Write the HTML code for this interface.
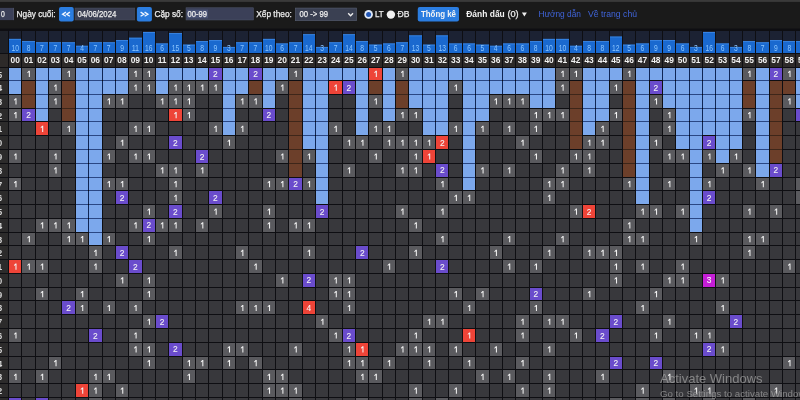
<!DOCTYPE html>
<html><head><meta charset="utf-8">
<style>
html,body{margin:0;padding:0;width:800px;height:400px;overflow:hidden;background:#1a1a1a;}
body{position:relative;font-family:"Liberation Sans", sans-serif;}
svg text{font-family:"Liberation Sans", sans-serif;}
.bt{font-size:8.2px;fill:#8cc6ff;text-anchor:middle;}
.nt{font-size:8.4px;font-weight:bold;fill:#f2f2f2;text-anchor:middle;}
.ht{font-size:8.5px;fill:#ececec;stroke:#ececec;stroke-width:0.25px;}
.hb{font-size:8.5px;font-weight:bold;fill:#f4f4f4;}
.hl{font-size:8.5px;fill:#3f63d8;}
.lt{font-size:8.4px;font-weight:bold;fill:#d8d8d8;text-anchor:end;}
.aw{font-size:13px;fill:#a8a8a8;fill-opacity:0.68;}
.aw2{font-size:9.7px;fill:#a8a8a8;fill-opacity:0.68;}
.ct{font-size:8.4px;fill:#f4f4f4;stroke:#f4f4f4;stroke-width:0.1px;text-anchor:middle;}
.c1{fill:#f2f2f2;}
</style></head><body>
<svg width="800" height="400" viewBox="0 0 800 400" style="position:absolute;left:0;top:0;will-change:transform">
<rect x="0" y="0" width="800" height="30" fill="#1a1a1a"/>
<rect x="0" y="0" width="800" height="1.9" fill="#3a3a3a"/>
<rect x="-2" y="7.9" width="15.9" height="12.2" fill="#3b4058"/>
<rect x="13.3" y="7.9" width="0.6" height="12.2" fill="#5a5f70"/>
<text x="1.1" y="16.9" class="ht" textLength="3.8" lengthAdjust="spacingAndGlyphs" >0</text>
<text x="16.6" y="16.9" class="ht" textLength="39" lengthAdjust="spacingAndGlyphs" >Ngày cuối:</text>
<rect x="59" y="6.9" width="14.75" height="14.6" rx="2" fill="#2b7de0"/>
<path d="M65.9 12.1L62.6 14.2L65.9 16.3M69.9 12.1L66.6 14.2L69.9 16.3" fill="none" stroke="#f0f6ff" stroke-width="1.35"/>
<rect x="75" y="8" width="59.75" height="12" fill="#3b3f52" stroke="#4a4f60" stroke-width="0.5"/>
<text x="77.5" y="16.9" class="ht" textLength="38.75" lengthAdjust="spacingAndGlyphs" >04/06/2024</text>
<rect x="136.9" y="6.9" width="15" height="14.6" rx="2" fill="#2b7de0"/>
<path d="M140.6 12.1L143.9 14.2L140.6 16.3M144.6 12.1L147.9 14.2L144.6 16.3" fill="none" stroke="#f0f6ff" stroke-width="1.35"/>
<text x="154.4" y="16.9" class="ht" textLength="28.6" lengthAdjust="spacingAndGlyphs" >Cặp số:</text>
<rect x="186" y="7.75" width="67.5" height="12.25" fill="#3b4058" stroke="#4e5468" stroke-width="0.5"/>
<rect x="187" y="9.6" width="21" height="8.8" fill="#485072"/>
<text x="187.5" y="16.9" class="ht" textLength="19.5" lengthAdjust="spacingAndGlyphs" >00-99</text>
<text x="256.25" y="16.9" class="ht" textLength="35.6" lengthAdjust="spacingAndGlyphs" >Xếp theo:</text>
<rect x="295.3" y="8.05" width="61.3" height="12.65" fill="#3a4052" stroke="#596072" stroke-width="0.6"/>
<text x="299.4" y="16.9" class="ht" textLength="28.6" lengthAdjust="spacingAndGlyphs" >00 -&gt; 99</text>
<polyline points="348.2,13.2 350.6,15.8 353,13.2" fill="none" stroke="#eeeeee" stroke-width="1.35"/>
<circle cx="368.6" cy="14.4" r="4.3" fill="#dfe9f7"/>
<circle cx="368.6" cy="14.4" r="2.5" fill="#1f55b5"/>
<text x="375" y="16.9" class="ht" textLength="8.75" lengthAdjust="spacingAndGlyphs" >LT</text>
<circle cx="390.9" cy="14.6" r="4.2" fill="#f2f2f2"/>
<text x="397.5" y="16.9" class="ht" textLength="11.9" lengthAdjust="spacingAndGlyphs" >ĐB</text>
<rect x="417.75" y="6.9" width="41.25" height="14.6" rx="2" fill="#2b7de0"/>
<text x="421" y="17" class="hb" textLength="35" lengthAdjust="spacingAndGlyphs" >Thống kê</text>
<text x="466.25" y="16.9" class="hb" textLength="38.5" lengthAdjust="spacingAndGlyphs" >Đánh dấu</text>
<text x="507.4" y="16.9" class="ht" textLength="11.3" lengthAdjust="spacingAndGlyphs" >(0)</text>
<polygon points="521.9,12.6 526.9,12.6 524.4,16.6" fill="#eeeeee"/>
<text x="538.4" y="17.2" class="hl" textLength="42.6" lengthAdjust="spacingAndGlyphs" >Hướng dẫn</text>
<text x="588" y="17.2" class="hl" textLength="49" lengthAdjust="spacingAndGlyphs" >Về trang chủ</text>
<rect x="0" y="28.6" width="800" height="371.4" fill="#0e0e12"/>
<rect x="0" y="31" width="8" height="22" fill="#1e2128"/>
<rect x="0" y="54" width="8" height="13" fill="#2d2a29"/>
<rect x="9" y="31" width="12" height="22" fill="#1c2233"/>
<rect x="9" y="38.9" width="12" height="14.1" fill="#1a69cf"/>
<rect x="9" y="38.9" width="12" height="0.8" fill="#3f8ae6"/>
<rect x="9" y="54" width="12" height="13" fill="#2d2a29"/>
<rect x="22" y="31" width="13" height="22" fill="#1c2233"/>
<rect x="22" y="41.2" width="13" height="11.8" fill="#1a69cf"/>
<rect x="22" y="41.2" width="13" height="0.8" fill="#3f8ae6"/>
<rect x="22" y="54" width="13" height="13" fill="#2d2a29"/>
<rect x="36" y="31" width="12" height="22" fill="#1c2233"/>
<rect x="36" y="42.35" width="12" height="10.65" fill="#1a69cf"/>
<rect x="36" y="42.35" width="12" height="0.8" fill="#3f8ae6"/>
<rect x="36" y="54" width="12" height="13" fill="#2d2a29"/>
<rect x="49" y="31" width="12" height="22" fill="#1c2233"/>
<rect x="49" y="42.35" width="12" height="10.65" fill="#1a69cf"/>
<rect x="49" y="42.35" width="12" height="0.8" fill="#3f8ae6"/>
<rect x="49" y="54" width="12" height="13" fill="#2d2a29"/>
<rect x="62" y="31" width="13" height="22" fill="#1c2233"/>
<rect x="62" y="42.35" width="13" height="10.65" fill="#1a69cf"/>
<rect x="62" y="42.35" width="13" height="0.8" fill="#3f8ae6"/>
<rect x="62" y="54" width="13" height="13" fill="#2d2a29"/>
<rect x="76" y="31" width="12" height="22" fill="#1c2233"/>
<rect x="76" y="45.8" width="12" height="7.2" fill="#1a69cf"/>
<rect x="76" y="45.8" width="12" height="0.8" fill="#3f8ae6"/>
<rect x="76" y="54" width="12" height="13" fill="#2d2a29"/>
<rect x="89" y="31" width="13" height="22" fill="#1c2233"/>
<rect x="89" y="42.35" width="13" height="10.65" fill="#1a69cf"/>
<rect x="89" y="42.35" width="13" height="0.8" fill="#3f8ae6"/>
<rect x="89" y="54" width="13" height="13" fill="#2d2a29"/>
<rect x="103" y="31" width="12" height="22" fill="#1c2233"/>
<rect x="103" y="42.35" width="12" height="10.65" fill="#1a69cf"/>
<rect x="103" y="42.35" width="12" height="0.8" fill="#3f8ae6"/>
<rect x="103" y="54" width="12" height="13" fill="#2d2a29"/>
<rect x="116" y="31" width="12" height="22" fill="#1c2233"/>
<rect x="116" y="40.05" width="12" height="12.95" fill="#1a69cf"/>
<rect x="116" y="40.05" width="12" height="0.8" fill="#3f8ae6"/>
<rect x="116" y="54" width="12" height="13" fill="#2d2a29"/>
<rect x="129" y="31" width="13" height="22" fill="#1c2233"/>
<rect x="129" y="37.75" width="13" height="15.25" fill="#1a69cf"/>
<rect x="129" y="37.75" width="13" height="0.8" fill="#3f8ae6"/>
<rect x="129" y="54" width="13" height="13" fill="#2d2a29"/>
<rect x="143" y="31" width="12" height="22" fill="#1c2233"/>
<rect x="143" y="32" width="12" height="21" fill="#1a69cf"/>
<rect x="143" y="32" width="12" height="0.8" fill="#3f8ae6"/>
<rect x="143" y="54" width="12" height="13" fill="#2d2a29"/>
<rect x="156" y="31" width="12" height="22" fill="#1c2233"/>
<rect x="156" y="43.5" width="12" height="9.5" fill="#1a69cf"/>
<rect x="156" y="43.5" width="12" height="0.8" fill="#3f8ae6"/>
<rect x="156" y="54" width="12" height="13" fill="#2d2a29"/>
<rect x="169" y="31" width="13" height="22" fill="#1c2233"/>
<rect x="169" y="33.15" width="13" height="19.85" fill="#1a69cf"/>
<rect x="169" y="33.15" width="13" height="0.8" fill="#3f8ae6"/>
<rect x="169" y="54" width="13" height="13" fill="#2d2a29"/>
<rect x="183" y="31" width="12" height="22" fill="#1c2233"/>
<rect x="183" y="44.65" width="12" height="8.35" fill="#1a69cf"/>
<rect x="183" y="44.65" width="12" height="0.8" fill="#3f8ae6"/>
<rect x="183" y="54" width="12" height="13" fill="#2d2a29"/>
<rect x="196" y="31" width="12" height="22" fill="#1c2233"/>
<rect x="196" y="41.2" width="12" height="11.8" fill="#1a69cf"/>
<rect x="196" y="41.2" width="12" height="0.8" fill="#3f8ae6"/>
<rect x="196" y="54" width="12" height="13" fill="#2d2a29"/>
<rect x="209" y="31" width="13" height="22" fill="#1c2233"/>
<rect x="209" y="40.05" width="13" height="12.95" fill="#1a69cf"/>
<rect x="209" y="40.05" width="13" height="0.8" fill="#3f8ae6"/>
<rect x="209" y="54" width="13" height="13" fill="#2d2a29"/>
<rect x="223" y="31" width="12" height="22" fill="#1c2233"/>
<rect x="223" y="46.95" width="12" height="6.05" fill="#1a69cf"/>
<rect x="223" y="46.95" width="12" height="0.8" fill="#3f8ae6"/>
<rect x="223" y="54" width="12" height="13" fill="#2d2a29"/>
<rect x="236" y="31" width="12" height="22" fill="#1c2233"/>
<rect x="236" y="42.35" width="12" height="10.65" fill="#1a69cf"/>
<rect x="236" y="42.35" width="12" height="0.8" fill="#3f8ae6"/>
<rect x="236" y="54" width="12" height="13" fill="#2d2a29"/>
<rect x="249" y="31" width="13" height="22" fill="#1c2233"/>
<rect x="249" y="42.35" width="13" height="10.65" fill="#1a69cf"/>
<rect x="249" y="42.35" width="13" height="0.8" fill="#3f8ae6"/>
<rect x="249" y="54" width="13" height="13" fill="#2d2a29"/>
<rect x="263" y="31" width="12" height="22" fill="#1c2233"/>
<rect x="263" y="38.9" width="12" height="14.1" fill="#1a69cf"/>
<rect x="263" y="38.9" width="12" height="0.8" fill="#3f8ae6"/>
<rect x="263" y="54" width="12" height="13" fill="#2d2a29"/>
<rect x="276" y="31" width="12" height="22" fill="#1c2233"/>
<rect x="276" y="43.5" width="12" height="9.5" fill="#1a69cf"/>
<rect x="276" y="43.5" width="12" height="0.8" fill="#3f8ae6"/>
<rect x="276" y="54" width="12" height="13" fill="#2d2a29"/>
<rect x="289" y="31" width="13" height="22" fill="#1c2233"/>
<rect x="289" y="42.35" width="13" height="10.65" fill="#1a69cf"/>
<rect x="289" y="42.35" width="13" height="0.8" fill="#3f8ae6"/>
<rect x="289" y="54" width="13" height="13" fill="#2d2a29"/>
<rect x="303" y="31" width="12" height="22" fill="#1c2233"/>
<rect x="303" y="34.3" width="12" height="18.7" fill="#1a69cf"/>
<rect x="303" y="34.3" width="12" height="0.8" fill="#3f8ae6"/>
<rect x="303" y="54" width="12" height="13" fill="#2d2a29"/>
<rect x="316" y="31" width="12" height="22" fill="#1c2233"/>
<rect x="316" y="46.95" width="12" height="6.05" fill="#1a69cf"/>
<rect x="316" y="46.95" width="12" height="0.8" fill="#3f8ae6"/>
<rect x="316" y="54" width="12" height="13" fill="#2d2a29"/>
<rect x="329" y="31" width="13" height="22" fill="#1c2233"/>
<rect x="329" y="42.35" width="13" height="10.65" fill="#1a69cf"/>
<rect x="329" y="42.35" width="13" height="0.8" fill="#3f8ae6"/>
<rect x="329" y="54" width="13" height="13" fill="#2d2a29"/>
<rect x="343" y="31" width="12" height="22" fill="#1c2233"/>
<rect x="343" y="34.3" width="12" height="18.7" fill="#1a69cf"/>
<rect x="343" y="34.3" width="12" height="0.8" fill="#3f8ae6"/>
<rect x="343" y="54" width="12" height="13" fill="#2d2a29"/>
<rect x="356" y="31" width="12" height="22" fill="#1c2233"/>
<rect x="356" y="41.2" width="12" height="11.8" fill="#1a69cf"/>
<rect x="356" y="41.2" width="12" height="0.8" fill="#3f8ae6"/>
<rect x="356" y="54" width="12" height="13" fill="#2d2a29"/>
<rect x="369" y="31" width="13" height="22" fill="#1c2233"/>
<rect x="369" y="44.65" width="13" height="8.35" fill="#1a69cf"/>
<rect x="369" y="44.65" width="13" height="0.8" fill="#3f8ae6"/>
<rect x="369" y="54" width="13" height="13" fill="#2d2a29"/>
<rect x="383" y="31" width="12" height="22" fill="#1c2233"/>
<rect x="383" y="43.5" width="12" height="9.5" fill="#1a69cf"/>
<rect x="383" y="43.5" width="12" height="0.8" fill="#3f8ae6"/>
<rect x="383" y="54" width="12" height="13" fill="#2d2a29"/>
<rect x="396" y="31" width="12" height="22" fill="#1c2233"/>
<rect x="396" y="42.35" width="12" height="10.65" fill="#1a69cf"/>
<rect x="396" y="42.35" width="12" height="0.8" fill="#3f8ae6"/>
<rect x="396" y="54" width="12" height="13" fill="#2d2a29"/>
<rect x="409" y="31" width="13" height="22" fill="#1c2233"/>
<rect x="409" y="35.45" width="13" height="17.55" fill="#1a69cf"/>
<rect x="409" y="35.45" width="13" height="0.8" fill="#3f8ae6"/>
<rect x="409" y="54" width="13" height="13" fill="#2d2a29"/>
<rect x="423" y="31" width="12" height="22" fill="#1c2233"/>
<rect x="423" y="44.65" width="12" height="8.35" fill="#1a69cf"/>
<rect x="423" y="44.65" width="12" height="0.8" fill="#3f8ae6"/>
<rect x="423" y="54" width="12" height="13" fill="#2d2a29"/>
<rect x="436" y="31" width="12" height="22" fill="#1c2233"/>
<rect x="436" y="35.45" width="12" height="17.55" fill="#1a69cf"/>
<rect x="436" y="35.45" width="12" height="0.8" fill="#3f8ae6"/>
<rect x="436" y="54" width="12" height="13" fill="#2d2a29"/>
<rect x="449" y="31" width="13" height="22" fill="#1c2233"/>
<rect x="449" y="43.5" width="13" height="9.5" fill="#1a69cf"/>
<rect x="449" y="43.5" width="13" height="0.8" fill="#3f8ae6"/>
<rect x="449" y="54" width="13" height="13" fill="#2d2a29"/>
<rect x="463" y="31" width="12" height="22" fill="#1c2233"/>
<rect x="463" y="43.5" width="12" height="9.5" fill="#1a69cf"/>
<rect x="463" y="43.5" width="12" height="0.8" fill="#3f8ae6"/>
<rect x="463" y="54" width="12" height="13" fill="#2d2a29"/>
<rect x="476" y="31" width="13" height="22" fill="#1c2233"/>
<rect x="476" y="44.65" width="13" height="8.35" fill="#1a69cf"/>
<rect x="476" y="44.65" width="13" height="0.8" fill="#3f8ae6"/>
<rect x="476" y="54" width="13" height="13" fill="#2d2a29"/>
<rect x="490" y="31" width="12" height="22" fill="#1c2233"/>
<rect x="490" y="45.8" width="12" height="7.2" fill="#1a69cf"/>
<rect x="490" y="45.8" width="12" height="0.8" fill="#3f8ae6"/>
<rect x="490" y="54" width="12" height="13" fill="#2d2a29"/>
<rect x="503" y="31" width="12" height="22" fill="#1c2233"/>
<rect x="503" y="43.5" width="12" height="9.5" fill="#1a69cf"/>
<rect x="503" y="43.5" width="12" height="0.8" fill="#3f8ae6"/>
<rect x="503" y="54" width="12" height="13" fill="#2d2a29"/>
<rect x="516" y="31" width="13" height="22" fill="#1c2233"/>
<rect x="516" y="43.5" width="13" height="9.5" fill="#1a69cf"/>
<rect x="516" y="43.5" width="13" height="0.8" fill="#3f8ae6"/>
<rect x="516" y="54" width="13" height="13" fill="#2d2a29"/>
<rect x="530" y="31" width="12" height="22" fill="#1c2233"/>
<rect x="530" y="41.2" width="12" height="11.8" fill="#1a69cf"/>
<rect x="530" y="41.2" width="12" height="0.8" fill="#3f8ae6"/>
<rect x="530" y="54" width="12" height="13" fill="#2d2a29"/>
<rect x="543" y="31" width="12" height="22" fill="#1c2233"/>
<rect x="543" y="38.9" width="12" height="14.1" fill="#1a69cf"/>
<rect x="543" y="38.9" width="12" height="0.8" fill="#3f8ae6"/>
<rect x="543" y="54" width="12" height="13" fill="#2d2a29"/>
<rect x="556" y="31" width="13" height="22" fill="#1c2233"/>
<rect x="556" y="38.9" width="13" height="14.1" fill="#1a69cf"/>
<rect x="556" y="38.9" width="13" height="0.8" fill="#3f8ae6"/>
<rect x="556" y="54" width="13" height="13" fill="#2d2a29"/>
<rect x="570" y="31" width="12" height="22" fill="#1c2233"/>
<rect x="570" y="45.8" width="12" height="7.2" fill="#1a69cf"/>
<rect x="570" y="45.8" width="12" height="0.8" fill="#3f8ae6"/>
<rect x="570" y="54" width="12" height="13" fill="#2d2a29"/>
<rect x="583" y="31" width="12" height="22" fill="#1c2233"/>
<rect x="583" y="41.2" width="12" height="11.8" fill="#1a69cf"/>
<rect x="583" y="41.2" width="12" height="0.8" fill="#3f8ae6"/>
<rect x="583" y="54" width="12" height="13" fill="#2d2a29"/>
<rect x="596" y="31" width="13" height="22" fill="#1c2233"/>
<rect x="596" y="41.2" width="13" height="11.8" fill="#1a69cf"/>
<rect x="596" y="41.2" width="13" height="0.8" fill="#3f8ae6"/>
<rect x="596" y="54" width="13" height="13" fill="#2d2a29"/>
<rect x="610" y="31" width="12" height="22" fill="#1c2233"/>
<rect x="610" y="36.6" width="12" height="16.4" fill="#1a69cf"/>
<rect x="610" y="36.6" width="12" height="0.8" fill="#3f8ae6"/>
<rect x="610" y="54" width="12" height="13" fill="#2d2a29"/>
<rect x="623" y="31" width="12" height="22" fill="#1c2233"/>
<rect x="623" y="44.65" width="12" height="8.35" fill="#1a69cf"/>
<rect x="623" y="44.65" width="12" height="0.8" fill="#3f8ae6"/>
<rect x="623" y="54" width="12" height="13" fill="#2d2a29"/>
<rect x="636" y="31" width="13" height="22" fill="#1c2233"/>
<rect x="636" y="43.5" width="13" height="9.5" fill="#1a69cf"/>
<rect x="636" y="43.5" width="13" height="0.8" fill="#3f8ae6"/>
<rect x="636" y="54" width="13" height="13" fill="#2d2a29"/>
<rect x="650" y="31" width="12" height="22" fill="#1c2233"/>
<rect x="650" y="40.05" width="12" height="12.95" fill="#1a69cf"/>
<rect x="650" y="40.05" width="12" height="0.8" fill="#3f8ae6"/>
<rect x="650" y="54" width="12" height="13" fill="#2d2a29"/>
<rect x="663" y="31" width="12" height="22" fill="#1c2233"/>
<rect x="663" y="40.05" width="12" height="12.95" fill="#1a69cf"/>
<rect x="663" y="40.05" width="12" height="0.8" fill="#3f8ae6"/>
<rect x="663" y="54" width="12" height="13" fill="#2d2a29"/>
<rect x="676" y="31" width="13" height="22" fill="#1c2233"/>
<rect x="676" y="43.5" width="13" height="9.5" fill="#1a69cf"/>
<rect x="676" y="43.5" width="13" height="0.8" fill="#3f8ae6"/>
<rect x="676" y="54" width="13" height="13" fill="#2d2a29"/>
<rect x="690" y="31" width="12" height="22" fill="#1c2233"/>
<rect x="690" y="46.95" width="12" height="6.05" fill="#1a69cf"/>
<rect x="690" y="46.95" width="12" height="0.8" fill="#3f8ae6"/>
<rect x="690" y="54" width="12" height="13" fill="#2d2a29"/>
<rect x="703" y="31" width="12" height="22" fill="#1c2233"/>
<rect x="703" y="32" width="12" height="21" fill="#1a69cf"/>
<rect x="703" y="32" width="12" height="0.8" fill="#3f8ae6"/>
<rect x="703" y="54" width="12" height="13" fill="#2d2a29"/>
<rect x="716" y="31" width="13" height="22" fill="#1c2233"/>
<rect x="716" y="43.5" width="13" height="9.5" fill="#1a69cf"/>
<rect x="716" y="43.5" width="13" height="0.8" fill="#3f8ae6"/>
<rect x="716" y="54" width="13" height="13" fill="#2d2a29"/>
<rect x="730" y="31" width="12" height="22" fill="#1c2233"/>
<rect x="730" y="46.95" width="12" height="6.05" fill="#1a69cf"/>
<rect x="730" y="46.95" width="12" height="0.8" fill="#3f8ae6"/>
<rect x="730" y="54" width="12" height="13" fill="#2d2a29"/>
<rect x="743" y="31" width="12" height="22" fill="#1c2233"/>
<rect x="743" y="41.2" width="12" height="11.8" fill="#1a69cf"/>
<rect x="743" y="41.2" width="12" height="0.8" fill="#3f8ae6"/>
<rect x="743" y="54" width="12" height="13" fill="#2d2a29"/>
<rect x="756" y="31" width="13" height="22" fill="#1c2233"/>
<rect x="756" y="42.35" width="13" height="10.65" fill="#1a69cf"/>
<rect x="756" y="42.35" width="13" height="0.8" fill="#3f8ae6"/>
<rect x="756" y="54" width="13" height="13" fill="#2d2a29"/>
<rect x="770" y="31" width="12" height="22" fill="#1c2233"/>
<rect x="770" y="40.05" width="12" height="12.95" fill="#1a69cf"/>
<rect x="770" y="40.05" width="12" height="0.8" fill="#3f8ae6"/>
<rect x="770" y="54" width="12" height="13" fill="#2d2a29"/>
<rect x="783" y="31" width="12" height="22" fill="#1c2233"/>
<rect x="783" y="41.2" width="12" height="11.8" fill="#1a69cf"/>
<rect x="783" y="41.2" width="12" height="0.8" fill="#3f8ae6"/>
<rect x="783" y="54" width="12" height="13" fill="#2d2a29"/>
<rect x="796" y="31" width="13" height="22" fill="#1c2233"/>
<rect x="796" y="41.2" width="13" height="11.8" fill="#1a69cf"/>
<rect x="796" y="41.2" width="13" height="0.8" fill="#3f8ae6"/>
<rect x="796" y="54" width="13" height="13" fill="#2d2a29"/>
<rect x="0" y="68" width="8" height="12" fill="#2c2b2b"/>
<rect x="9" y="68" width="12" height="12" fill="#7ca8ec"/>
<rect x="22" y="68" width="13" height="12" fill="#5a5a5e"/>
<rect x="36" y="68" width="12" height="12" fill="#7ca8ec"/>
<rect x="49" y="68" width="12" height="12" fill="#7ca8ec"/>
<rect x="62" y="68" width="13" height="12" fill="#5a5a5e"/>
<rect x="76" y="68" width="12" height="12" fill="#7ca8ec"/>
<rect x="89" y="68" width="13" height="12" fill="#7ca8ec"/>
<rect x="103" y="68" width="12" height="12" fill="#7ca8ec"/>
<rect x="116" y="68" width="12" height="12" fill="#7ca8ec"/>
<rect x="129" y="68" width="13" height="12" fill="#5a5a5e"/>
<rect x="143" y="68" width="12" height="12" fill="#5a5a5e"/>
<rect x="156" y="68" width="12" height="12" fill="#7ca8ec"/>
<rect x="169" y="68" width="13" height="12" fill="#7ca8ec"/>
<rect x="183" y="68" width="12" height="12" fill="#7ca8ec"/>
<rect x="196" y="68" width="12" height="12" fill="#7ca8ec"/>
<rect x="209" y="68" width="13" height="12" fill="#6a4ccc"/>
<rect x="223" y="68" width="12" height="12" fill="#7ca8ec"/>
<rect x="236" y="68" width="12" height="12" fill="#7ca8ec"/>
<rect x="249" y="68" width="13" height="12" fill="#6a4ccc"/>
<rect x="263" y="68" width="12" height="12" fill="#7ca8ec"/>
<rect x="276" y="68" width="12" height="12" fill="#7ca8ec"/>
<rect x="289" y="68" width="13" height="12" fill="#5a5a5e"/>
<rect x="303" y="68" width="12" height="12" fill="#7ca8ec"/>
<rect x="316" y="68" width="12" height="12" fill="#7ca8ec"/>
<rect x="329" y="68" width="13" height="12" fill="#7ca8ec"/>
<rect x="343" y="68" width="12" height="12" fill="#7ca8ec"/>
<rect x="356" y="68" width="12" height="12" fill="#7ca8ec"/>
<rect x="369" y="68" width="13" height="12" fill="#ee4438"/>
<rect x="383" y="68" width="12" height="12" fill="#7ca8ec"/>
<rect x="396" y="68" width="12" height="12" fill="#5a5a5e"/>
<rect x="409" y="68" width="13" height="12" fill="#7ca8ec"/>
<rect x="423" y="68" width="12" height="12" fill="#7ca8ec"/>
<rect x="436" y="68" width="12" height="12" fill="#7ca8ec"/>
<rect x="449" y="68" width="13" height="12" fill="#7ca8ec"/>
<rect x="463" y="68" width="12" height="12" fill="#7ca8ec"/>
<rect x="476" y="68" width="13" height="12" fill="#7ca8ec"/>
<rect x="490" y="68" width="12" height="12" fill="#7ca8ec"/>
<rect x="503" y="68" width="12" height="12" fill="#7ca8ec"/>
<rect x="516" y="68" width="13" height="12" fill="#7ca8ec"/>
<rect x="530" y="68" width="12" height="12" fill="#7ca8ec"/>
<rect x="543" y="68" width="12" height="12" fill="#7ca8ec"/>
<rect x="556" y="68" width="13" height="12" fill="#5a5a5e"/>
<rect x="570" y="68" width="12" height="12" fill="#5a5a5e"/>
<rect x="583" y="68" width="12" height="12" fill="#7ca8ec"/>
<rect x="596" y="68" width="13" height="12" fill="#7ca8ec"/>
<rect x="610" y="68" width="12" height="12" fill="#7ca8ec"/>
<rect x="623" y="68" width="12" height="12" fill="#5a5a5e"/>
<rect x="636" y="68" width="13" height="12" fill="#7ca8ec"/>
<rect x="650" y="68" width="12" height="12" fill="#7ca8ec"/>
<rect x="663" y="68" width="12" height="12" fill="#7ca8ec"/>
<rect x="676" y="68" width="13" height="12" fill="#7ca8ec"/>
<rect x="690" y="68" width="12" height="12" fill="#7ca8ec"/>
<rect x="703" y="68" width="12" height="12" fill="#7ca8ec"/>
<rect x="716" y="68" width="13" height="12" fill="#7ca8ec"/>
<rect x="730" y="68" width="12" height="12" fill="#7ca8ec"/>
<rect x="743" y="68" width="12" height="12" fill="#5a5a5e"/>
<rect x="756" y="68" width="13" height="12" fill="#7ca8ec"/>
<rect x="770" y="68" width="12" height="12" fill="#6a4ccc"/>
<rect x="783" y="68" width="12" height="12" fill="#5a5a5e"/>
<rect x="796" y="68" width="13" height="12" fill="#7ca8ec"/>
<rect x="0" y="81" width="8" height="13" fill="#2c2b2b"/>
<rect x="9" y="81" width="12" height="13" fill="#7ca8ec"/>
<rect x="22" y="81" width="13" height="13" fill="#6c3f2a"/>
<rect x="36" y="81" width="12" height="13" fill="#7ca8ec"/>
<rect x="49" y="81" width="12" height="13" fill="#5a5a5e"/>
<rect x="62" y="81" width="13" height="13" fill="#6c3f2a"/>
<rect x="76" y="81" width="12" height="13" fill="#7ca8ec"/>
<rect x="89" y="81" width="13" height="13" fill="#7ca8ec"/>
<rect x="103" y="81" width="12" height="13" fill="#7ca8ec"/>
<rect x="116" y="81" width="12" height="13" fill="#7ca8ec"/>
<rect x="129" y="81" width="13" height="13" fill="#5a5a5e"/>
<rect x="143" y="81" width="12" height="13" fill="#5a5a5e"/>
<rect x="156" y="81" width="12" height="13" fill="#7ca8ec"/>
<rect x="169" y="81" width="13" height="13" fill="#5a5a5e"/>
<rect x="183" y="81" width="12" height="13" fill="#5a5a5e"/>
<rect x="196" y="81" width="12" height="13" fill="#5a5a5e"/>
<rect x="209" y="81" width="13" height="13" fill="#5a5a5e"/>
<rect x="223" y="81" width="12" height="13" fill="#7ca8ec"/>
<rect x="236" y="81" width="12" height="13" fill="#7ca8ec"/>
<rect x="249" y="81" width="13" height="13" fill="#6c3f2a"/>
<rect x="263" y="81" width="12" height="13" fill="#7ca8ec"/>
<rect x="276" y="81" width="12" height="13" fill="#5a5a5e"/>
<rect x="289" y="81" width="13" height="13" fill="#6c3f2a"/>
<rect x="303" y="81" width="12" height="13" fill="#7ca8ec"/>
<rect x="316" y="81" width="12" height="13" fill="#7ca8ec"/>
<rect x="329" y="81" width="13" height="13" fill="#ee4438"/>
<rect x="343" y="81" width="12" height="13" fill="#6a4ccc"/>
<rect x="356" y="81" width="12" height="13" fill="#7ca8ec"/>
<rect x="369" y="81" width="13" height="13" fill="#6c3f2a"/>
<rect x="383" y="81" width="12" height="13" fill="#7ca8ec"/>
<rect x="396" y="81" width="12" height="13" fill="#6c3f2a"/>
<rect x="409" y="81" width="13" height="13" fill="#7ca8ec"/>
<rect x="423" y="81" width="12" height="13" fill="#7ca8ec"/>
<rect x="436" y="81" width="12" height="13" fill="#7ca8ec"/>
<rect x="449" y="81" width="13" height="13" fill="#5a5a5e"/>
<rect x="463" y="81" width="12" height="13" fill="#7ca8ec"/>
<rect x="476" y="81" width="13" height="13" fill="#7ca8ec"/>
<rect x="490" y="81" width="12" height="13" fill="#7ca8ec"/>
<rect x="503" y="81" width="12" height="13" fill="#7ca8ec"/>
<rect x="516" y="81" width="13" height="13" fill="#7ca8ec"/>
<rect x="530" y="81" width="12" height="13" fill="#7ca8ec"/>
<rect x="543" y="81" width="12" height="13" fill="#7ca8ec"/>
<rect x="556" y="81" width="13" height="13" fill="#5a5a5e"/>
<rect x="570" y="81" width="12" height="13" fill="#6c3f2a"/>
<rect x="583" y="81" width="12" height="13" fill="#7ca8ec"/>
<rect x="596" y="81" width="13" height="13" fill="#7ca8ec"/>
<rect x="610" y="81" width="12" height="13" fill="#5a5a5e"/>
<rect x="623" y="81" width="12" height="13" fill="#6c3f2a"/>
<rect x="636" y="81" width="13" height="13" fill="#7ca8ec"/>
<rect x="650" y="81" width="12" height="13" fill="#6a4ccc"/>
<rect x="663" y="81" width="12" height="13" fill="#7ca8ec"/>
<rect x="676" y="81" width="13" height="13" fill="#7ca8ec"/>
<rect x="690" y="81" width="12" height="13" fill="#7ca8ec"/>
<rect x="703" y="81" width="12" height="13" fill="#7ca8ec"/>
<rect x="716" y="81" width="13" height="13" fill="#7ca8ec"/>
<rect x="730" y="81" width="12" height="13" fill="#7ca8ec"/>
<rect x="743" y="81" width="12" height="13" fill="#6c3f2a"/>
<rect x="756" y="81" width="13" height="13" fill="#7ca8ec"/>
<rect x="770" y="81" width="12" height="13" fill="#6c3f2a"/>
<rect x="783" y="81" width="12" height="13" fill="#6c3f2a"/>
<rect x="796" y="81" width="13" height="13" fill="#7ca8ec"/>
<rect x="0" y="95" width="8" height="13" fill="#2c2b2b"/>
<rect x="9" y="95" width="12" height="13" fill="#5a5a5e"/>
<rect x="22" y="95" width="13" height="13" fill="#6c3f2a"/>
<rect x="36" y="95" width="12" height="13" fill="#7ca8ec"/>
<rect x="49" y="95" width="12" height="13" fill="#5a5a5e"/>
<rect x="62" y="95" width="13" height="13" fill="#6c3f2a"/>
<rect x="76" y="95" width="12" height="13" fill="#7ca8ec"/>
<rect x="89" y="95" width="13" height="13" fill="#7ca8ec"/>
<rect x="103" y="95" width="12" height="13" fill="#5a5a5e"/>
<rect x="116" y="95" width="12" height="13" fill="#5a5a5e"/>
<rect x="129" y="95" width="13" height="13" fill="#38383c"/>
<rect x="143" y="95" width="12" height="13" fill="#38383c"/>
<rect x="156" y="95" width="12" height="13" fill="#5a5a5e"/>
<rect x="169" y="95" width="13" height="13" fill="#5a5a5e"/>
<rect x="183" y="95" width="12" height="13" fill="#5a5a5e"/>
<rect x="196" y="95" width="12" height="13" fill="#38383c"/>
<rect x="209" y="95" width="13" height="13" fill="#38383c"/>
<rect x="223" y="95" width="12" height="13" fill="#7ca8ec"/>
<rect x="236" y="95" width="12" height="13" fill="#5a5a5e"/>
<rect x="249" y="95" width="13" height="13" fill="#5a5a5e"/>
<rect x="263" y="95" width="12" height="13" fill="#7ca8ec"/>
<rect x="276" y="95" width="12" height="13" fill="#38383c"/>
<rect x="289" y="95" width="13" height="13" fill="#6c3f2a"/>
<rect x="303" y="95" width="12" height="13" fill="#7ca8ec"/>
<rect x="316" y="95" width="12" height="13" fill="#7ca8ec"/>
<rect x="329" y="95" width="13" height="13" fill="#38383c"/>
<rect x="343" y="95" width="12" height="13" fill="#38383c"/>
<rect x="356" y="95" width="12" height="13" fill="#7ca8ec"/>
<rect x="369" y="95" width="13" height="13" fill="#5a5a5e"/>
<rect x="383" y="95" width="12" height="13" fill="#7ca8ec"/>
<rect x="396" y="95" width="12" height="13" fill="#6c3f2a"/>
<rect x="409" y="95" width="13" height="13" fill="#7ca8ec"/>
<rect x="423" y="95" width="12" height="13" fill="#7ca8ec"/>
<rect x="436" y="95" width="12" height="13" fill="#7ca8ec"/>
<rect x="449" y="95" width="13" height="13" fill="#38383c"/>
<rect x="463" y="95" width="12" height="13" fill="#7ca8ec"/>
<rect x="476" y="95" width="13" height="13" fill="#7ca8ec"/>
<rect x="490" y="95" width="12" height="13" fill="#5a5a5e"/>
<rect x="503" y="95" width="12" height="13" fill="#5a5a5e"/>
<rect x="516" y="95" width="13" height="13" fill="#5a5a5e"/>
<rect x="530" y="95" width="12" height="13" fill="#7ca8ec"/>
<rect x="543" y="95" width="12" height="13" fill="#7ca8ec"/>
<rect x="556" y="95" width="13" height="13" fill="#38383c"/>
<rect x="570" y="95" width="12" height="13" fill="#6c3f2a"/>
<rect x="583" y="95" width="12" height="13" fill="#7ca8ec"/>
<rect x="596" y="95" width="13" height="13" fill="#7ca8ec"/>
<rect x="610" y="95" width="12" height="13" fill="#38383c"/>
<rect x="623" y="95" width="12" height="13" fill="#6c3f2a"/>
<rect x="636" y="95" width="13" height="13" fill="#7ca8ec"/>
<rect x="650" y="95" width="12" height="13" fill="#5a5a5e"/>
<rect x="663" y="95" width="12" height="13" fill="#7ca8ec"/>
<rect x="676" y="95" width="13" height="13" fill="#7ca8ec"/>
<rect x="690" y="95" width="12" height="13" fill="#7ca8ec"/>
<rect x="703" y="95" width="12" height="13" fill="#7ca8ec"/>
<rect x="716" y="95" width="13" height="13" fill="#7ca8ec"/>
<rect x="730" y="95" width="12" height="13" fill="#7ca8ec"/>
<rect x="743" y="95" width="12" height="13" fill="#6c3f2a"/>
<rect x="756" y="95" width="13" height="13" fill="#7ca8ec"/>
<rect x="770" y="95" width="12" height="13" fill="#6c3f2a"/>
<rect x="783" y="95" width="12" height="13" fill="#5a5a5e"/>
<rect x="796" y="95" width="13" height="13" fill="#7ca8ec"/>
<rect x="0" y="109" width="8" height="12" fill="#2c2b2b"/>
<rect x="9" y="109" width="12" height="12" fill="#5a5a5e"/>
<rect x="22" y="109" width="13" height="12" fill="#6a4ccc"/>
<rect x="36" y="109" width="12" height="12" fill="#7ca8ec"/>
<rect x="49" y="109" width="12" height="12" fill="#38383c"/>
<rect x="62" y="109" width="13" height="12" fill="#6c3f2a"/>
<rect x="76" y="109" width="12" height="12" fill="#7ca8ec"/>
<rect x="89" y="109" width="13" height="12" fill="#7ca8ec"/>
<rect x="103" y="109" width="12" height="12" fill="#38383c"/>
<rect x="116" y="109" width="12" height="12" fill="#38383c"/>
<rect x="129" y="109" width="13" height="12" fill="#38383c"/>
<rect x="143" y="109" width="12" height="12" fill="#38383c"/>
<rect x="156" y="109" width="12" height="12" fill="#38383c"/>
<rect x="169" y="109" width="13" height="12" fill="#ee4438"/>
<rect x="183" y="109" width="12" height="12" fill="#5a5a5e"/>
<rect x="196" y="109" width="12" height="12" fill="#38383c"/>
<rect x="209" y="109" width="13" height="12" fill="#38383c"/>
<rect x="223" y="109" width="12" height="12" fill="#7ca8ec"/>
<rect x="236" y="109" width="12" height="12" fill="#38383c"/>
<rect x="249" y="109" width="13" height="12" fill="#38383c"/>
<rect x="263" y="109" width="12" height="12" fill="#6a4ccc"/>
<rect x="276" y="109" width="12" height="12" fill="#38383c"/>
<rect x="289" y="109" width="13" height="12" fill="#6c3f2a"/>
<rect x="303" y="109" width="12" height="12" fill="#7ca8ec"/>
<rect x="316" y="109" width="12" height="12" fill="#7ca8ec"/>
<rect x="329" y="109" width="13" height="12" fill="#38383c"/>
<rect x="343" y="109" width="12" height="12" fill="#38383c"/>
<rect x="356" y="109" width="12" height="12" fill="#7ca8ec"/>
<rect x="369" y="109" width="13" height="12" fill="#38383c"/>
<rect x="383" y="109" width="12" height="12" fill="#7ca8ec"/>
<rect x="396" y="109" width="12" height="12" fill="#5a5a5e"/>
<rect x="409" y="109" width="13" height="12" fill="#5a5a5e"/>
<rect x="423" y="109" width="12" height="12" fill="#7ca8ec"/>
<rect x="436" y="109" width="12" height="12" fill="#7ca8ec"/>
<rect x="449" y="109" width="13" height="12" fill="#38383c"/>
<rect x="463" y="109" width="12" height="12" fill="#7ca8ec"/>
<rect x="476" y="109" width="13" height="12" fill="#7ca8ec"/>
<rect x="490" y="109" width="12" height="12" fill="#38383c"/>
<rect x="503" y="109" width="12" height="12" fill="#38383c"/>
<rect x="516" y="109" width="13" height="12" fill="#38383c"/>
<rect x="530" y="109" width="12" height="12" fill="#5a5a5e"/>
<rect x="543" y="109" width="12" height="12" fill="#5a5a5e"/>
<rect x="556" y="109" width="13" height="12" fill="#5a5a5e"/>
<rect x="570" y="109" width="12" height="12" fill="#6c3f2a"/>
<rect x="583" y="109" width="12" height="12" fill="#7ca8ec"/>
<rect x="596" y="109" width="13" height="12" fill="#7ca8ec"/>
<rect x="610" y="109" width="12" height="12" fill="#5a5a5e"/>
<rect x="623" y="109" width="12" height="12" fill="#6c3f2a"/>
<rect x="636" y="109" width="13" height="12" fill="#7ca8ec"/>
<rect x="650" y="109" width="12" height="12" fill="#38383c"/>
<rect x="663" y="109" width="12" height="12" fill="#5a5a5e"/>
<rect x="676" y="109" width="13" height="12" fill="#7ca8ec"/>
<rect x="690" y="109" width="12" height="12" fill="#7ca8ec"/>
<rect x="703" y="109" width="12" height="12" fill="#7ca8ec"/>
<rect x="716" y="109" width="13" height="12" fill="#7ca8ec"/>
<rect x="730" y="109" width="12" height="12" fill="#7ca8ec"/>
<rect x="743" y="109" width="12" height="12" fill="#5a5a5e"/>
<rect x="756" y="109" width="13" height="12" fill="#7ca8ec"/>
<rect x="770" y="109" width="12" height="12" fill="#6c3f2a"/>
<rect x="783" y="109" width="12" height="12" fill="#38383c"/>
<rect x="796" y="109" width="13" height="12" fill="#6a4ccc"/>
<rect x="0" y="122" width="8" height="13" fill="#2c2b2b"/>
<rect x="9" y="122" width="12" height="13" fill="#38383c"/>
<rect x="22" y="122" width="13" height="13" fill="#38383c"/>
<rect x="36" y="122" width="12" height="13" fill="#ee4438"/>
<rect x="49" y="122" width="12" height="13" fill="#38383c"/>
<rect x="62" y="122" width="13" height="13" fill="#5a5a5e"/>
<rect x="76" y="122" width="12" height="13" fill="#7ca8ec"/>
<rect x="89" y="122" width="13" height="13" fill="#7ca8ec"/>
<rect x="103" y="122" width="12" height="13" fill="#38383c"/>
<rect x="116" y="122" width="12" height="13" fill="#38383c"/>
<rect x="129" y="122" width="13" height="13" fill="#5a5a5e"/>
<rect x="143" y="122" width="12" height="13" fill="#5a5a5e"/>
<rect x="156" y="122" width="12" height="13" fill="#38383c"/>
<rect x="169" y="122" width="13" height="13" fill="#38383c"/>
<rect x="183" y="122" width="12" height="13" fill="#38383c"/>
<rect x="196" y="122" width="12" height="13" fill="#38383c"/>
<rect x="209" y="122" width="13" height="13" fill="#5a5a5e"/>
<rect x="223" y="122" width="12" height="13" fill="#7ca8ec"/>
<rect x="236" y="122" width="12" height="13" fill="#5a5a5e"/>
<rect x="249" y="122" width="13" height="13" fill="#38383c"/>
<rect x="263" y="122" width="12" height="13" fill="#38383c"/>
<rect x="276" y="122" width="12" height="13" fill="#38383c"/>
<rect x="289" y="122" width="13" height="13" fill="#6c3f2a"/>
<rect x="303" y="122" width="12" height="13" fill="#7ca8ec"/>
<rect x="316" y="122" width="12" height="13" fill="#7ca8ec"/>
<rect x="329" y="122" width="13" height="13" fill="#5a5a5e"/>
<rect x="343" y="122" width="12" height="13" fill="#38383c"/>
<rect x="356" y="122" width="12" height="13" fill="#7ca8ec"/>
<rect x="369" y="122" width="13" height="13" fill="#5a5a5e"/>
<rect x="383" y="122" width="12" height="13" fill="#5a5a5e"/>
<rect x="396" y="122" width="12" height="13" fill="#38383c"/>
<rect x="409" y="122" width="13" height="13" fill="#38383c"/>
<rect x="423" y="122" width="12" height="13" fill="#7ca8ec"/>
<rect x="436" y="122" width="12" height="13" fill="#7ca8ec"/>
<rect x="449" y="122" width="13" height="13" fill="#5a5a5e"/>
<rect x="463" y="122" width="12" height="13" fill="#7ca8ec"/>
<rect x="476" y="122" width="13" height="13" fill="#5a5a5e"/>
<rect x="490" y="122" width="12" height="13" fill="#38383c"/>
<rect x="503" y="122" width="12" height="13" fill="#5a5a5e"/>
<rect x="516" y="122" width="13" height="13" fill="#38383c"/>
<rect x="530" y="122" width="12" height="13" fill="#5a5a5e"/>
<rect x="543" y="122" width="12" height="13" fill="#38383c"/>
<rect x="556" y="122" width="13" height="13" fill="#38383c"/>
<rect x="570" y="122" width="12" height="13" fill="#6c3f2a"/>
<rect x="583" y="122" width="12" height="13" fill="#7ca8ec"/>
<rect x="596" y="122" width="13" height="13" fill="#5a5a5e"/>
<rect x="610" y="122" width="12" height="13" fill="#38383c"/>
<rect x="623" y="122" width="12" height="13" fill="#6c3f2a"/>
<rect x="636" y="122" width="13" height="13" fill="#7ca8ec"/>
<rect x="650" y="122" width="12" height="13" fill="#38383c"/>
<rect x="663" y="122" width="12" height="13" fill="#5a5a5e"/>
<rect x="676" y="122" width="13" height="13" fill="#7ca8ec"/>
<rect x="690" y="122" width="12" height="13" fill="#7ca8ec"/>
<rect x="703" y="122" width="12" height="13" fill="#7ca8ec"/>
<rect x="716" y="122" width="13" height="13" fill="#7ca8ec"/>
<rect x="730" y="122" width="12" height="13" fill="#7ca8ec"/>
<rect x="743" y="122" width="12" height="13" fill="#38383c"/>
<rect x="756" y="122" width="13" height="13" fill="#7ca8ec"/>
<rect x="770" y="122" width="12" height="13" fill="#6c3f2a"/>
<rect x="783" y="122" width="12" height="13" fill="#38383c"/>
<rect x="796" y="122" width="13" height="13" fill="#38383c"/>
<rect x="0" y="136" width="8" height="13" fill="#2c2b2b"/>
<rect x="9" y="136" width="12" height="13" fill="#38383c"/>
<rect x="22" y="136" width="13" height="13" fill="#38383c"/>
<rect x="36" y="136" width="12" height="13" fill="#38383c"/>
<rect x="49" y="136" width="12" height="13" fill="#38383c"/>
<rect x="62" y="136" width="13" height="13" fill="#38383c"/>
<rect x="76" y="136" width="12" height="13" fill="#7ca8ec"/>
<rect x="89" y="136" width="13" height="13" fill="#7ca8ec"/>
<rect x="103" y="136" width="12" height="13" fill="#38383c"/>
<rect x="116" y="136" width="12" height="13" fill="#5a5a5e"/>
<rect x="129" y="136" width="13" height="13" fill="#38383c"/>
<rect x="143" y="136" width="12" height="13" fill="#38383c"/>
<rect x="156" y="136" width="12" height="13" fill="#38383c"/>
<rect x="169" y="136" width="13" height="13" fill="#6a4ccc"/>
<rect x="183" y="136" width="12" height="13" fill="#38383c"/>
<rect x="196" y="136" width="12" height="13" fill="#38383c"/>
<rect x="209" y="136" width="13" height="13" fill="#38383c"/>
<rect x="223" y="136" width="12" height="13" fill="#5a5a5e"/>
<rect x="236" y="136" width="12" height="13" fill="#38383c"/>
<rect x="249" y="136" width="13" height="13" fill="#38383c"/>
<rect x="263" y="136" width="12" height="13" fill="#38383c"/>
<rect x="276" y="136" width="12" height="13" fill="#38383c"/>
<rect x="289" y="136" width="13" height="13" fill="#6c3f2a"/>
<rect x="303" y="136" width="12" height="13" fill="#7ca8ec"/>
<rect x="316" y="136" width="12" height="13" fill="#7ca8ec"/>
<rect x="329" y="136" width="13" height="13" fill="#38383c"/>
<rect x="343" y="136" width="12" height="13" fill="#5a5a5e"/>
<rect x="356" y="136" width="12" height="13" fill="#5a5a5e"/>
<rect x="369" y="136" width="13" height="13" fill="#38383c"/>
<rect x="383" y="136" width="12" height="13" fill="#5a5a5e"/>
<rect x="396" y="136" width="12" height="13" fill="#5a5a5e"/>
<rect x="409" y="136" width="13" height="13" fill="#5a5a5e"/>
<rect x="423" y="136" width="12" height="13" fill="#5a5a5e"/>
<rect x="436" y="136" width="12" height="13" fill="#ee4438"/>
<rect x="449" y="136" width="13" height="13" fill="#38383c"/>
<rect x="463" y="136" width="12" height="13" fill="#7ca8ec"/>
<rect x="476" y="136" width="13" height="13" fill="#38383c"/>
<rect x="490" y="136" width="12" height="13" fill="#38383c"/>
<rect x="503" y="136" width="12" height="13" fill="#38383c"/>
<rect x="516" y="136" width="13" height="13" fill="#5a5a5e"/>
<rect x="530" y="136" width="12" height="13" fill="#38383c"/>
<rect x="543" y="136" width="12" height="13" fill="#38383c"/>
<rect x="556" y="136" width="13" height="13" fill="#38383c"/>
<rect x="570" y="136" width="12" height="13" fill="#6c3f2a"/>
<rect x="583" y="136" width="12" height="13" fill="#5a5a5e"/>
<rect x="596" y="136" width="13" height="13" fill="#5a5a5e"/>
<rect x="610" y="136" width="12" height="13" fill="#38383c"/>
<rect x="623" y="136" width="12" height="13" fill="#6c3f2a"/>
<rect x="636" y="136" width="13" height="13" fill="#7ca8ec"/>
<rect x="650" y="136" width="12" height="13" fill="#5a5a5e"/>
<rect x="663" y="136" width="12" height="13" fill="#38383c"/>
<rect x="676" y="136" width="13" height="13" fill="#7ca8ec"/>
<rect x="690" y="136" width="12" height="13" fill="#7ca8ec"/>
<rect x="703" y="136" width="12" height="13" fill="#6a4ccc"/>
<rect x="716" y="136" width="13" height="13" fill="#7ca8ec"/>
<rect x="730" y="136" width="12" height="13" fill="#7ca8ec"/>
<rect x="743" y="136" width="12" height="13" fill="#38383c"/>
<rect x="756" y="136" width="13" height="13" fill="#7ca8ec"/>
<rect x="770" y="136" width="12" height="13" fill="#6c3f2a"/>
<rect x="783" y="136" width="12" height="13" fill="#38383c"/>
<rect x="796" y="136" width="13" height="13" fill="#38383c"/>
<rect x="0" y="150" width="8" height="13" fill="#2c2b2b"/>
<rect x="9" y="150" width="12" height="13" fill="#5a5a5e"/>
<rect x="22" y="150" width="13" height="13" fill="#38383c"/>
<rect x="36" y="150" width="12" height="13" fill="#38383c"/>
<rect x="49" y="150" width="12" height="13" fill="#5a5a5e"/>
<rect x="62" y="150" width="13" height="13" fill="#38383c"/>
<rect x="76" y="150" width="12" height="13" fill="#7ca8ec"/>
<rect x="89" y="150" width="13" height="13" fill="#7ca8ec"/>
<rect x="103" y="150" width="12" height="13" fill="#5a5a5e"/>
<rect x="116" y="150" width="12" height="13" fill="#38383c"/>
<rect x="129" y="150" width="13" height="13" fill="#5a5a5e"/>
<rect x="143" y="150" width="12" height="13" fill="#5a5a5e"/>
<rect x="156" y="150" width="12" height="13" fill="#38383c"/>
<rect x="169" y="150" width="13" height="13" fill="#38383c"/>
<rect x="183" y="150" width="12" height="13" fill="#38383c"/>
<rect x="196" y="150" width="12" height="13" fill="#6a4ccc"/>
<rect x="209" y="150" width="13" height="13" fill="#38383c"/>
<rect x="223" y="150" width="12" height="13" fill="#38383c"/>
<rect x="236" y="150" width="12" height="13" fill="#38383c"/>
<rect x="249" y="150" width="13" height="13" fill="#38383c"/>
<rect x="263" y="150" width="12" height="13" fill="#38383c"/>
<rect x="276" y="150" width="12" height="13" fill="#5a5a5e"/>
<rect x="289" y="150" width="13" height="13" fill="#6c3f2a"/>
<rect x="303" y="150" width="12" height="13" fill="#5a5a5e"/>
<rect x="316" y="150" width="12" height="13" fill="#7ca8ec"/>
<rect x="329" y="150" width="13" height="13" fill="#38383c"/>
<rect x="343" y="150" width="12" height="13" fill="#38383c"/>
<rect x="356" y="150" width="12" height="13" fill="#38383c"/>
<rect x="369" y="150" width="13" height="13" fill="#5a5a5e"/>
<rect x="383" y="150" width="12" height="13" fill="#38383c"/>
<rect x="396" y="150" width="12" height="13" fill="#38383c"/>
<rect x="409" y="150" width="13" height="13" fill="#5a5a5e"/>
<rect x="423" y="150" width="12" height="13" fill="#ee4438"/>
<rect x="436" y="150" width="12" height="13" fill="#38383c"/>
<rect x="449" y="150" width="13" height="13" fill="#38383c"/>
<rect x="463" y="150" width="12" height="13" fill="#7ca8ec"/>
<rect x="476" y="150" width="13" height="13" fill="#38383c"/>
<rect x="490" y="150" width="12" height="13" fill="#38383c"/>
<rect x="503" y="150" width="12" height="13" fill="#38383c"/>
<rect x="516" y="150" width="13" height="13" fill="#38383c"/>
<rect x="530" y="150" width="12" height="13" fill="#5a5a5e"/>
<rect x="543" y="150" width="12" height="13" fill="#38383c"/>
<rect x="556" y="150" width="13" height="13" fill="#38383c"/>
<rect x="570" y="150" width="12" height="13" fill="#5a5a5e"/>
<rect x="583" y="150" width="12" height="13" fill="#5a5a5e"/>
<rect x="596" y="150" width="13" height="13" fill="#38383c"/>
<rect x="610" y="150" width="12" height="13" fill="#38383c"/>
<rect x="623" y="150" width="12" height="13" fill="#6c3f2a"/>
<rect x="636" y="150" width="13" height="13" fill="#7ca8ec"/>
<rect x="650" y="150" width="12" height="13" fill="#38383c"/>
<rect x="663" y="150" width="12" height="13" fill="#5a5a5e"/>
<rect x="676" y="150" width="13" height="13" fill="#5a5a5e"/>
<rect x="690" y="150" width="12" height="13" fill="#7ca8ec"/>
<rect x="703" y="150" width="12" height="13" fill="#5a5a5e"/>
<rect x="716" y="150" width="13" height="13" fill="#7ca8ec"/>
<rect x="730" y="150" width="12" height="13" fill="#5a5a5e"/>
<rect x="743" y="150" width="12" height="13" fill="#38383c"/>
<rect x="756" y="150" width="13" height="13" fill="#7ca8ec"/>
<rect x="770" y="150" width="12" height="13" fill="#6c3f2a"/>
<rect x="783" y="150" width="12" height="13" fill="#38383c"/>
<rect x="796" y="150" width="13" height="13" fill="#38383c"/>
<rect x="0" y="164" width="8" height="13" fill="#2c2b2b"/>
<rect x="9" y="164" width="12" height="13" fill="#38383c"/>
<rect x="22" y="164" width="13" height="13" fill="#38383c"/>
<rect x="36" y="164" width="12" height="13" fill="#38383c"/>
<rect x="49" y="164" width="12" height="13" fill="#5a5a5e"/>
<rect x="62" y="164" width="13" height="13" fill="#38383c"/>
<rect x="76" y="164" width="12" height="13" fill="#7ca8ec"/>
<rect x="89" y="164" width="13" height="13" fill="#7ca8ec"/>
<rect x="103" y="164" width="12" height="13" fill="#38383c"/>
<rect x="116" y="164" width="12" height="13" fill="#38383c"/>
<rect x="129" y="164" width="13" height="13" fill="#38383c"/>
<rect x="143" y="164" width="12" height="13" fill="#38383c"/>
<rect x="156" y="164" width="12" height="13" fill="#5a5a5e"/>
<rect x="169" y="164" width="13" height="13" fill="#5a5a5e"/>
<rect x="183" y="164" width="12" height="13" fill="#38383c"/>
<rect x="196" y="164" width="12" height="13" fill="#5a5a5e"/>
<rect x="209" y="164" width="13" height="13" fill="#38383c"/>
<rect x="223" y="164" width="12" height="13" fill="#38383c"/>
<rect x="236" y="164" width="12" height="13" fill="#38383c"/>
<rect x="249" y="164" width="13" height="13" fill="#38383c"/>
<rect x="263" y="164" width="12" height="13" fill="#38383c"/>
<rect x="276" y="164" width="12" height="13" fill="#38383c"/>
<rect x="289" y="164" width="13" height="13" fill="#6c3f2a"/>
<rect x="303" y="164" width="12" height="13" fill="#38383c"/>
<rect x="316" y="164" width="12" height="13" fill="#7ca8ec"/>
<rect x="329" y="164" width="13" height="13" fill="#38383c"/>
<rect x="343" y="164" width="12" height="13" fill="#5a5a5e"/>
<rect x="356" y="164" width="12" height="13" fill="#38383c"/>
<rect x="369" y="164" width="13" height="13" fill="#38383c"/>
<rect x="383" y="164" width="12" height="13" fill="#38383c"/>
<rect x="396" y="164" width="12" height="13" fill="#5a5a5e"/>
<rect x="409" y="164" width="13" height="13" fill="#5a5a5e"/>
<rect x="423" y="164" width="12" height="13" fill="#38383c"/>
<rect x="436" y="164" width="12" height="13" fill="#6a4ccc"/>
<rect x="449" y="164" width="13" height="13" fill="#38383c"/>
<rect x="463" y="164" width="12" height="13" fill="#7ca8ec"/>
<rect x="476" y="164" width="13" height="13" fill="#5a5a5e"/>
<rect x="490" y="164" width="12" height="13" fill="#38383c"/>
<rect x="503" y="164" width="12" height="13" fill="#5a5a5e"/>
<rect x="516" y="164" width="13" height="13" fill="#38383c"/>
<rect x="530" y="164" width="12" height="13" fill="#38383c"/>
<rect x="543" y="164" width="12" height="13" fill="#38383c"/>
<rect x="556" y="164" width="13" height="13" fill="#5a5a5e"/>
<rect x="570" y="164" width="12" height="13" fill="#38383c"/>
<rect x="583" y="164" width="12" height="13" fill="#5a5a5e"/>
<rect x="596" y="164" width="13" height="13" fill="#38383c"/>
<rect x="610" y="164" width="12" height="13" fill="#38383c"/>
<rect x="623" y="164" width="12" height="13" fill="#6c3f2a"/>
<rect x="636" y="164" width="13" height="13" fill="#7ca8ec"/>
<rect x="650" y="164" width="12" height="13" fill="#38383c"/>
<rect x="663" y="164" width="12" height="13" fill="#38383c"/>
<rect x="676" y="164" width="13" height="13" fill="#38383c"/>
<rect x="690" y="164" width="12" height="13" fill="#7ca8ec"/>
<rect x="703" y="164" width="12" height="13" fill="#38383c"/>
<rect x="716" y="164" width="13" height="13" fill="#5a5a5e"/>
<rect x="730" y="164" width="12" height="13" fill="#38383c"/>
<rect x="743" y="164" width="12" height="13" fill="#5a5a5e"/>
<rect x="756" y="164" width="13" height="13" fill="#7ca8ec"/>
<rect x="770" y="164" width="12" height="13" fill="#6a4ccc"/>
<rect x="783" y="164" width="12" height="13" fill="#38383c"/>
<rect x="796" y="164" width="13" height="13" fill="#38383c"/>
<rect x="0" y="178" width="8" height="12" fill="#2c2b2b"/>
<rect x="9" y="178" width="12" height="12" fill="#5a5a5e"/>
<rect x="22" y="178" width="13" height="12" fill="#38383c"/>
<rect x="36" y="178" width="12" height="12" fill="#38383c"/>
<rect x="49" y="178" width="12" height="12" fill="#38383c"/>
<rect x="62" y="178" width="13" height="12" fill="#38383c"/>
<rect x="76" y="178" width="12" height="12" fill="#7ca8ec"/>
<rect x="89" y="178" width="13" height="12" fill="#7ca8ec"/>
<rect x="103" y="178" width="12" height="12" fill="#5a5a5e"/>
<rect x="116" y="178" width="12" height="12" fill="#5a5a5e"/>
<rect x="129" y="178" width="13" height="12" fill="#38383c"/>
<rect x="143" y="178" width="12" height="12" fill="#38383c"/>
<rect x="156" y="178" width="12" height="12" fill="#38383c"/>
<rect x="169" y="178" width="13" height="12" fill="#5a5a5e"/>
<rect x="183" y="178" width="12" height="12" fill="#38383c"/>
<rect x="196" y="178" width="12" height="12" fill="#38383c"/>
<rect x="209" y="178" width="13" height="12" fill="#38383c"/>
<rect x="223" y="178" width="12" height="12" fill="#38383c"/>
<rect x="236" y="178" width="12" height="12" fill="#38383c"/>
<rect x="249" y="178" width="13" height="12" fill="#38383c"/>
<rect x="263" y="178" width="12" height="12" fill="#5a5a5e"/>
<rect x="276" y="178" width="12" height="12" fill="#5a5a5e"/>
<rect x="289" y="178" width="13" height="12" fill="#6a4ccc"/>
<rect x="303" y="178" width="12" height="12" fill="#5a5a5e"/>
<rect x="316" y="178" width="12" height="12" fill="#7ca8ec"/>
<rect x="329" y="178" width="13" height="12" fill="#38383c"/>
<rect x="343" y="178" width="12" height="12" fill="#38383c"/>
<rect x="356" y="178" width="12" height="12" fill="#38383c"/>
<rect x="369" y="178" width="13" height="12" fill="#38383c"/>
<rect x="383" y="178" width="12" height="12" fill="#38383c"/>
<rect x="396" y="178" width="12" height="12" fill="#38383c"/>
<rect x="409" y="178" width="13" height="12" fill="#38383c"/>
<rect x="423" y="178" width="12" height="12" fill="#38383c"/>
<rect x="436" y="178" width="12" height="12" fill="#5a5a5e"/>
<rect x="449" y="178" width="13" height="12" fill="#38383c"/>
<rect x="463" y="178" width="12" height="12" fill="#7ca8ec"/>
<rect x="476" y="178" width="13" height="12" fill="#38383c"/>
<rect x="490" y="178" width="12" height="12" fill="#38383c"/>
<rect x="503" y="178" width="12" height="12" fill="#38383c"/>
<rect x="516" y="178" width="13" height="12" fill="#38383c"/>
<rect x="530" y="178" width="12" height="12" fill="#38383c"/>
<rect x="543" y="178" width="12" height="12" fill="#5a5a5e"/>
<rect x="556" y="178" width="13" height="12" fill="#5a5a5e"/>
<rect x="570" y="178" width="12" height="12" fill="#38383c"/>
<rect x="583" y="178" width="12" height="12" fill="#38383c"/>
<rect x="596" y="178" width="13" height="12" fill="#38383c"/>
<rect x="610" y="178" width="12" height="12" fill="#38383c"/>
<rect x="623" y="178" width="12" height="12" fill="#5a5a5e"/>
<rect x="636" y="178" width="13" height="12" fill="#7ca8ec"/>
<rect x="650" y="178" width="12" height="12" fill="#38383c"/>
<rect x="663" y="178" width="12" height="12" fill="#5a5a5e"/>
<rect x="676" y="178" width="13" height="12" fill="#38383c"/>
<rect x="690" y="178" width="12" height="12" fill="#7ca8ec"/>
<rect x="703" y="178" width="12" height="12" fill="#5a5a5e"/>
<rect x="716" y="178" width="13" height="12" fill="#38383c"/>
<rect x="730" y="178" width="12" height="12" fill="#38383c"/>
<rect x="743" y="178" width="12" height="12" fill="#38383c"/>
<rect x="756" y="178" width="13" height="12" fill="#5a5a5e"/>
<rect x="770" y="178" width="12" height="12" fill="#38383c"/>
<rect x="783" y="178" width="12" height="12" fill="#38383c"/>
<rect x="796" y="178" width="13" height="12" fill="#5a5a5e"/>
<rect x="0" y="191" width="8" height="13" fill="#2c2b2b"/>
<rect x="9" y="191" width="12" height="13" fill="#38383c"/>
<rect x="22" y="191" width="13" height="13" fill="#38383c"/>
<rect x="36" y="191" width="12" height="13" fill="#38383c"/>
<rect x="49" y="191" width="12" height="13" fill="#38383c"/>
<rect x="62" y="191" width="13" height="13" fill="#38383c"/>
<rect x="76" y="191" width="12" height="13" fill="#7ca8ec"/>
<rect x="89" y="191" width="13" height="13" fill="#7ca8ec"/>
<rect x="103" y="191" width="12" height="13" fill="#38383c"/>
<rect x="116" y="191" width="12" height="13" fill="#6a4ccc"/>
<rect x="129" y="191" width="13" height="13" fill="#38383c"/>
<rect x="143" y="191" width="12" height="13" fill="#38383c"/>
<rect x="156" y="191" width="12" height="13" fill="#38383c"/>
<rect x="169" y="191" width="13" height="13" fill="#5a5a5e"/>
<rect x="183" y="191" width="12" height="13" fill="#38383c"/>
<rect x="196" y="191" width="12" height="13" fill="#38383c"/>
<rect x="209" y="191" width="13" height="13" fill="#6a4ccc"/>
<rect x="223" y="191" width="12" height="13" fill="#38383c"/>
<rect x="236" y="191" width="12" height="13" fill="#38383c"/>
<rect x="249" y="191" width="13" height="13" fill="#38383c"/>
<rect x="263" y="191" width="12" height="13" fill="#38383c"/>
<rect x="276" y="191" width="12" height="13" fill="#38383c"/>
<rect x="289" y="191" width="13" height="13" fill="#38383c"/>
<rect x="303" y="191" width="12" height="13" fill="#38383c"/>
<rect x="316" y="191" width="12" height="13" fill="#7ca8ec"/>
<rect x="329" y="191" width="13" height="13" fill="#38383c"/>
<rect x="343" y="191" width="12" height="13" fill="#38383c"/>
<rect x="356" y="191" width="12" height="13" fill="#38383c"/>
<rect x="369" y="191" width="13" height="13" fill="#38383c"/>
<rect x="383" y="191" width="12" height="13" fill="#38383c"/>
<rect x="396" y="191" width="12" height="13" fill="#38383c"/>
<rect x="409" y="191" width="13" height="13" fill="#38383c"/>
<rect x="423" y="191" width="12" height="13" fill="#38383c"/>
<rect x="436" y="191" width="12" height="13" fill="#38383c"/>
<rect x="449" y="191" width="13" height="13" fill="#5a5a5e"/>
<rect x="463" y="191" width="12" height="13" fill="#5a5a5e"/>
<rect x="476" y="191" width="13" height="13" fill="#38383c"/>
<rect x="490" y="191" width="12" height="13" fill="#38383c"/>
<rect x="503" y="191" width="12" height="13" fill="#38383c"/>
<rect x="516" y="191" width="13" height="13" fill="#38383c"/>
<rect x="530" y="191" width="12" height="13" fill="#38383c"/>
<rect x="543" y="191" width="12" height="13" fill="#5a5a5e"/>
<rect x="556" y="191" width="13" height="13" fill="#38383c"/>
<rect x="570" y="191" width="12" height="13" fill="#38383c"/>
<rect x="583" y="191" width="12" height="13" fill="#38383c"/>
<rect x="596" y="191" width="13" height="13" fill="#38383c"/>
<rect x="610" y="191" width="12" height="13" fill="#38383c"/>
<rect x="623" y="191" width="12" height="13" fill="#38383c"/>
<rect x="636" y="191" width="13" height="13" fill="#7ca8ec"/>
<rect x="650" y="191" width="12" height="13" fill="#38383c"/>
<rect x="663" y="191" width="12" height="13" fill="#38383c"/>
<rect x="676" y="191" width="13" height="13" fill="#38383c"/>
<rect x="690" y="191" width="12" height="13" fill="#7ca8ec"/>
<rect x="703" y="191" width="12" height="13" fill="#6a4ccc"/>
<rect x="716" y="191" width="13" height="13" fill="#38383c"/>
<rect x="730" y="191" width="12" height="13" fill="#38383c"/>
<rect x="743" y="191" width="12" height="13" fill="#38383c"/>
<rect x="756" y="191" width="13" height="13" fill="#38383c"/>
<rect x="770" y="191" width="12" height="13" fill="#38383c"/>
<rect x="783" y="191" width="12" height="13" fill="#38383c"/>
<rect x="796" y="191" width="13" height="13" fill="#5a5a5e"/>
<rect x="0" y="205" width="8" height="13" fill="#2c2b2b"/>
<rect x="9" y="205" width="12" height="13" fill="#38383c"/>
<rect x="22" y="205" width="13" height="13" fill="#38383c"/>
<rect x="36" y="205" width="12" height="13" fill="#38383c"/>
<rect x="49" y="205" width="12" height="13" fill="#38383c"/>
<rect x="62" y="205" width="13" height="13" fill="#38383c"/>
<rect x="76" y="205" width="12" height="13" fill="#7ca8ec"/>
<rect x="89" y="205" width="13" height="13" fill="#7ca8ec"/>
<rect x="103" y="205" width="12" height="13" fill="#38383c"/>
<rect x="116" y="205" width="12" height="13" fill="#38383c"/>
<rect x="129" y="205" width="13" height="13" fill="#38383c"/>
<rect x="143" y="205" width="12" height="13" fill="#5a5a5e"/>
<rect x="156" y="205" width="12" height="13" fill="#38383c"/>
<rect x="169" y="205" width="13" height="13" fill="#6a4ccc"/>
<rect x="183" y="205" width="12" height="13" fill="#38383c"/>
<rect x="196" y="205" width="12" height="13" fill="#38383c"/>
<rect x="209" y="205" width="13" height="13" fill="#5a5a5e"/>
<rect x="223" y="205" width="12" height="13" fill="#38383c"/>
<rect x="236" y="205" width="12" height="13" fill="#38383c"/>
<rect x="249" y="205" width="13" height="13" fill="#38383c"/>
<rect x="263" y="205" width="12" height="13" fill="#5a5a5e"/>
<rect x="276" y="205" width="12" height="13" fill="#38383c"/>
<rect x="289" y="205" width="13" height="13" fill="#38383c"/>
<rect x="303" y="205" width="12" height="13" fill="#38383c"/>
<rect x="316" y="205" width="12" height="13" fill="#6a4ccc"/>
<rect x="329" y="205" width="13" height="13" fill="#38383c"/>
<rect x="343" y="205" width="12" height="13" fill="#38383c"/>
<rect x="356" y="205" width="12" height="13" fill="#38383c"/>
<rect x="369" y="205" width="13" height="13" fill="#38383c"/>
<rect x="383" y="205" width="12" height="13" fill="#38383c"/>
<rect x="396" y="205" width="12" height="13" fill="#5a5a5e"/>
<rect x="409" y="205" width="13" height="13" fill="#38383c"/>
<rect x="423" y="205" width="12" height="13" fill="#38383c"/>
<rect x="436" y="205" width="12" height="13" fill="#5a5a5e"/>
<rect x="449" y="205" width="13" height="13" fill="#38383c"/>
<rect x="463" y="205" width="12" height="13" fill="#38383c"/>
<rect x="476" y="205" width="13" height="13" fill="#38383c"/>
<rect x="490" y="205" width="12" height="13" fill="#38383c"/>
<rect x="503" y="205" width="12" height="13" fill="#38383c"/>
<rect x="516" y="205" width="13" height="13" fill="#38383c"/>
<rect x="530" y="205" width="12" height="13" fill="#38383c"/>
<rect x="543" y="205" width="12" height="13" fill="#38383c"/>
<rect x="556" y="205" width="13" height="13" fill="#38383c"/>
<rect x="570" y="205" width="12" height="13" fill="#5a5a5e"/>
<rect x="583" y="205" width="12" height="13" fill="#ee4438"/>
<rect x="596" y="205" width="13" height="13" fill="#38383c"/>
<rect x="610" y="205" width="12" height="13" fill="#38383c"/>
<rect x="623" y="205" width="12" height="13" fill="#38383c"/>
<rect x="636" y="205" width="13" height="13" fill="#5a5a5e"/>
<rect x="650" y="205" width="12" height="13" fill="#5a5a5e"/>
<rect x="663" y="205" width="12" height="13" fill="#38383c"/>
<rect x="676" y="205" width="13" height="13" fill="#5a5a5e"/>
<rect x="690" y="205" width="12" height="13" fill="#7ca8ec"/>
<rect x="703" y="205" width="12" height="13" fill="#38383c"/>
<rect x="716" y="205" width="13" height="13" fill="#38383c"/>
<rect x="730" y="205" width="12" height="13" fill="#38383c"/>
<rect x="743" y="205" width="12" height="13" fill="#5a5a5e"/>
<rect x="756" y="205" width="13" height="13" fill="#38383c"/>
<rect x="770" y="205" width="12" height="13" fill="#5a5a5e"/>
<rect x="783" y="205" width="12" height="13" fill="#38383c"/>
<rect x="796" y="205" width="13" height="13" fill="#38383c"/>
<rect x="0" y="219" width="8" height="13" fill="#2c2b2b"/>
<rect x="9" y="219" width="12" height="13" fill="#38383c"/>
<rect x="22" y="219" width="13" height="13" fill="#38383c"/>
<rect x="36" y="219" width="12" height="13" fill="#5a5a5e"/>
<rect x="49" y="219" width="12" height="13" fill="#5a5a5e"/>
<rect x="62" y="219" width="13" height="13" fill="#5a5a5e"/>
<rect x="76" y="219" width="12" height="13" fill="#7ca8ec"/>
<rect x="89" y="219" width="13" height="13" fill="#7ca8ec"/>
<rect x="103" y="219" width="12" height="13" fill="#38383c"/>
<rect x="116" y="219" width="12" height="13" fill="#38383c"/>
<rect x="129" y="219" width="13" height="13" fill="#5a5a5e"/>
<rect x="143" y="219" width="12" height="13" fill="#6a4ccc"/>
<rect x="156" y="219" width="12" height="13" fill="#5a5a5e"/>
<rect x="169" y="219" width="13" height="13" fill="#5a5a5e"/>
<rect x="183" y="219" width="12" height="13" fill="#38383c"/>
<rect x="196" y="219" width="12" height="13" fill="#5a5a5e"/>
<rect x="209" y="219" width="13" height="13" fill="#38383c"/>
<rect x="223" y="219" width="12" height="13" fill="#38383c"/>
<rect x="236" y="219" width="12" height="13" fill="#38383c"/>
<rect x="249" y="219" width="13" height="13" fill="#38383c"/>
<rect x="263" y="219" width="12" height="13" fill="#5a5a5e"/>
<rect x="276" y="219" width="12" height="13" fill="#38383c"/>
<rect x="289" y="219" width="13" height="13" fill="#5a5a5e"/>
<rect x="303" y="219" width="12" height="13" fill="#5a5a5e"/>
<rect x="316" y="219" width="12" height="13" fill="#38383c"/>
<rect x="329" y="219" width="13" height="13" fill="#38383c"/>
<rect x="343" y="219" width="12" height="13" fill="#38383c"/>
<rect x="356" y="219" width="12" height="13" fill="#38383c"/>
<rect x="369" y="219" width="13" height="13" fill="#38383c"/>
<rect x="383" y="219" width="12" height="13" fill="#38383c"/>
<rect x="396" y="219" width="12" height="13" fill="#38383c"/>
<rect x="409" y="219" width="13" height="13" fill="#5a5a5e"/>
<rect x="423" y="219" width="12" height="13" fill="#38383c"/>
<rect x="436" y="219" width="12" height="13" fill="#38383c"/>
<rect x="449" y="219" width="13" height="13" fill="#38383c"/>
<rect x="463" y="219" width="12" height="13" fill="#38383c"/>
<rect x="476" y="219" width="13" height="13" fill="#38383c"/>
<rect x="490" y="219" width="12" height="13" fill="#38383c"/>
<rect x="503" y="219" width="12" height="13" fill="#38383c"/>
<rect x="516" y="219" width="13" height="13" fill="#38383c"/>
<rect x="530" y="219" width="12" height="13" fill="#38383c"/>
<rect x="543" y="219" width="12" height="13" fill="#38383c"/>
<rect x="556" y="219" width="13" height="13" fill="#38383c"/>
<rect x="570" y="219" width="12" height="13" fill="#38383c"/>
<rect x="583" y="219" width="12" height="13" fill="#38383c"/>
<rect x="596" y="219" width="13" height="13" fill="#38383c"/>
<rect x="610" y="219" width="12" height="13" fill="#38383c"/>
<rect x="623" y="219" width="12" height="13" fill="#5a5a5e"/>
<rect x="636" y="219" width="13" height="13" fill="#38383c"/>
<rect x="650" y="219" width="12" height="13" fill="#38383c"/>
<rect x="663" y="219" width="12" height="13" fill="#38383c"/>
<rect x="676" y="219" width="13" height="13" fill="#38383c"/>
<rect x="690" y="219" width="12" height="13" fill="#7ca8ec"/>
<rect x="703" y="219" width="12" height="13" fill="#38383c"/>
<rect x="716" y="219" width="13" height="13" fill="#38383c"/>
<rect x="730" y="219" width="12" height="13" fill="#38383c"/>
<rect x="743" y="219" width="12" height="13" fill="#38383c"/>
<rect x="756" y="219" width="13" height="13" fill="#38383c"/>
<rect x="770" y="219" width="12" height="13" fill="#38383c"/>
<rect x="783" y="219" width="12" height="13" fill="#38383c"/>
<rect x="796" y="219" width="13" height="13" fill="#38383c"/>
<rect x="0" y="233" width="8" height="12" fill="#2c2b2b"/>
<rect x="9" y="233" width="12" height="12" fill="#38383c"/>
<rect x="22" y="233" width="13" height="12" fill="#5a5a5e"/>
<rect x="36" y="233" width="12" height="12" fill="#38383c"/>
<rect x="49" y="233" width="12" height="12" fill="#38383c"/>
<rect x="62" y="233" width="13" height="12" fill="#5a5a5e"/>
<rect x="76" y="233" width="12" height="12" fill="#5a5a5e"/>
<rect x="89" y="233" width="13" height="12" fill="#7ca8ec"/>
<rect x="103" y="233" width="12" height="12" fill="#5a5a5e"/>
<rect x="116" y="233" width="12" height="12" fill="#38383c"/>
<rect x="129" y="233" width="13" height="12" fill="#38383c"/>
<rect x="143" y="233" width="12" height="12" fill="#5a5a5e"/>
<rect x="156" y="233" width="12" height="12" fill="#38383c"/>
<rect x="169" y="233" width="13" height="12" fill="#38383c"/>
<rect x="183" y="233" width="12" height="12" fill="#38383c"/>
<rect x="196" y="233" width="12" height="12" fill="#38383c"/>
<rect x="209" y="233" width="13" height="12" fill="#38383c"/>
<rect x="223" y="233" width="12" height="12" fill="#38383c"/>
<rect x="236" y="233" width="12" height="12" fill="#38383c"/>
<rect x="249" y="233" width="13" height="12" fill="#38383c"/>
<rect x="263" y="233" width="12" height="12" fill="#38383c"/>
<rect x="276" y="233" width="12" height="12" fill="#38383c"/>
<rect x="289" y="233" width="13" height="12" fill="#38383c"/>
<rect x="303" y="233" width="12" height="12" fill="#38383c"/>
<rect x="316" y="233" width="12" height="12" fill="#38383c"/>
<rect x="329" y="233" width="13" height="12" fill="#38383c"/>
<rect x="343" y="233" width="12" height="12" fill="#38383c"/>
<rect x="356" y="233" width="12" height="12" fill="#38383c"/>
<rect x="369" y="233" width="13" height="12" fill="#38383c"/>
<rect x="383" y="233" width="12" height="12" fill="#38383c"/>
<rect x="396" y="233" width="12" height="12" fill="#38383c"/>
<rect x="409" y="233" width="13" height="12" fill="#38383c"/>
<rect x="423" y="233" width="12" height="12" fill="#38383c"/>
<rect x="436" y="233" width="12" height="12" fill="#5a5a5e"/>
<rect x="449" y="233" width="13" height="12" fill="#38383c"/>
<rect x="463" y="233" width="12" height="12" fill="#38383c"/>
<rect x="476" y="233" width="13" height="12" fill="#38383c"/>
<rect x="490" y="233" width="12" height="12" fill="#38383c"/>
<rect x="503" y="233" width="12" height="12" fill="#5a5a5e"/>
<rect x="516" y="233" width="13" height="12" fill="#38383c"/>
<rect x="530" y="233" width="12" height="12" fill="#38383c"/>
<rect x="543" y="233" width="12" height="12" fill="#38383c"/>
<rect x="556" y="233" width="13" height="12" fill="#5a5a5e"/>
<rect x="570" y="233" width="12" height="12" fill="#38383c"/>
<rect x="583" y="233" width="12" height="12" fill="#38383c"/>
<rect x="596" y="233" width="13" height="12" fill="#38383c"/>
<rect x="610" y="233" width="12" height="12" fill="#38383c"/>
<rect x="623" y="233" width="12" height="12" fill="#5a5a5e"/>
<rect x="636" y="233" width="13" height="12" fill="#5a5a5e"/>
<rect x="650" y="233" width="12" height="12" fill="#38383c"/>
<rect x="663" y="233" width="12" height="12" fill="#38383c"/>
<rect x="676" y="233" width="13" height="12" fill="#38383c"/>
<rect x="690" y="233" width="12" height="12" fill="#5a5a5e"/>
<rect x="703" y="233" width="12" height="12" fill="#38383c"/>
<rect x="716" y="233" width="13" height="12" fill="#38383c"/>
<rect x="730" y="233" width="12" height="12" fill="#38383c"/>
<rect x="743" y="233" width="12" height="12" fill="#5a5a5e"/>
<rect x="756" y="233" width="13" height="12" fill="#5a5a5e"/>
<rect x="770" y="233" width="12" height="12" fill="#38383c"/>
<rect x="783" y="233" width="12" height="12" fill="#38383c"/>
<rect x="796" y="233" width="13" height="12" fill="#38383c"/>
<rect x="0" y="246" width="8" height="13" fill="#2c2b2b"/>
<rect x="9" y="246" width="12" height="13" fill="#38383c"/>
<rect x="22" y="246" width="13" height="13" fill="#38383c"/>
<rect x="36" y="246" width="12" height="13" fill="#38383c"/>
<rect x="49" y="246" width="12" height="13" fill="#38383c"/>
<rect x="62" y="246" width="13" height="13" fill="#38383c"/>
<rect x="76" y="246" width="12" height="13" fill="#38383c"/>
<rect x="89" y="246" width="13" height="13" fill="#5a5a5e"/>
<rect x="103" y="246" width="12" height="13" fill="#38383c"/>
<rect x="116" y="246" width="12" height="13" fill="#6a4ccc"/>
<rect x="129" y="246" width="13" height="13" fill="#38383c"/>
<rect x="143" y="246" width="12" height="13" fill="#38383c"/>
<rect x="156" y="246" width="12" height="13" fill="#38383c"/>
<rect x="169" y="246" width="13" height="13" fill="#5a5a5e"/>
<rect x="183" y="246" width="12" height="13" fill="#38383c"/>
<rect x="196" y="246" width="12" height="13" fill="#38383c"/>
<rect x="209" y="246" width="13" height="13" fill="#38383c"/>
<rect x="223" y="246" width="12" height="13" fill="#38383c"/>
<rect x="236" y="246" width="12" height="13" fill="#5a5a5e"/>
<rect x="249" y="246" width="13" height="13" fill="#38383c"/>
<rect x="263" y="246" width="12" height="13" fill="#38383c"/>
<rect x="276" y="246" width="12" height="13" fill="#38383c"/>
<rect x="289" y="246" width="13" height="13" fill="#38383c"/>
<rect x="303" y="246" width="12" height="13" fill="#5a5a5e"/>
<rect x="316" y="246" width="12" height="13" fill="#38383c"/>
<rect x="329" y="246" width="13" height="13" fill="#38383c"/>
<rect x="343" y="246" width="12" height="13" fill="#38383c"/>
<rect x="356" y="246" width="12" height="13" fill="#6a4ccc"/>
<rect x="369" y="246" width="13" height="13" fill="#38383c"/>
<rect x="383" y="246" width="12" height="13" fill="#38383c"/>
<rect x="396" y="246" width="12" height="13" fill="#38383c"/>
<rect x="409" y="246" width="13" height="13" fill="#5a5a5e"/>
<rect x="423" y="246" width="12" height="13" fill="#38383c"/>
<rect x="436" y="246" width="12" height="13" fill="#38383c"/>
<rect x="449" y="246" width="13" height="13" fill="#38383c"/>
<rect x="463" y="246" width="12" height="13" fill="#38383c"/>
<rect x="476" y="246" width="13" height="13" fill="#38383c"/>
<rect x="490" y="246" width="12" height="13" fill="#5a5a5e"/>
<rect x="503" y="246" width="12" height="13" fill="#38383c"/>
<rect x="516" y="246" width="13" height="13" fill="#38383c"/>
<rect x="530" y="246" width="12" height="13" fill="#38383c"/>
<rect x="543" y="246" width="12" height="13" fill="#5a5a5e"/>
<rect x="556" y="246" width="13" height="13" fill="#38383c"/>
<rect x="570" y="246" width="12" height="13" fill="#38383c"/>
<rect x="583" y="246" width="12" height="13" fill="#5a5a5e"/>
<rect x="596" y="246" width="13" height="13" fill="#5a5a5e"/>
<rect x="610" y="246" width="12" height="13" fill="#5a5a5e"/>
<rect x="623" y="246" width="12" height="13" fill="#38383c"/>
<rect x="636" y="246" width="13" height="13" fill="#38383c"/>
<rect x="650" y="246" width="12" height="13" fill="#38383c"/>
<rect x="663" y="246" width="12" height="13" fill="#38383c"/>
<rect x="676" y="246" width="13" height="13" fill="#38383c"/>
<rect x="690" y="246" width="12" height="13" fill="#38383c"/>
<rect x="703" y="246" width="12" height="13" fill="#38383c"/>
<rect x="716" y="246" width="13" height="13" fill="#38383c"/>
<rect x="730" y="246" width="12" height="13" fill="#38383c"/>
<rect x="743" y="246" width="12" height="13" fill="#5a5a5e"/>
<rect x="756" y="246" width="13" height="13" fill="#38383c"/>
<rect x="770" y="246" width="12" height="13" fill="#38383c"/>
<rect x="783" y="246" width="12" height="13" fill="#38383c"/>
<rect x="796" y="246" width="13" height="13" fill="#38383c"/>
<rect x="0" y="260" width="8" height="13" fill="#2c2b2b"/>
<rect x="9" y="260" width="12" height="13" fill="#ee4438"/>
<rect x="22" y="260" width="13" height="13" fill="#5a5a5e"/>
<rect x="36" y="260" width="12" height="13" fill="#5a5a5e"/>
<rect x="49" y="260" width="12" height="13" fill="#38383c"/>
<rect x="62" y="260" width="13" height="13" fill="#38383c"/>
<rect x="76" y="260" width="12" height="13" fill="#38383c"/>
<rect x="89" y="260" width="13" height="13" fill="#5a5a5e"/>
<rect x="103" y="260" width="12" height="13" fill="#38383c"/>
<rect x="116" y="260" width="12" height="13" fill="#38383c"/>
<rect x="129" y="260" width="13" height="13" fill="#6a4ccc"/>
<rect x="143" y="260" width="12" height="13" fill="#38383c"/>
<rect x="156" y="260" width="12" height="13" fill="#38383c"/>
<rect x="169" y="260" width="13" height="13" fill="#38383c"/>
<rect x="183" y="260" width="12" height="13" fill="#38383c"/>
<rect x="196" y="260" width="12" height="13" fill="#38383c"/>
<rect x="209" y="260" width="13" height="13" fill="#38383c"/>
<rect x="223" y="260" width="12" height="13" fill="#38383c"/>
<rect x="236" y="260" width="12" height="13" fill="#38383c"/>
<rect x="249" y="260" width="13" height="13" fill="#5a5a5e"/>
<rect x="263" y="260" width="12" height="13" fill="#38383c"/>
<rect x="276" y="260" width="12" height="13" fill="#38383c"/>
<rect x="289" y="260" width="13" height="13" fill="#38383c"/>
<rect x="303" y="260" width="12" height="13" fill="#38383c"/>
<rect x="316" y="260" width="12" height="13" fill="#38383c"/>
<rect x="329" y="260" width="13" height="13" fill="#38383c"/>
<rect x="343" y="260" width="12" height="13" fill="#38383c"/>
<rect x="356" y="260" width="12" height="13" fill="#38383c"/>
<rect x="369" y="260" width="13" height="13" fill="#38383c"/>
<rect x="383" y="260" width="12" height="13" fill="#5a5a5e"/>
<rect x="396" y="260" width="12" height="13" fill="#38383c"/>
<rect x="409" y="260" width="13" height="13" fill="#38383c"/>
<rect x="423" y="260" width="12" height="13" fill="#38383c"/>
<rect x="436" y="260" width="12" height="13" fill="#6a4ccc"/>
<rect x="449" y="260" width="13" height="13" fill="#38383c"/>
<rect x="463" y="260" width="12" height="13" fill="#38383c"/>
<rect x="476" y="260" width="13" height="13" fill="#38383c"/>
<rect x="490" y="260" width="12" height="13" fill="#38383c"/>
<rect x="503" y="260" width="12" height="13" fill="#5a5a5e"/>
<rect x="516" y="260" width="13" height="13" fill="#38383c"/>
<rect x="530" y="260" width="12" height="13" fill="#5a5a5e"/>
<rect x="543" y="260" width="12" height="13" fill="#38383c"/>
<rect x="556" y="260" width="13" height="13" fill="#38383c"/>
<rect x="570" y="260" width="12" height="13" fill="#38383c"/>
<rect x="583" y="260" width="12" height="13" fill="#38383c"/>
<rect x="596" y="260" width="13" height="13" fill="#38383c"/>
<rect x="610" y="260" width="12" height="13" fill="#5a5a5e"/>
<rect x="623" y="260" width="12" height="13" fill="#38383c"/>
<rect x="636" y="260" width="13" height="13" fill="#5a5a5e"/>
<rect x="650" y="260" width="12" height="13" fill="#38383c"/>
<rect x="663" y="260" width="12" height="13" fill="#38383c"/>
<rect x="676" y="260" width="13" height="13" fill="#5a5a5e"/>
<rect x="690" y="260" width="12" height="13" fill="#38383c"/>
<rect x="703" y="260" width="12" height="13" fill="#38383c"/>
<rect x="716" y="260" width="13" height="13" fill="#38383c"/>
<rect x="730" y="260" width="12" height="13" fill="#38383c"/>
<rect x="743" y="260" width="12" height="13" fill="#38383c"/>
<rect x="756" y="260" width="13" height="13" fill="#38383c"/>
<rect x="770" y="260" width="12" height="13" fill="#38383c"/>
<rect x="783" y="260" width="12" height="13" fill="#5a5a5e"/>
<rect x="796" y="260" width="13" height="13" fill="#38383c"/>
<rect x="0" y="274" width="8" height="13" fill="#2c2b2b"/>
<rect x="9" y="274" width="12" height="13" fill="#38383c"/>
<rect x="22" y="274" width="13" height="13" fill="#38383c"/>
<rect x="36" y="274" width="12" height="13" fill="#38383c"/>
<rect x="49" y="274" width="12" height="13" fill="#38383c"/>
<rect x="62" y="274" width="13" height="13" fill="#38383c"/>
<rect x="76" y="274" width="12" height="13" fill="#38383c"/>
<rect x="89" y="274" width="13" height="13" fill="#38383c"/>
<rect x="103" y="274" width="12" height="13" fill="#38383c"/>
<rect x="116" y="274" width="12" height="13" fill="#5a5a5e"/>
<rect x="129" y="274" width="13" height="13" fill="#38383c"/>
<rect x="143" y="274" width="12" height="13" fill="#5a5a5e"/>
<rect x="156" y="274" width="12" height="13" fill="#38383c"/>
<rect x="169" y="274" width="13" height="13" fill="#38383c"/>
<rect x="183" y="274" width="12" height="13" fill="#38383c"/>
<rect x="196" y="274" width="12" height="13" fill="#38383c"/>
<rect x="209" y="274" width="13" height="13" fill="#38383c"/>
<rect x="223" y="274" width="12" height="13" fill="#38383c"/>
<rect x="236" y="274" width="12" height="13" fill="#38383c"/>
<rect x="249" y="274" width="13" height="13" fill="#38383c"/>
<rect x="263" y="274" width="12" height="13" fill="#38383c"/>
<rect x="276" y="274" width="12" height="13" fill="#5a5a5e"/>
<rect x="289" y="274" width="13" height="13" fill="#38383c"/>
<rect x="303" y="274" width="12" height="13" fill="#6a4ccc"/>
<rect x="316" y="274" width="12" height="13" fill="#38383c"/>
<rect x="329" y="274" width="13" height="13" fill="#5a5a5e"/>
<rect x="343" y="274" width="12" height="13" fill="#5a5a5e"/>
<rect x="356" y="274" width="12" height="13" fill="#38383c"/>
<rect x="369" y="274" width="13" height="13" fill="#38383c"/>
<rect x="383" y="274" width="12" height="13" fill="#38383c"/>
<rect x="396" y="274" width="12" height="13" fill="#38383c"/>
<rect x="409" y="274" width="13" height="13" fill="#38383c"/>
<rect x="423" y="274" width="12" height="13" fill="#38383c"/>
<rect x="436" y="274" width="12" height="13" fill="#38383c"/>
<rect x="449" y="274" width="13" height="13" fill="#38383c"/>
<rect x="463" y="274" width="12" height="13" fill="#38383c"/>
<rect x="476" y="274" width="13" height="13" fill="#38383c"/>
<rect x="490" y="274" width="12" height="13" fill="#38383c"/>
<rect x="503" y="274" width="12" height="13" fill="#38383c"/>
<rect x="516" y="274" width="13" height="13" fill="#38383c"/>
<rect x="530" y="274" width="12" height="13" fill="#38383c"/>
<rect x="543" y="274" width="12" height="13" fill="#38383c"/>
<rect x="556" y="274" width="13" height="13" fill="#38383c"/>
<rect x="570" y="274" width="12" height="13" fill="#38383c"/>
<rect x="583" y="274" width="12" height="13" fill="#38383c"/>
<rect x="596" y="274" width="13" height="13" fill="#38383c"/>
<rect x="610" y="274" width="12" height="13" fill="#5a5a5e"/>
<rect x="623" y="274" width="12" height="13" fill="#38383c"/>
<rect x="636" y="274" width="13" height="13" fill="#38383c"/>
<rect x="650" y="274" width="12" height="13" fill="#38383c"/>
<rect x="663" y="274" width="12" height="13" fill="#5a5a5e"/>
<rect x="676" y="274" width="13" height="13" fill="#5a5a5e"/>
<rect x="690" y="274" width="12" height="13" fill="#38383c"/>
<rect x="703" y="274" width="12" height="13" fill="#c41ed6"/>
<rect x="716" y="274" width="13" height="13" fill="#5a5a5e"/>
<rect x="730" y="274" width="12" height="13" fill="#38383c"/>
<rect x="743" y="274" width="12" height="13" fill="#38383c"/>
<rect x="756" y="274" width="13" height="13" fill="#38383c"/>
<rect x="770" y="274" width="12" height="13" fill="#38383c"/>
<rect x="783" y="274" width="12" height="13" fill="#38383c"/>
<rect x="796" y="274" width="13" height="13" fill="#38383c"/>
<rect x="0" y="288" width="8" height="12" fill="#2c2b2b"/>
<rect x="9" y="288" width="12" height="12" fill="#38383c"/>
<rect x="22" y="288" width="13" height="12" fill="#38383c"/>
<rect x="36" y="288" width="12" height="12" fill="#5a5a5e"/>
<rect x="49" y="288" width="12" height="12" fill="#38383c"/>
<rect x="62" y="288" width="13" height="12" fill="#38383c"/>
<rect x="76" y="288" width="12" height="12" fill="#5a5a5e"/>
<rect x="89" y="288" width="13" height="12" fill="#38383c"/>
<rect x="103" y="288" width="12" height="12" fill="#38383c"/>
<rect x="116" y="288" width="12" height="12" fill="#38383c"/>
<rect x="129" y="288" width="13" height="12" fill="#38383c"/>
<rect x="143" y="288" width="12" height="12" fill="#5a5a5e"/>
<rect x="156" y="288" width="12" height="12" fill="#38383c"/>
<rect x="169" y="288" width="13" height="12" fill="#38383c"/>
<rect x="183" y="288" width="12" height="12" fill="#38383c"/>
<rect x="196" y="288" width="12" height="12" fill="#38383c"/>
<rect x="209" y="288" width="13" height="12" fill="#38383c"/>
<rect x="223" y="288" width="12" height="12" fill="#38383c"/>
<rect x="236" y="288" width="12" height="12" fill="#38383c"/>
<rect x="249" y="288" width="13" height="12" fill="#38383c"/>
<rect x="263" y="288" width="12" height="12" fill="#38383c"/>
<rect x="276" y="288" width="12" height="12" fill="#38383c"/>
<rect x="289" y="288" width="13" height="12" fill="#38383c"/>
<rect x="303" y="288" width="12" height="12" fill="#38383c"/>
<rect x="316" y="288" width="12" height="12" fill="#38383c"/>
<rect x="329" y="288" width="13" height="12" fill="#5a5a5e"/>
<rect x="343" y="288" width="12" height="12" fill="#5a5a5e"/>
<rect x="356" y="288" width="12" height="12" fill="#38383c"/>
<rect x="369" y="288" width="13" height="12" fill="#38383c"/>
<rect x="383" y="288" width="12" height="12" fill="#38383c"/>
<rect x="396" y="288" width="12" height="12" fill="#38383c"/>
<rect x="409" y="288" width="13" height="12" fill="#38383c"/>
<rect x="423" y="288" width="12" height="12" fill="#38383c"/>
<rect x="436" y="288" width="12" height="12" fill="#38383c"/>
<rect x="449" y="288" width="13" height="12" fill="#5a5a5e"/>
<rect x="463" y="288" width="12" height="12" fill="#38383c"/>
<rect x="476" y="288" width="13" height="12" fill="#5a5a5e"/>
<rect x="490" y="288" width="12" height="12" fill="#38383c"/>
<rect x="503" y="288" width="12" height="12" fill="#38383c"/>
<rect x="516" y="288" width="13" height="12" fill="#38383c"/>
<rect x="530" y="288" width="12" height="12" fill="#6a4ccc"/>
<rect x="543" y="288" width="12" height="12" fill="#38383c"/>
<rect x="556" y="288" width="13" height="12" fill="#38383c"/>
<rect x="570" y="288" width="12" height="12" fill="#38383c"/>
<rect x="583" y="288" width="12" height="12" fill="#5a5a5e"/>
<rect x="596" y="288" width="13" height="12" fill="#38383c"/>
<rect x="610" y="288" width="12" height="12" fill="#38383c"/>
<rect x="623" y="288" width="12" height="12" fill="#38383c"/>
<rect x="636" y="288" width="13" height="12" fill="#38383c"/>
<rect x="650" y="288" width="12" height="12" fill="#5a5a5e"/>
<rect x="663" y="288" width="12" height="12" fill="#38383c"/>
<rect x="676" y="288" width="13" height="12" fill="#38383c"/>
<rect x="690" y="288" width="12" height="12" fill="#38383c"/>
<rect x="703" y="288" width="12" height="12" fill="#38383c"/>
<rect x="716" y="288" width="13" height="12" fill="#38383c"/>
<rect x="730" y="288" width="12" height="12" fill="#38383c"/>
<rect x="743" y="288" width="12" height="12" fill="#38383c"/>
<rect x="756" y="288" width="13" height="12" fill="#38383c"/>
<rect x="770" y="288" width="12" height="12" fill="#38383c"/>
<rect x="783" y="288" width="12" height="12" fill="#38383c"/>
<rect x="796" y="288" width="13" height="12" fill="#38383c"/>
<rect x="0" y="301" width="8" height="13" fill="#2c2b2b"/>
<rect x="9" y="301" width="12" height="13" fill="#38383c"/>
<rect x="22" y="301" width="13" height="13" fill="#38383c"/>
<rect x="36" y="301" width="12" height="13" fill="#38383c"/>
<rect x="49" y="301" width="12" height="13" fill="#38383c"/>
<rect x="62" y="301" width="13" height="13" fill="#6a4ccc"/>
<rect x="76" y="301" width="12" height="13" fill="#5a5a5e"/>
<rect x="89" y="301" width="13" height="13" fill="#38383c"/>
<rect x="103" y="301" width="12" height="13" fill="#5a5a5e"/>
<rect x="116" y="301" width="12" height="13" fill="#38383c"/>
<rect x="129" y="301" width="13" height="13" fill="#5a5a5e"/>
<rect x="143" y="301" width="12" height="13" fill="#38383c"/>
<rect x="156" y="301" width="12" height="13" fill="#38383c"/>
<rect x="169" y="301" width="13" height="13" fill="#38383c"/>
<rect x="183" y="301" width="12" height="13" fill="#38383c"/>
<rect x="196" y="301" width="12" height="13" fill="#38383c"/>
<rect x="209" y="301" width="13" height="13" fill="#38383c"/>
<rect x="223" y="301" width="12" height="13" fill="#38383c"/>
<rect x="236" y="301" width="12" height="13" fill="#5a5a5e"/>
<rect x="249" y="301" width="13" height="13" fill="#5a5a5e"/>
<rect x="263" y="301" width="12" height="13" fill="#5a5a5e"/>
<rect x="276" y="301" width="12" height="13" fill="#38383c"/>
<rect x="289" y="301" width="13" height="13" fill="#38383c"/>
<rect x="303" y="301" width="12" height="13" fill="#ee4438"/>
<rect x="316" y="301" width="12" height="13" fill="#38383c"/>
<rect x="329" y="301" width="13" height="13" fill="#38383c"/>
<rect x="343" y="301" width="12" height="13" fill="#5a5a5e"/>
<rect x="356" y="301" width="12" height="13" fill="#38383c"/>
<rect x="369" y="301" width="13" height="13" fill="#38383c"/>
<rect x="383" y="301" width="12" height="13" fill="#38383c"/>
<rect x="396" y="301" width="12" height="13" fill="#38383c"/>
<rect x="409" y="301" width="13" height="13" fill="#38383c"/>
<rect x="423" y="301" width="12" height="13" fill="#38383c"/>
<rect x="436" y="301" width="12" height="13" fill="#38383c"/>
<rect x="449" y="301" width="13" height="13" fill="#38383c"/>
<rect x="463" y="301" width="12" height="13" fill="#5a5a5e"/>
<rect x="476" y="301" width="13" height="13" fill="#38383c"/>
<rect x="490" y="301" width="12" height="13" fill="#38383c"/>
<rect x="503" y="301" width="12" height="13" fill="#38383c"/>
<rect x="516" y="301" width="13" height="13" fill="#38383c"/>
<rect x="530" y="301" width="12" height="13" fill="#5a5a5e"/>
<rect x="543" y="301" width="12" height="13" fill="#38383c"/>
<rect x="556" y="301" width="13" height="13" fill="#38383c"/>
<rect x="570" y="301" width="12" height="13" fill="#38383c"/>
<rect x="583" y="301" width="12" height="13" fill="#38383c"/>
<rect x="596" y="301" width="13" height="13" fill="#38383c"/>
<rect x="610" y="301" width="12" height="13" fill="#38383c"/>
<rect x="623" y="301" width="12" height="13" fill="#38383c"/>
<rect x="636" y="301" width="13" height="13" fill="#5a5a5e"/>
<rect x="650" y="301" width="12" height="13" fill="#38383c"/>
<rect x="663" y="301" width="12" height="13" fill="#38383c"/>
<rect x="676" y="301" width="13" height="13" fill="#38383c"/>
<rect x="690" y="301" width="12" height="13" fill="#38383c"/>
<rect x="703" y="301" width="12" height="13" fill="#38383c"/>
<rect x="716" y="301" width="13" height="13" fill="#5a5a5e"/>
<rect x="730" y="301" width="12" height="13" fill="#38383c"/>
<rect x="743" y="301" width="12" height="13" fill="#38383c"/>
<rect x="756" y="301" width="13" height="13" fill="#38383c"/>
<rect x="770" y="301" width="12" height="13" fill="#38383c"/>
<rect x="783" y="301" width="12" height="13" fill="#38383c"/>
<rect x="796" y="301" width="13" height="13" fill="#38383c"/>
<rect x="0" y="315" width="8" height="13" fill="#2c2b2b"/>
<rect x="9" y="315" width="12" height="13" fill="#38383c"/>
<rect x="22" y="315" width="13" height="13" fill="#38383c"/>
<rect x="36" y="315" width="12" height="13" fill="#38383c"/>
<rect x="49" y="315" width="12" height="13" fill="#38383c"/>
<rect x="62" y="315" width="13" height="13" fill="#38383c"/>
<rect x="76" y="315" width="12" height="13" fill="#38383c"/>
<rect x="89" y="315" width="13" height="13" fill="#38383c"/>
<rect x="103" y="315" width="12" height="13" fill="#38383c"/>
<rect x="116" y="315" width="12" height="13" fill="#38383c"/>
<rect x="129" y="315" width="13" height="13" fill="#38383c"/>
<rect x="143" y="315" width="12" height="13" fill="#5a5a5e"/>
<rect x="156" y="315" width="12" height="13" fill="#6a4ccc"/>
<rect x="169" y="315" width="13" height="13" fill="#38383c"/>
<rect x="183" y="315" width="12" height="13" fill="#38383c"/>
<rect x="196" y="315" width="12" height="13" fill="#38383c"/>
<rect x="209" y="315" width="13" height="13" fill="#38383c"/>
<rect x="223" y="315" width="12" height="13" fill="#38383c"/>
<rect x="236" y="315" width="12" height="13" fill="#38383c"/>
<rect x="249" y="315" width="13" height="13" fill="#38383c"/>
<rect x="263" y="315" width="12" height="13" fill="#38383c"/>
<rect x="276" y="315" width="12" height="13" fill="#38383c"/>
<rect x="289" y="315" width="13" height="13" fill="#38383c"/>
<rect x="303" y="315" width="12" height="13" fill="#38383c"/>
<rect x="316" y="315" width="12" height="13" fill="#5a5a5e"/>
<rect x="329" y="315" width="13" height="13" fill="#38383c"/>
<rect x="343" y="315" width="12" height="13" fill="#38383c"/>
<rect x="356" y="315" width="12" height="13" fill="#38383c"/>
<rect x="369" y="315" width="13" height="13" fill="#38383c"/>
<rect x="383" y="315" width="12" height="13" fill="#38383c"/>
<rect x="396" y="315" width="12" height="13" fill="#38383c"/>
<rect x="409" y="315" width="13" height="13" fill="#38383c"/>
<rect x="423" y="315" width="12" height="13" fill="#5a5a5e"/>
<rect x="436" y="315" width="12" height="13" fill="#5a5a5e"/>
<rect x="449" y="315" width="13" height="13" fill="#38383c"/>
<rect x="463" y="315" width="12" height="13" fill="#38383c"/>
<rect x="476" y="315" width="13" height="13" fill="#38383c"/>
<rect x="490" y="315" width="12" height="13" fill="#38383c"/>
<rect x="503" y="315" width="12" height="13" fill="#38383c"/>
<rect x="516" y="315" width="13" height="13" fill="#5a5a5e"/>
<rect x="530" y="315" width="12" height="13" fill="#38383c"/>
<rect x="543" y="315" width="12" height="13" fill="#5a5a5e"/>
<rect x="556" y="315" width="13" height="13" fill="#5a5a5e"/>
<rect x="570" y="315" width="12" height="13" fill="#38383c"/>
<rect x="583" y="315" width="12" height="13" fill="#38383c"/>
<rect x="596" y="315" width="13" height="13" fill="#38383c"/>
<rect x="610" y="315" width="12" height="13" fill="#6a4ccc"/>
<rect x="623" y="315" width="12" height="13" fill="#38383c"/>
<rect x="636" y="315" width="13" height="13" fill="#38383c"/>
<rect x="650" y="315" width="12" height="13" fill="#38383c"/>
<rect x="663" y="315" width="12" height="13" fill="#5a5a5e"/>
<rect x="676" y="315" width="13" height="13" fill="#38383c"/>
<rect x="690" y="315" width="12" height="13" fill="#38383c"/>
<rect x="703" y="315" width="12" height="13" fill="#38383c"/>
<rect x="716" y="315" width="13" height="13" fill="#38383c"/>
<rect x="730" y="315" width="12" height="13" fill="#6a4ccc"/>
<rect x="743" y="315" width="12" height="13" fill="#38383c"/>
<rect x="756" y="315" width="13" height="13" fill="#38383c"/>
<rect x="770" y="315" width="12" height="13" fill="#38383c"/>
<rect x="783" y="315" width="12" height="13" fill="#38383c"/>
<rect x="796" y="315" width="13" height="13" fill="#38383c"/>
<rect x="0" y="329" width="8" height="13" fill="#2c2b2b"/>
<rect x="9" y="329" width="12" height="13" fill="#5a5a5e"/>
<rect x="22" y="329" width="13" height="13" fill="#38383c"/>
<rect x="36" y="329" width="12" height="13" fill="#38383c"/>
<rect x="49" y="329" width="12" height="13" fill="#38383c"/>
<rect x="62" y="329" width="13" height="13" fill="#38383c"/>
<rect x="76" y="329" width="12" height="13" fill="#38383c"/>
<rect x="89" y="329" width="13" height="13" fill="#6a4ccc"/>
<rect x="103" y="329" width="12" height="13" fill="#38383c"/>
<rect x="116" y="329" width="12" height="13" fill="#38383c"/>
<rect x="129" y="329" width="13" height="13" fill="#5a5a5e"/>
<rect x="143" y="329" width="12" height="13" fill="#38383c"/>
<rect x="156" y="329" width="12" height="13" fill="#38383c"/>
<rect x="169" y="329" width="13" height="13" fill="#38383c"/>
<rect x="183" y="329" width="12" height="13" fill="#38383c"/>
<rect x="196" y="329" width="12" height="13" fill="#38383c"/>
<rect x="209" y="329" width="13" height="13" fill="#38383c"/>
<rect x="223" y="329" width="12" height="13" fill="#38383c"/>
<rect x="236" y="329" width="12" height="13" fill="#38383c"/>
<rect x="249" y="329" width="13" height="13" fill="#38383c"/>
<rect x="263" y="329" width="12" height="13" fill="#38383c"/>
<rect x="276" y="329" width="12" height="13" fill="#38383c"/>
<rect x="289" y="329" width="13" height="13" fill="#38383c"/>
<rect x="303" y="329" width="12" height="13" fill="#38383c"/>
<rect x="316" y="329" width="12" height="13" fill="#38383c"/>
<rect x="329" y="329" width="13" height="13" fill="#5a5a5e"/>
<rect x="343" y="329" width="12" height="13" fill="#6a4ccc"/>
<rect x="356" y="329" width="12" height="13" fill="#38383c"/>
<rect x="369" y="329" width="13" height="13" fill="#38383c"/>
<rect x="383" y="329" width="12" height="13" fill="#38383c"/>
<rect x="396" y="329" width="12" height="13" fill="#38383c"/>
<rect x="409" y="329" width="13" height="13" fill="#5a5a5e"/>
<rect x="423" y="329" width="12" height="13" fill="#38383c"/>
<rect x="436" y="329" width="12" height="13" fill="#38383c"/>
<rect x="449" y="329" width="13" height="13" fill="#38383c"/>
<rect x="463" y="329" width="12" height="13" fill="#ee4438"/>
<rect x="476" y="329" width="13" height="13" fill="#38383c"/>
<rect x="490" y="329" width="12" height="13" fill="#38383c"/>
<rect x="503" y="329" width="12" height="13" fill="#38383c"/>
<rect x="516" y="329" width="13" height="13" fill="#5a5a5e"/>
<rect x="530" y="329" width="12" height="13" fill="#38383c"/>
<rect x="543" y="329" width="12" height="13" fill="#38383c"/>
<rect x="556" y="329" width="13" height="13" fill="#38383c"/>
<rect x="570" y="329" width="12" height="13" fill="#5a5a5e"/>
<rect x="583" y="329" width="12" height="13" fill="#38383c"/>
<rect x="596" y="329" width="13" height="13" fill="#6a4ccc"/>
<rect x="610" y="329" width="12" height="13" fill="#38383c"/>
<rect x="623" y="329" width="12" height="13" fill="#38383c"/>
<rect x="636" y="329" width="13" height="13" fill="#38383c"/>
<rect x="650" y="329" width="12" height="13" fill="#5a5a5e"/>
<rect x="663" y="329" width="12" height="13" fill="#38383c"/>
<rect x="676" y="329" width="13" height="13" fill="#38383c"/>
<rect x="690" y="329" width="12" height="13" fill="#5a5a5e"/>
<rect x="703" y="329" width="12" height="13" fill="#5a5a5e"/>
<rect x="716" y="329" width="13" height="13" fill="#38383c"/>
<rect x="730" y="329" width="12" height="13" fill="#38383c"/>
<rect x="743" y="329" width="12" height="13" fill="#38383c"/>
<rect x="756" y="329" width="13" height="13" fill="#38383c"/>
<rect x="770" y="329" width="12" height="13" fill="#38383c"/>
<rect x="783" y="329" width="12" height="13" fill="#38383c"/>
<rect x="796" y="329" width="13" height="13" fill="#38383c"/>
<rect x="0" y="343" width="8" height="13" fill="#2c2b2b"/>
<rect x="9" y="343" width="12" height="13" fill="#38383c"/>
<rect x="22" y="343" width="13" height="13" fill="#38383c"/>
<rect x="36" y="343" width="12" height="13" fill="#38383c"/>
<rect x="49" y="343" width="12" height="13" fill="#38383c"/>
<rect x="62" y="343" width="13" height="13" fill="#38383c"/>
<rect x="76" y="343" width="12" height="13" fill="#38383c"/>
<rect x="89" y="343" width="13" height="13" fill="#38383c"/>
<rect x="103" y="343" width="12" height="13" fill="#38383c"/>
<rect x="116" y="343" width="12" height="13" fill="#38383c"/>
<rect x="129" y="343" width="13" height="13" fill="#5a5a5e"/>
<rect x="143" y="343" width="12" height="13" fill="#5a5a5e"/>
<rect x="156" y="343" width="12" height="13" fill="#38383c"/>
<rect x="169" y="343" width="13" height="13" fill="#6a4ccc"/>
<rect x="183" y="343" width="12" height="13" fill="#38383c"/>
<rect x="196" y="343" width="12" height="13" fill="#38383c"/>
<rect x="209" y="343" width="13" height="13" fill="#38383c"/>
<rect x="223" y="343" width="12" height="13" fill="#5a5a5e"/>
<rect x="236" y="343" width="12" height="13" fill="#5a5a5e"/>
<rect x="249" y="343" width="13" height="13" fill="#38383c"/>
<rect x="263" y="343" width="12" height="13" fill="#38383c"/>
<rect x="276" y="343" width="12" height="13" fill="#38383c"/>
<rect x="289" y="343" width="13" height="13" fill="#5a5a5e"/>
<rect x="303" y="343" width="12" height="13" fill="#38383c"/>
<rect x="316" y="343" width="12" height="13" fill="#38383c"/>
<rect x="329" y="343" width="13" height="13" fill="#38383c"/>
<rect x="343" y="343" width="12" height="13" fill="#5a5a5e"/>
<rect x="356" y="343" width="12" height="13" fill="#ee4438"/>
<rect x="369" y="343" width="13" height="13" fill="#38383c"/>
<rect x="383" y="343" width="12" height="13" fill="#38383c"/>
<rect x="396" y="343" width="12" height="13" fill="#5a5a5e"/>
<rect x="409" y="343" width="13" height="13" fill="#5a5a5e"/>
<rect x="423" y="343" width="12" height="13" fill="#5a5a5e"/>
<rect x="436" y="343" width="12" height="13" fill="#38383c"/>
<rect x="449" y="343" width="13" height="13" fill="#5a5a5e"/>
<rect x="463" y="343" width="12" height="13" fill="#38383c"/>
<rect x="476" y="343" width="13" height="13" fill="#38383c"/>
<rect x="490" y="343" width="12" height="13" fill="#5a5a5e"/>
<rect x="503" y="343" width="12" height="13" fill="#38383c"/>
<rect x="516" y="343" width="13" height="13" fill="#38383c"/>
<rect x="530" y="343" width="12" height="13" fill="#38383c"/>
<rect x="543" y="343" width="12" height="13" fill="#5a5a5e"/>
<rect x="556" y="343" width="13" height="13" fill="#38383c"/>
<rect x="570" y="343" width="12" height="13" fill="#38383c"/>
<rect x="583" y="343" width="12" height="13" fill="#38383c"/>
<rect x="596" y="343" width="13" height="13" fill="#38383c"/>
<rect x="610" y="343" width="12" height="13" fill="#38383c"/>
<rect x="623" y="343" width="12" height="13" fill="#38383c"/>
<rect x="636" y="343" width="13" height="13" fill="#38383c"/>
<rect x="650" y="343" width="12" height="13" fill="#38383c"/>
<rect x="663" y="343" width="12" height="13" fill="#38383c"/>
<rect x="676" y="343" width="13" height="13" fill="#38383c"/>
<rect x="690" y="343" width="12" height="13" fill="#38383c"/>
<rect x="703" y="343" width="12" height="13" fill="#6a4ccc"/>
<rect x="716" y="343" width="13" height="13" fill="#5a5a5e"/>
<rect x="730" y="343" width="12" height="13" fill="#38383c"/>
<rect x="743" y="343" width="12" height="13" fill="#38383c"/>
<rect x="756" y="343" width="13" height="13" fill="#38383c"/>
<rect x="770" y="343" width="12" height="13" fill="#38383c"/>
<rect x="783" y="343" width="12" height="13" fill="#38383c"/>
<rect x="796" y="343" width="13" height="13" fill="#38383c"/>
<rect x="0" y="357" width="8" height="12" fill="#2c2b2b"/>
<rect x="9" y="357" width="12" height="12" fill="#38383c"/>
<rect x="22" y="357" width="13" height="12" fill="#38383c"/>
<rect x="36" y="357" width="12" height="12" fill="#38383c"/>
<rect x="49" y="357" width="12" height="12" fill="#5a5a5e"/>
<rect x="62" y="357" width="13" height="12" fill="#38383c"/>
<rect x="76" y="357" width="12" height="12" fill="#38383c"/>
<rect x="89" y="357" width="13" height="12" fill="#38383c"/>
<rect x="103" y="357" width="12" height="12" fill="#38383c"/>
<rect x="116" y="357" width="12" height="12" fill="#38383c"/>
<rect x="129" y="357" width="13" height="12" fill="#38383c"/>
<rect x="143" y="357" width="12" height="12" fill="#5a5a5e"/>
<rect x="156" y="357" width="12" height="12" fill="#38383c"/>
<rect x="169" y="357" width="13" height="12" fill="#38383c"/>
<rect x="183" y="357" width="12" height="12" fill="#5a5a5e"/>
<rect x="196" y="357" width="12" height="12" fill="#5a5a5e"/>
<rect x="209" y="357" width="13" height="12" fill="#38383c"/>
<rect x="223" y="357" width="12" height="12" fill="#5a5a5e"/>
<rect x="236" y="357" width="12" height="12" fill="#38383c"/>
<rect x="249" y="357" width="13" height="12" fill="#5a5a5e"/>
<rect x="263" y="357" width="12" height="12" fill="#38383c"/>
<rect x="276" y="357" width="12" height="12" fill="#38383c"/>
<rect x="289" y="357" width="13" height="12" fill="#38383c"/>
<rect x="303" y="357" width="12" height="12" fill="#38383c"/>
<rect x="316" y="357" width="12" height="12" fill="#38383c"/>
<rect x="329" y="357" width="13" height="12" fill="#38383c"/>
<rect x="343" y="357" width="12" height="12" fill="#5a5a5e"/>
<rect x="356" y="357" width="12" height="12" fill="#5a5a5e"/>
<rect x="369" y="357" width="13" height="12" fill="#38383c"/>
<rect x="383" y="357" width="12" height="12" fill="#5a5a5e"/>
<rect x="396" y="357" width="12" height="12" fill="#38383c"/>
<rect x="409" y="357" width="13" height="12" fill="#38383c"/>
<rect x="423" y="357" width="12" height="12" fill="#5a5a5e"/>
<rect x="436" y="357" width="12" height="12" fill="#38383c"/>
<rect x="449" y="357" width="13" height="12" fill="#38383c"/>
<rect x="463" y="357" width="12" height="12" fill="#5a5a5e"/>
<rect x="476" y="357" width="13" height="12" fill="#38383c"/>
<rect x="490" y="357" width="12" height="12" fill="#38383c"/>
<rect x="503" y="357" width="12" height="12" fill="#38383c"/>
<rect x="516" y="357" width="13" height="12" fill="#5a5a5e"/>
<rect x="530" y="357" width="12" height="12" fill="#38383c"/>
<rect x="543" y="357" width="12" height="12" fill="#38383c"/>
<rect x="556" y="357" width="13" height="12" fill="#38383c"/>
<rect x="570" y="357" width="12" height="12" fill="#38383c"/>
<rect x="583" y="357" width="12" height="12" fill="#38383c"/>
<rect x="596" y="357" width="13" height="12" fill="#38383c"/>
<rect x="610" y="357" width="12" height="12" fill="#6a4ccc"/>
<rect x="623" y="357" width="12" height="12" fill="#38383c"/>
<rect x="636" y="357" width="13" height="12" fill="#38383c"/>
<rect x="650" y="357" width="12" height="12" fill="#6a4ccc"/>
<rect x="663" y="357" width="12" height="12" fill="#38383c"/>
<rect x="676" y="357" width="13" height="12" fill="#38383c"/>
<rect x="690" y="357" width="12" height="12" fill="#38383c"/>
<rect x="703" y="357" width="12" height="12" fill="#38383c"/>
<rect x="716" y="357" width="13" height="12" fill="#38383c"/>
<rect x="730" y="357" width="12" height="12" fill="#38383c"/>
<rect x="743" y="357" width="12" height="12" fill="#38383c"/>
<rect x="756" y="357" width="13" height="12" fill="#38383c"/>
<rect x="770" y="357" width="12" height="12" fill="#38383c"/>
<rect x="783" y="357" width="12" height="12" fill="#5a5a5e"/>
<rect x="796" y="357" width="13" height="12" fill="#38383c"/>
<rect x="0" y="370" width="8" height="13" fill="#2c2b2b"/>
<rect x="9" y="370" width="12" height="13" fill="#5a5a5e"/>
<rect x="22" y="370" width="13" height="13" fill="#38383c"/>
<rect x="36" y="370" width="12" height="13" fill="#5a5a5e"/>
<rect x="49" y="370" width="12" height="13" fill="#38383c"/>
<rect x="62" y="370" width="13" height="13" fill="#38383c"/>
<rect x="76" y="370" width="12" height="13" fill="#38383c"/>
<rect x="89" y="370" width="13" height="13" fill="#5a5a5e"/>
<rect x="103" y="370" width="12" height="13" fill="#5a5a5e"/>
<rect x="116" y="370" width="12" height="13" fill="#38383c"/>
<rect x="129" y="370" width="13" height="13" fill="#38383c"/>
<rect x="143" y="370" width="12" height="13" fill="#38383c"/>
<rect x="156" y="370" width="12" height="13" fill="#38383c"/>
<rect x="169" y="370" width="13" height="13" fill="#38383c"/>
<rect x="183" y="370" width="12" height="13" fill="#5a5a5e"/>
<rect x="196" y="370" width="12" height="13" fill="#38383c"/>
<rect x="209" y="370" width="13" height="13" fill="#38383c"/>
<rect x="223" y="370" width="12" height="13" fill="#38383c"/>
<rect x="236" y="370" width="12" height="13" fill="#38383c"/>
<rect x="249" y="370" width="13" height="13" fill="#38383c"/>
<rect x="263" y="370" width="12" height="13" fill="#5a5a5e"/>
<rect x="276" y="370" width="12" height="13" fill="#5a5a5e"/>
<rect x="289" y="370" width="13" height="13" fill="#38383c"/>
<rect x="303" y="370" width="12" height="13" fill="#38383c"/>
<rect x="316" y="370" width="12" height="13" fill="#38383c"/>
<rect x="329" y="370" width="13" height="13" fill="#38383c"/>
<rect x="343" y="370" width="12" height="13" fill="#38383c"/>
<rect x="356" y="370" width="12" height="13" fill="#5a5a5e"/>
<rect x="369" y="370" width="13" height="13" fill="#5a5a5e"/>
<rect x="383" y="370" width="12" height="13" fill="#38383c"/>
<rect x="396" y="370" width="12" height="13" fill="#38383c"/>
<rect x="409" y="370" width="13" height="13" fill="#38383c"/>
<rect x="423" y="370" width="12" height="13" fill="#38383c"/>
<rect x="436" y="370" width="12" height="13" fill="#38383c"/>
<rect x="449" y="370" width="13" height="13" fill="#38383c"/>
<rect x="463" y="370" width="12" height="13" fill="#38383c"/>
<rect x="476" y="370" width="13" height="13" fill="#5a5a5e"/>
<rect x="490" y="370" width="12" height="13" fill="#38383c"/>
<rect x="503" y="370" width="12" height="13" fill="#5a5a5e"/>
<rect x="516" y="370" width="13" height="13" fill="#38383c"/>
<rect x="530" y="370" width="12" height="13" fill="#38383c"/>
<rect x="543" y="370" width="12" height="13" fill="#5a5a5e"/>
<rect x="556" y="370" width="13" height="13" fill="#38383c"/>
<rect x="570" y="370" width="12" height="13" fill="#38383c"/>
<rect x="583" y="370" width="12" height="13" fill="#38383c"/>
<rect x="596" y="370" width="13" height="13" fill="#5a5a5e"/>
<rect x="610" y="370" width="12" height="13" fill="#38383c"/>
<rect x="623" y="370" width="12" height="13" fill="#38383c"/>
<rect x="636" y="370" width="13" height="13" fill="#38383c"/>
<rect x="650" y="370" width="12" height="13" fill="#38383c"/>
<rect x="663" y="370" width="12" height="13" fill="#5a5a5e"/>
<rect x="676" y="370" width="13" height="13" fill="#38383c"/>
<rect x="690" y="370" width="12" height="13" fill="#38383c"/>
<rect x="703" y="370" width="12" height="13" fill="#38383c"/>
<rect x="716" y="370" width="13" height="13" fill="#38383c"/>
<rect x="730" y="370" width="12" height="13" fill="#38383c"/>
<rect x="743" y="370" width="12" height="13" fill="#38383c"/>
<rect x="756" y="370" width="13" height="13" fill="#38383c"/>
<rect x="770" y="370" width="12" height="13" fill="#38383c"/>
<rect x="783" y="370" width="12" height="13" fill="#38383c"/>
<rect x="796" y="370" width="13" height="13" fill="#38383c"/>
<rect x="0" y="384" width="8" height="13" fill="#2c2b2b"/>
<rect x="9" y="384" width="12" height="13" fill="#38383c"/>
<rect x="22" y="384" width="13" height="13" fill="#38383c"/>
<rect x="36" y="384" width="12" height="13" fill="#38383c"/>
<rect x="49" y="384" width="12" height="13" fill="#38383c"/>
<rect x="62" y="384" width="13" height="13" fill="#38383c"/>
<rect x="76" y="384" width="12" height="13" fill="#ee4438"/>
<rect x="89" y="384" width="13" height="13" fill="#5a5a5e"/>
<rect x="103" y="384" width="12" height="13" fill="#38383c"/>
<rect x="116" y="384" width="12" height="13" fill="#5a5a5e"/>
<rect x="129" y="384" width="13" height="13" fill="#38383c"/>
<rect x="143" y="384" width="12" height="13" fill="#38383c"/>
<rect x="156" y="384" width="12" height="13" fill="#38383c"/>
<rect x="169" y="384" width="13" height="13" fill="#38383c"/>
<rect x="183" y="384" width="12" height="13" fill="#38383c"/>
<rect x="196" y="384" width="12" height="13" fill="#38383c"/>
<rect x="209" y="384" width="13" height="13" fill="#38383c"/>
<rect x="223" y="384" width="12" height="13" fill="#38383c"/>
<rect x="236" y="384" width="12" height="13" fill="#38383c"/>
<rect x="249" y="384" width="13" height="13" fill="#38383c"/>
<rect x="263" y="384" width="12" height="13" fill="#5a5a5e"/>
<rect x="276" y="384" width="12" height="13" fill="#5a5a5e"/>
<rect x="289" y="384" width="13" height="13" fill="#5a5a5e"/>
<rect x="303" y="384" width="12" height="13" fill="#38383c"/>
<rect x="316" y="384" width="12" height="13" fill="#38383c"/>
<rect x="329" y="384" width="13" height="13" fill="#38383c"/>
<rect x="343" y="384" width="12" height="13" fill="#38383c"/>
<rect x="356" y="384" width="12" height="13" fill="#38383c"/>
<rect x="369" y="384" width="13" height="13" fill="#38383c"/>
<rect x="383" y="384" width="12" height="13" fill="#38383c"/>
<rect x="396" y="384" width="12" height="13" fill="#38383c"/>
<rect x="409" y="384" width="13" height="13" fill="#5a5a5e"/>
<rect x="423" y="384" width="12" height="13" fill="#38383c"/>
<rect x="436" y="384" width="12" height="13" fill="#38383c"/>
<rect x="449" y="384" width="13" height="13" fill="#5a5a5e"/>
<rect x="463" y="384" width="12" height="13" fill="#38383c"/>
<rect x="476" y="384" width="13" height="13" fill="#38383c"/>
<rect x="490" y="384" width="12" height="13" fill="#38383c"/>
<rect x="503" y="384" width="12" height="13" fill="#38383c"/>
<rect x="516" y="384" width="13" height="13" fill="#5a5a5e"/>
<rect x="530" y="384" width="12" height="13" fill="#38383c"/>
<rect x="543" y="384" width="12" height="13" fill="#5a5a5e"/>
<rect x="556" y="384" width="13" height="13" fill="#38383c"/>
<rect x="570" y="384" width="12" height="13" fill="#38383c"/>
<rect x="583" y="384" width="12" height="13" fill="#38383c"/>
<rect x="596" y="384" width="13" height="13" fill="#38383c"/>
<rect x="610" y="384" width="12" height="13" fill="#38383c"/>
<rect x="623" y="384" width="12" height="13" fill="#38383c"/>
<rect x="636" y="384" width="13" height="13" fill="#5a5a5e"/>
<rect x="650" y="384" width="12" height="13" fill="#38383c"/>
<rect x="663" y="384" width="12" height="13" fill="#38383c"/>
<rect x="676" y="384" width="13" height="13" fill="#38383c"/>
<rect x="690" y="384" width="12" height="13" fill="#5a5a5e"/>
<rect x="703" y="384" width="12" height="13" fill="#5a5a5e"/>
<rect x="716" y="384" width="13" height="13" fill="#38383c"/>
<rect x="730" y="384" width="12" height="13" fill="#38383c"/>
<rect x="743" y="384" width="12" height="13" fill="#38383c"/>
<rect x="756" y="384" width="13" height="13" fill="#38383c"/>
<rect x="770" y="384" width="12" height="13" fill="#5a5a5e"/>
<rect x="783" y="384" width="12" height="13" fill="#38383c"/>
<rect x="796" y="384" width="13" height="13" fill="#38383c"/>
<rect x="0" y="398" width="8" height="2" fill="#2c2b2b"/>
<rect x="9" y="398" width="12" height="2" fill="#6a4ccc"/>
<rect x="22" y="398" width="13" height="2" fill="#38383c"/>
<rect x="36" y="398" width="12" height="2" fill="#6a4ccc"/>
<rect x="49" y="398" width="12" height="2" fill="#38383c"/>
<rect x="62" y="398" width="13" height="2" fill="#38383c"/>
<rect x="76" y="398" width="12" height="2" fill="#38383c"/>
<rect x="89" y="398" width="13" height="2" fill="#5a5a5e"/>
<rect x="103" y="398" width="12" height="2" fill="#38383c"/>
<rect x="116" y="398" width="12" height="2" fill="#38383c"/>
<rect x="129" y="398" width="13" height="2" fill="#38383c"/>
<rect x="143" y="398" width="12" height="2" fill="#38383c"/>
<rect x="156" y="398" width="12" height="2" fill="#38383c"/>
<rect x="169" y="398" width="13" height="2" fill="#38383c"/>
<rect x="183" y="398" width="12" height="2" fill="#38383c"/>
<rect x="196" y="398" width="12" height="2" fill="#38383c"/>
<rect x="209" y="398" width="13" height="2" fill="#38383c"/>
<rect x="223" y="398" width="12" height="2" fill="#38383c"/>
<rect x="236" y="398" width="12" height="2" fill="#38383c"/>
<rect x="249" y="398" width="13" height="2" fill="#38383c"/>
<rect x="263" y="398" width="12" height="2" fill="#38383c"/>
<rect x="276" y="398" width="12" height="2" fill="#38383c"/>
<rect x="289" y="398" width="13" height="2" fill="#5a5a5e"/>
<rect x="303" y="398" width="12" height="2" fill="#38383c"/>
<rect x="316" y="398" width="12" height="2" fill="#38383c"/>
<rect x="329" y="398" width="13" height="2" fill="#38383c"/>
<rect x="343" y="398" width="12" height="2" fill="#38383c"/>
<rect x="356" y="398" width="12" height="2" fill="#5a5a5e"/>
<rect x="369" y="398" width="13" height="2" fill="#38383c"/>
<rect x="383" y="398" width="12" height="2" fill="#38383c"/>
<rect x="396" y="398" width="12" height="2" fill="#38383c"/>
<rect x="409" y="398" width="13" height="2" fill="#5a5a5e"/>
<rect x="423" y="398" width="12" height="2" fill="#38383c"/>
<rect x="436" y="398" width="12" height="2" fill="#5a5a5e"/>
<rect x="449" y="398" width="13" height="2" fill="#38383c"/>
<rect x="463" y="398" width="12" height="2" fill="#38383c"/>
<rect x="476" y="398" width="13" height="2" fill="#38383c"/>
<rect x="490" y="398" width="12" height="2" fill="#38383c"/>
<rect x="503" y="398" width="12" height="2" fill="#38383c"/>
<rect x="516" y="398" width="13" height="2" fill="#38383c"/>
<rect x="530" y="398" width="12" height="2" fill="#38383c"/>
<rect x="543" y="398" width="12" height="2" fill="#38383c"/>
<rect x="556" y="398" width="13" height="2" fill="#38383c"/>
<rect x="570" y="398" width="12" height="2" fill="#38383c"/>
<rect x="583" y="398" width="12" height="2" fill="#38383c"/>
<rect x="596" y="398" width="13" height="2" fill="#38383c"/>
<rect x="610" y="398" width="12" height="2" fill="#5a5a5e"/>
<rect x="623" y="398" width="12" height="2" fill="#38383c"/>
<rect x="636" y="398" width="13" height="2" fill="#5a5a5e"/>
<rect x="650" y="398" width="12" height="2" fill="#38383c"/>
<rect x="663" y="398" width="12" height="2" fill="#5a5a5e"/>
<rect x="676" y="398" width="13" height="2" fill="#38383c"/>
<rect x="690" y="398" width="12" height="2" fill="#38383c"/>
<rect x="703" y="398" width="12" height="2" fill="#5a5a5e"/>
<rect x="716" y="398" width="13" height="2" fill="#38383c"/>
<rect x="730" y="398" width="12" height="2" fill="#38383c"/>
<rect x="743" y="398" width="12" height="2" fill="#5a5a5e"/>
<rect x="756" y="398" width="13" height="2" fill="#38383c"/>
<rect x="770" y="398" width="12" height="2" fill="#38383c"/>
<rect x="783" y="398" width="12" height="2" fill="#38383c"/>
<rect x="796" y="398" width="13" height="2" fill="#38383c"/>
<rect x="9" y="80" width="12" height="1" fill="#2a4784"/>
<rect x="36" y="80" width="12" height="1" fill="#2a4784"/>
<rect x="76" y="80" width="12" height="1" fill="#2a4784"/>
<rect x="89" y="80" width="13" height="1" fill="#2a4784"/>
<rect x="103" y="80" width="12" height="1" fill="#2a4784"/>
<rect x="116" y="80" width="12" height="1" fill="#2a4784"/>
<rect x="156" y="80" width="12" height="1" fill="#2a4784"/>
<rect x="223" y="80" width="12" height="1" fill="#2a4784"/>
<rect x="236" y="80" width="12" height="1" fill="#2a4784"/>
<rect x="263" y="80" width="12" height="1" fill="#2a4784"/>
<rect x="303" y="80" width="12" height="1" fill="#2a4784"/>
<rect x="316" y="80" width="12" height="1" fill="#2a4784"/>
<rect x="356" y="80" width="12" height="1" fill="#2a4784"/>
<rect x="383" y="80" width="12" height="1" fill="#2a4784"/>
<rect x="409" y="80" width="13" height="1" fill="#2a4784"/>
<rect x="423" y="80" width="12" height="1" fill="#2a4784"/>
<rect x="436" y="80" width="12" height="1" fill="#2a4784"/>
<rect x="463" y="80" width="12" height="1" fill="#2a4784"/>
<rect x="476" y="80" width="13" height="1" fill="#2a4784"/>
<rect x="490" y="80" width="12" height="1" fill="#2a4784"/>
<rect x="503" y="80" width="12" height="1" fill="#2a4784"/>
<rect x="516" y="80" width="13" height="1" fill="#2a4784"/>
<rect x="530" y="80" width="12" height="1" fill="#2a4784"/>
<rect x="543" y="80" width="12" height="1" fill="#2a4784"/>
<rect x="583" y="80" width="12" height="1" fill="#2a4784"/>
<rect x="596" y="80" width="13" height="1" fill="#2a4784"/>
<rect x="636" y="80" width="13" height="1" fill="#2a4784"/>
<rect x="663" y="80" width="12" height="1" fill="#2a4784"/>
<rect x="676" y="80" width="13" height="1" fill="#2a4784"/>
<rect x="690" y="80" width="12" height="1" fill="#2a4784"/>
<rect x="703" y="80" width="12" height="1" fill="#2a4784"/>
<rect x="716" y="80" width="13" height="1" fill="#2a4784"/>
<rect x="730" y="80" width="12" height="1" fill="#2a4784"/>
<rect x="756" y="80" width="13" height="1" fill="#2a4784"/>
<rect x="796" y="80" width="13" height="1" fill="#2a4784"/>
<rect x="22" y="94" width="13" height="1" fill="#3e2619"/>
<rect x="36" y="94" width="12" height="1" fill="#2a4784"/>
<rect x="62" y="94" width="13" height="1" fill="#3e2619"/>
<rect x="76" y="94" width="12" height="1" fill="#2a4784"/>
<rect x="89" y="94" width="13" height="1" fill="#2a4784"/>
<rect x="223" y="94" width="12" height="1" fill="#2a4784"/>
<rect x="263" y="94" width="12" height="1" fill="#2a4784"/>
<rect x="289" y="94" width="13" height="1" fill="#3e2619"/>
<rect x="303" y="94" width="12" height="1" fill="#2a4784"/>
<rect x="316" y="94" width="12" height="1" fill="#2a4784"/>
<rect x="356" y="94" width="12" height="1" fill="#2a4784"/>
<rect x="383" y="94" width="12" height="1" fill="#2a4784"/>
<rect x="396" y="94" width="12" height="1" fill="#3e2619"/>
<rect x="409" y="94" width="13" height="1" fill="#2a4784"/>
<rect x="423" y="94" width="12" height="1" fill="#2a4784"/>
<rect x="436" y="94" width="12" height="1" fill="#2a4784"/>
<rect x="463" y="94" width="12" height="1" fill="#2a4784"/>
<rect x="476" y="94" width="13" height="1" fill="#2a4784"/>
<rect x="530" y="94" width="12" height="1" fill="#2a4784"/>
<rect x="543" y="94" width="12" height="1" fill="#2a4784"/>
<rect x="570" y="94" width="12" height="1" fill="#3e2619"/>
<rect x="583" y="94" width="12" height="1" fill="#2a4784"/>
<rect x="596" y="94" width="13" height="1" fill="#2a4784"/>
<rect x="623" y="94" width="12" height="1" fill="#3e2619"/>
<rect x="636" y="94" width="13" height="1" fill="#2a4784"/>
<rect x="663" y="94" width="12" height="1" fill="#2a4784"/>
<rect x="676" y="94" width="13" height="1" fill="#2a4784"/>
<rect x="690" y="94" width="12" height="1" fill="#2a4784"/>
<rect x="703" y="94" width="12" height="1" fill="#2a4784"/>
<rect x="716" y="94" width="13" height="1" fill="#2a4784"/>
<rect x="730" y="94" width="12" height="1" fill="#2a4784"/>
<rect x="743" y="94" width="12" height="1" fill="#3e2619"/>
<rect x="756" y="94" width="13" height="1" fill="#2a4784"/>
<rect x="770" y="94" width="12" height="1" fill="#3e2619"/>
<rect x="796" y="94" width="13" height="1" fill="#2a4784"/>
<rect x="36" y="108" width="12" height="1" fill="#2a4784"/>
<rect x="62" y="108" width="13" height="1" fill="#3e2619"/>
<rect x="76" y="108" width="12" height="1" fill="#2a4784"/>
<rect x="89" y="108" width="13" height="1" fill="#2a4784"/>
<rect x="223" y="108" width="12" height="1" fill="#2a4784"/>
<rect x="289" y="108" width="13" height="1" fill="#3e2619"/>
<rect x="303" y="108" width="12" height="1" fill="#2a4784"/>
<rect x="316" y="108" width="12" height="1" fill="#2a4784"/>
<rect x="356" y="108" width="12" height="1" fill="#2a4784"/>
<rect x="383" y="108" width="12" height="1" fill="#2a4784"/>
<rect x="423" y="108" width="12" height="1" fill="#2a4784"/>
<rect x="436" y="108" width="12" height="1" fill="#2a4784"/>
<rect x="463" y="108" width="12" height="1" fill="#2a4784"/>
<rect x="476" y="108" width="13" height="1" fill="#2a4784"/>
<rect x="570" y="108" width="12" height="1" fill="#3e2619"/>
<rect x="583" y="108" width="12" height="1" fill="#2a4784"/>
<rect x="596" y="108" width="13" height="1" fill="#2a4784"/>
<rect x="623" y="108" width="12" height="1" fill="#3e2619"/>
<rect x="636" y="108" width="13" height="1" fill="#2a4784"/>
<rect x="676" y="108" width="13" height="1" fill="#2a4784"/>
<rect x="690" y="108" width="12" height="1" fill="#2a4784"/>
<rect x="703" y="108" width="12" height="1" fill="#2a4784"/>
<rect x="716" y="108" width="13" height="1" fill="#2a4784"/>
<rect x="730" y="108" width="12" height="1" fill="#2a4784"/>
<rect x="756" y="108" width="13" height="1" fill="#2a4784"/>
<rect x="770" y="108" width="12" height="1" fill="#3e2619"/>
<rect x="76" y="121" width="12" height="1" fill="#2a4784"/>
<rect x="89" y="121" width="13" height="1" fill="#2a4784"/>
<rect x="223" y="121" width="12" height="1" fill="#2a4784"/>
<rect x="289" y="121" width="13" height="1" fill="#3e2619"/>
<rect x="303" y="121" width="12" height="1" fill="#2a4784"/>
<rect x="316" y="121" width="12" height="1" fill="#2a4784"/>
<rect x="356" y="121" width="12" height="1" fill="#2a4784"/>
<rect x="423" y="121" width="12" height="1" fill="#2a4784"/>
<rect x="436" y="121" width="12" height="1" fill="#2a4784"/>
<rect x="463" y="121" width="12" height="1" fill="#2a4784"/>
<rect x="570" y="121" width="12" height="1" fill="#3e2619"/>
<rect x="583" y="121" width="12" height="1" fill="#2a4784"/>
<rect x="623" y="121" width="12" height="1" fill="#3e2619"/>
<rect x="636" y="121" width="13" height="1" fill="#2a4784"/>
<rect x="676" y="121" width="13" height="1" fill="#2a4784"/>
<rect x="690" y="121" width="12" height="1" fill="#2a4784"/>
<rect x="703" y="121" width="12" height="1" fill="#2a4784"/>
<rect x="716" y="121" width="13" height="1" fill="#2a4784"/>
<rect x="730" y="121" width="12" height="1" fill="#2a4784"/>
<rect x="756" y="121" width="13" height="1" fill="#2a4784"/>
<rect x="770" y="121" width="12" height="1" fill="#3e2619"/>
<rect x="76" y="135" width="12" height="1" fill="#2a4784"/>
<rect x="89" y="135" width="13" height="1" fill="#2a4784"/>
<rect x="289" y="135" width="13" height="1" fill="#3e2619"/>
<rect x="303" y="135" width="12" height="1" fill="#2a4784"/>
<rect x="316" y="135" width="12" height="1" fill="#2a4784"/>
<rect x="463" y="135" width="12" height="1" fill="#2a4784"/>
<rect x="570" y="135" width="12" height="1" fill="#3e2619"/>
<rect x="623" y="135" width="12" height="1" fill="#3e2619"/>
<rect x="636" y="135" width="13" height="1" fill="#2a4784"/>
<rect x="676" y="135" width="13" height="1" fill="#2a4784"/>
<rect x="690" y="135" width="12" height="1" fill="#2a4784"/>
<rect x="716" y="135" width="13" height="1" fill="#2a4784"/>
<rect x="730" y="135" width="12" height="1" fill="#2a4784"/>
<rect x="756" y="135" width="13" height="1" fill="#2a4784"/>
<rect x="770" y="135" width="12" height="1" fill="#3e2619"/>
<rect x="76" y="149" width="12" height="1" fill="#2a4784"/>
<rect x="89" y="149" width="13" height="1" fill="#2a4784"/>
<rect x="289" y="149" width="13" height="1" fill="#3e2619"/>
<rect x="316" y="149" width="12" height="1" fill="#2a4784"/>
<rect x="463" y="149" width="12" height="1" fill="#2a4784"/>
<rect x="623" y="149" width="12" height="1" fill="#3e2619"/>
<rect x="636" y="149" width="13" height="1" fill="#2a4784"/>
<rect x="690" y="149" width="12" height="1" fill="#2a4784"/>
<rect x="716" y="149" width="13" height="1" fill="#2a4784"/>
<rect x="756" y="149" width="13" height="1" fill="#2a4784"/>
<rect x="770" y="149" width="12" height="1" fill="#3e2619"/>
<rect x="76" y="163" width="12" height="1" fill="#2a4784"/>
<rect x="89" y="163" width="13" height="1" fill="#2a4784"/>
<rect x="289" y="163" width="13" height="1" fill="#3e2619"/>
<rect x="316" y="163" width="12" height="1" fill="#2a4784"/>
<rect x="463" y="163" width="12" height="1" fill="#2a4784"/>
<rect x="623" y="163" width="12" height="1" fill="#3e2619"/>
<rect x="636" y="163" width="13" height="1" fill="#2a4784"/>
<rect x="690" y="163" width="12" height="1" fill="#2a4784"/>
<rect x="756" y="163" width="13" height="1" fill="#2a4784"/>
<rect x="76" y="177" width="12" height="1" fill="#2a4784"/>
<rect x="89" y="177" width="13" height="1" fill="#2a4784"/>
<rect x="316" y="177" width="12" height="1" fill="#2a4784"/>
<rect x="463" y="177" width="12" height="1" fill="#2a4784"/>
<rect x="636" y="177" width="13" height="1" fill="#2a4784"/>
<rect x="690" y="177" width="12" height="1" fill="#2a4784"/>
<rect x="76" y="190" width="12" height="1" fill="#2a4784"/>
<rect x="89" y="190" width="13" height="1" fill="#2a4784"/>
<rect x="316" y="190" width="12" height="1" fill="#2a4784"/>
<rect x="636" y="190" width="13" height="1" fill="#2a4784"/>
<rect x="690" y="190" width="12" height="1" fill="#2a4784"/>
<rect x="76" y="204" width="12" height="1" fill="#2a4784"/>
<rect x="89" y="204" width="13" height="1" fill="#2a4784"/>
<rect x="690" y="204" width="12" height="1" fill="#2a4784"/>
<rect x="76" y="218" width="12" height="1" fill="#2a4784"/>
<rect x="89" y="218" width="13" height="1" fill="#2a4784"/>
<rect x="690" y="218" width="12" height="1" fill="#2a4784"/>
<rect x="89" y="232" width="13" height="1" fill="#2a4784"/>
<rect x="48" y="68" width="1" height="12" fill="#0f2656"/>
<rect x="88" y="68" width="1" height="12" fill="#0f2656"/>
<rect x="102" y="68" width="1" height="12" fill="#0f2656"/>
<rect x="115" y="68" width="1" height="12" fill="#0f2656"/>
<rect x="168" y="68" width="1" height="12" fill="#0f2656"/>
<rect x="182" y="68" width="1" height="12" fill="#0f2656"/>
<rect x="195" y="68" width="1" height="12" fill="#0f2656"/>
<rect x="235" y="68" width="1" height="12" fill="#0f2656"/>
<rect x="275" y="68" width="1" height="12" fill="#0f2656"/>
<rect x="315" y="68" width="1" height="12" fill="#0f2656"/>
<rect x="328" y="68" width="1" height="12" fill="#0f2656"/>
<rect x="342" y="68" width="1" height="12" fill="#0f2656"/>
<rect x="355" y="68" width="1" height="12" fill="#0f2656"/>
<rect x="422" y="68" width="1" height="12" fill="#0f2656"/>
<rect x="435" y="68" width="1" height="12" fill="#0f2656"/>
<rect x="448" y="68" width="1" height="12" fill="#0f2656"/>
<rect x="462" y="68" width="1" height="12" fill="#0f2656"/>
<rect x="475" y="68" width="1" height="12" fill="#0f2656"/>
<rect x="489" y="68" width="1" height="12" fill="#0f2656"/>
<rect x="502" y="68" width="1" height="12" fill="#0f2656"/>
<rect x="515" y="68" width="1" height="12" fill="#0f2656"/>
<rect x="529" y="68" width="1" height="12" fill="#0f2656"/>
<rect x="542" y="68" width="1" height="12" fill="#0f2656"/>
<rect x="595" y="68" width="1" height="12" fill="#0f2656"/>
<rect x="609" y="68" width="1" height="12" fill="#0f2656"/>
<rect x="649" y="68" width="1" height="12" fill="#0f2656"/>
<rect x="662" y="68" width="1" height="12" fill="#0f2656"/>
<rect x="675" y="68" width="1" height="12" fill="#0f2656"/>
<rect x="689" y="68" width="1" height="12" fill="#0f2656"/>
<rect x="702" y="68" width="1" height="12" fill="#0f2656"/>
<rect x="715" y="68" width="1" height="12" fill="#0f2656"/>
<rect x="729" y="68" width="1" height="12" fill="#0f2656"/>
<rect x="88" y="81" width="1" height="13" fill="#0f2656"/>
<rect x="102" y="81" width="1" height="13" fill="#0f2656"/>
<rect x="115" y="81" width="1" height="13" fill="#0f2656"/>
<rect x="235" y="81" width="1" height="13" fill="#0f2656"/>
<rect x="315" y="81" width="1" height="13" fill="#0f2656"/>
<rect x="422" y="81" width="1" height="13" fill="#0f2656"/>
<rect x="435" y="81" width="1" height="13" fill="#0f2656"/>
<rect x="475" y="81" width="1" height="13" fill="#0f2656"/>
<rect x="489" y="81" width="1" height="13" fill="#0f2656"/>
<rect x="502" y="81" width="1" height="13" fill="#0f2656"/>
<rect x="515" y="81" width="1" height="13" fill="#0f2656"/>
<rect x="529" y="81" width="1" height="13" fill="#0f2656"/>
<rect x="542" y="81" width="1" height="13" fill="#0f2656"/>
<rect x="595" y="81" width="1" height="13" fill="#0f2656"/>
<rect x="675" y="81" width="1" height="13" fill="#0f2656"/>
<rect x="689" y="81" width="1" height="13" fill="#0f2656"/>
<rect x="702" y="81" width="1" height="13" fill="#0f2656"/>
<rect x="715" y="81" width="1" height="13" fill="#0f2656"/>
<rect x="729" y="81" width="1" height="13" fill="#0f2656"/>
<rect x="88" y="95" width="1" height="13" fill="#0f2656"/>
<rect x="315" y="95" width="1" height="13" fill="#0f2656"/>
<rect x="422" y="95" width="1" height="13" fill="#0f2656"/>
<rect x="435" y="95" width="1" height="13" fill="#0f2656"/>
<rect x="475" y="95" width="1" height="13" fill="#0f2656"/>
<rect x="542" y="95" width="1" height="13" fill="#0f2656"/>
<rect x="595" y="95" width="1" height="13" fill="#0f2656"/>
<rect x="675" y="95" width="1" height="13" fill="#0f2656"/>
<rect x="689" y="95" width="1" height="13" fill="#0f2656"/>
<rect x="702" y="95" width="1" height="13" fill="#0f2656"/>
<rect x="715" y="95" width="1" height="13" fill="#0f2656"/>
<rect x="729" y="95" width="1" height="13" fill="#0f2656"/>
<rect x="88" y="109" width="1" height="12" fill="#0f2656"/>
<rect x="315" y="109" width="1" height="12" fill="#0f2656"/>
<rect x="435" y="109" width="1" height="12" fill="#0f2656"/>
<rect x="475" y="109" width="1" height="12" fill="#0f2656"/>
<rect x="595" y="109" width="1" height="12" fill="#0f2656"/>
<rect x="689" y="109" width="1" height="12" fill="#0f2656"/>
<rect x="702" y="109" width="1" height="12" fill="#0f2656"/>
<rect x="715" y="109" width="1" height="12" fill="#0f2656"/>
<rect x="729" y="109" width="1" height="12" fill="#0f2656"/>
<rect x="88" y="122" width="1" height="13" fill="#0f2656"/>
<rect x="315" y="122" width="1" height="13" fill="#0f2656"/>
<rect x="435" y="122" width="1" height="13" fill="#0f2656"/>
<rect x="689" y="122" width="1" height="13" fill="#0f2656"/>
<rect x="702" y="122" width="1" height="13" fill="#0f2656"/>
<rect x="715" y="122" width="1" height="13" fill="#0f2656"/>
<rect x="729" y="122" width="1" height="13" fill="#0f2656"/>
<rect x="88" y="136" width="1" height="13" fill="#0f2656"/>
<rect x="315" y="136" width="1" height="13" fill="#0f2656"/>
<rect x="689" y="136" width="1" height="13" fill="#0f2656"/>
<rect x="729" y="136" width="1" height="13" fill="#0f2656"/>
<rect x="88" y="150" width="1" height="13" fill="#0f2656"/>
<rect x="88" y="164" width="1" height="13" fill="#0f2656"/>
<rect x="88" y="178" width="1" height="12" fill="#0f2656"/>
<rect x="88" y="191" width="1" height="13" fill="#0f2656"/>
<rect x="88" y="205" width="1" height="13" fill="#0f2656"/>
<rect x="88" y="219" width="1" height="13" fill="#0f2656"/>
<text x="15.27" y="50.5" class="bt" textLength="7.5" lengthAdjust="spacingAndGlyphs">10</text>
<text x="15.27" y="63" class="nt">00</text>
<text x="28.62" y="50.5" class="bt" textLength="3.75" lengthAdjust="spacingAndGlyphs">8</text>
<text x="28.62" y="63" class="nt">01</text>
<text x="41.96" y="50.5" class="bt" textLength="3.75" lengthAdjust="spacingAndGlyphs">7</text>
<text x="41.96" y="63" class="nt">02</text>
<text x="55.31" y="50.5" class="bt" textLength="3.75" lengthAdjust="spacingAndGlyphs">7</text>
<text x="55.31" y="63" class="nt">03</text>
<text x="68.65" y="50.5" class="bt" textLength="3.75" lengthAdjust="spacingAndGlyphs">7</text>
<text x="68.65" y="63" class="nt">04</text>
<text x="82" y="50.5" class="bt" textLength="3.75" lengthAdjust="spacingAndGlyphs">4</text>
<text x="82" y="63" class="nt">05</text>
<text x="95.34" y="50.5" class="bt" textLength="3.75" lengthAdjust="spacingAndGlyphs">7</text>
<text x="95.34" y="63" class="nt">06</text>
<text x="108.69" y="50.5" class="bt" textLength="3.75" lengthAdjust="spacingAndGlyphs">7</text>
<text x="108.69" y="63" class="nt">07</text>
<text x="122.03" y="50.5" class="bt" textLength="3.75" lengthAdjust="spacingAndGlyphs">9</text>
<text x="122.03" y="63" class="nt">08</text>
<text x="135.38" y="50.5" class="bt" textLength="7.5" lengthAdjust="spacingAndGlyphs">11</text>
<text x="135.38" y="63" class="nt">09</text>
<text x="148.72" y="50.5" class="bt" textLength="7.5" lengthAdjust="spacingAndGlyphs">16</text>
<text x="148.72" y="63" class="nt">10</text>
<text x="162.07" y="50.5" class="bt" textLength="3.75" lengthAdjust="spacingAndGlyphs">6</text>
<text x="162.07" y="63" class="nt">11</text>
<text x="175.41" y="50.5" class="bt" textLength="7.5" lengthAdjust="spacingAndGlyphs">15</text>
<text x="175.41" y="63" class="nt">12</text>
<text x="188.76" y="50.5" class="bt" textLength="3.75" lengthAdjust="spacingAndGlyphs">5</text>
<text x="188.76" y="63" class="nt">13</text>
<text x="202.1" y="50.5" class="bt" textLength="3.75" lengthAdjust="spacingAndGlyphs">8</text>
<text x="202.1" y="63" class="nt">14</text>
<text x="215.45" y="50.5" class="bt" textLength="3.75" lengthAdjust="spacingAndGlyphs">9</text>
<text x="215.45" y="63" class="nt">15</text>
<text x="228.79" y="50.5" class="bt" textLength="3.75" lengthAdjust="spacingAndGlyphs">3</text>
<text x="228.79" y="63" class="nt">16</text>
<text x="242.14" y="50.5" class="bt" textLength="3.75" lengthAdjust="spacingAndGlyphs">7</text>
<text x="242.14" y="63" class="nt">17</text>
<text x="255.48" y="50.5" class="bt" textLength="3.75" lengthAdjust="spacingAndGlyphs">7</text>
<text x="255.48" y="63" class="nt">18</text>
<text x="268.83" y="50.5" class="bt" textLength="7.5" lengthAdjust="spacingAndGlyphs">10</text>
<text x="268.83" y="63" class="nt">19</text>
<text x="282.17" y="50.5" class="bt" textLength="3.75" lengthAdjust="spacingAndGlyphs">6</text>
<text x="282.17" y="63" class="nt">20</text>
<text x="295.52" y="50.5" class="bt" textLength="3.75" lengthAdjust="spacingAndGlyphs">7</text>
<text x="295.52" y="63" class="nt">21</text>
<text x="308.86" y="50.5" class="bt" textLength="7.5" lengthAdjust="spacingAndGlyphs">14</text>
<text x="308.86" y="63" class="nt">22</text>
<text x="322.21" y="50.5" class="bt" textLength="3.75" lengthAdjust="spacingAndGlyphs">3</text>
<text x="322.21" y="63" class="nt">23</text>
<text x="335.55" y="50.5" class="bt" textLength="3.75" lengthAdjust="spacingAndGlyphs">7</text>
<text x="335.55" y="63" class="nt">24</text>
<text x="348.9" y="50.5" class="bt" textLength="7.5" lengthAdjust="spacingAndGlyphs">14</text>
<text x="348.9" y="63" class="nt">25</text>
<text x="362.24" y="50.5" class="bt" textLength="3.75" lengthAdjust="spacingAndGlyphs">8</text>
<text x="362.24" y="63" class="nt">26</text>
<text x="375.59" y="50.5" class="bt" textLength="3.75" lengthAdjust="spacingAndGlyphs">5</text>
<text x="375.59" y="63" class="nt">27</text>
<text x="388.93" y="50.5" class="bt" textLength="3.75" lengthAdjust="spacingAndGlyphs">6</text>
<text x="388.93" y="63" class="nt">28</text>
<text x="402.28" y="50.5" class="bt" textLength="3.75" lengthAdjust="spacingAndGlyphs">7</text>
<text x="402.28" y="63" class="nt">29</text>
<text x="415.62" y="50.5" class="bt" textLength="7.5" lengthAdjust="spacingAndGlyphs">13</text>
<text x="415.62" y="63" class="nt">30</text>
<text x="428.97" y="50.5" class="bt" textLength="3.75" lengthAdjust="spacingAndGlyphs">5</text>
<text x="428.97" y="63" class="nt">31</text>
<text x="442.31" y="50.5" class="bt" textLength="7.5" lengthAdjust="spacingAndGlyphs">13</text>
<text x="442.31" y="63" class="nt">32</text>
<text x="455.66" y="50.5" class="bt" textLength="3.75" lengthAdjust="spacingAndGlyphs">6</text>
<text x="455.66" y="63" class="nt">33</text>
<text x="469" y="50.5" class="bt" textLength="3.75" lengthAdjust="spacingAndGlyphs">6</text>
<text x="469" y="63" class="nt">34</text>
<text x="482.35" y="50.5" class="bt" textLength="3.75" lengthAdjust="spacingAndGlyphs">5</text>
<text x="482.35" y="63" class="nt">35</text>
<text x="495.69" y="50.5" class="bt" textLength="3.75" lengthAdjust="spacingAndGlyphs">4</text>
<text x="495.69" y="63" class="nt">36</text>
<text x="509.04" y="50.5" class="bt" textLength="3.75" lengthAdjust="spacingAndGlyphs">6</text>
<text x="509.04" y="63" class="nt">37</text>
<text x="522.38" y="50.5" class="bt" textLength="3.75" lengthAdjust="spacingAndGlyphs">6</text>
<text x="522.38" y="63" class="nt">38</text>
<text x="535.73" y="50.5" class="bt" textLength="3.75" lengthAdjust="spacingAndGlyphs">8</text>
<text x="535.73" y="63" class="nt">39</text>
<text x="549.07" y="50.5" class="bt" textLength="7.5" lengthAdjust="spacingAndGlyphs">10</text>
<text x="549.07" y="63" class="nt">40</text>
<text x="562.42" y="50.5" class="bt" textLength="7.5" lengthAdjust="spacingAndGlyphs">10</text>
<text x="562.42" y="63" class="nt">41</text>
<text x="575.76" y="50.5" class="bt" textLength="3.75" lengthAdjust="spacingAndGlyphs">4</text>
<text x="575.76" y="63" class="nt">42</text>
<text x="589.11" y="50.5" class="bt" textLength="3.75" lengthAdjust="spacingAndGlyphs">8</text>
<text x="589.11" y="63" class="nt">43</text>
<text x="602.45" y="50.5" class="bt" textLength="3.75" lengthAdjust="spacingAndGlyphs">8</text>
<text x="602.45" y="63" class="nt">44</text>
<text x="615.8" y="50.5" class="bt" textLength="7.5" lengthAdjust="spacingAndGlyphs">12</text>
<text x="615.8" y="63" class="nt">45</text>
<text x="629.14" y="50.5" class="bt" textLength="3.75" lengthAdjust="spacingAndGlyphs">5</text>
<text x="629.14" y="63" class="nt">46</text>
<text x="642.49" y="50.5" class="bt" textLength="3.75" lengthAdjust="spacingAndGlyphs">6</text>
<text x="642.49" y="63" class="nt">47</text>
<text x="655.83" y="50.5" class="bt" textLength="3.75" lengthAdjust="spacingAndGlyphs">9</text>
<text x="655.83" y="63" class="nt">48</text>
<text x="669.18" y="50.5" class="bt" textLength="3.75" lengthAdjust="spacingAndGlyphs">9</text>
<text x="669.18" y="63" class="nt">49</text>
<text x="682.52" y="50.5" class="bt" textLength="3.75" lengthAdjust="spacingAndGlyphs">6</text>
<text x="682.52" y="63" class="nt">50</text>
<text x="695.87" y="50.5" class="bt" textLength="3.75" lengthAdjust="spacingAndGlyphs">3</text>
<text x="695.87" y="63" class="nt">51</text>
<text x="709.21" y="50.5" class="bt" textLength="7.5" lengthAdjust="spacingAndGlyphs">16</text>
<text x="709.21" y="63" class="nt">52</text>
<text x="722.56" y="50.5" class="bt" textLength="3.75" lengthAdjust="spacingAndGlyphs">6</text>
<text x="722.56" y="63" class="nt">53</text>
<text x="735.9" y="50.5" class="bt" textLength="3.75" lengthAdjust="spacingAndGlyphs">3</text>
<text x="735.9" y="63" class="nt">54</text>
<text x="749.25" y="50.5" class="bt" textLength="3.75" lengthAdjust="spacingAndGlyphs">8</text>
<text x="749.25" y="63" class="nt">55</text>
<text x="762.59" y="50.5" class="bt" textLength="3.75" lengthAdjust="spacingAndGlyphs">7</text>
<text x="762.59" y="63" class="nt">56</text>
<text x="775.94" y="50.5" class="bt" textLength="3.75" lengthAdjust="spacingAndGlyphs">9</text>
<text x="775.94" y="63" class="nt">57</text>
<text x="789.28" y="50.5" class="bt" textLength="3.75" lengthAdjust="spacingAndGlyphs">8</text>
<text x="789.28" y="63" class="nt">58</text>
<text x="802.63" y="50.5" class="bt" textLength="3.75" lengthAdjust="spacingAndGlyphs">8</text>
<text x="802.63" y="63" class="nt">59</text>
<text x="2.1" y="77.6" class="lt">5</text>
<path d="M28.82 70.79h1.05v6.2h-1.05v-4.7l-1.45 0.95v-0.95z" class="c1"/>
<path d="M68.85 70.79h1.05v6.2h-1.05v-4.7l-1.45 0.95v-0.95z" class="c1"/>
<path d="M135.58 70.79h1.05v6.2h-1.05v-4.7l-1.45 0.95v-0.95z" class="c1"/>
<path d="M148.92 70.79h1.05v6.2h-1.05v-4.7l-1.45 0.95v-0.95z" class="c1"/>
<text x="215.45" y="76.9" class="ct">2</text>
<text x="255.48" y="76.9" class="ct">2</text>
<path d="M295.72 70.79h1.05v6.2h-1.05v-4.7l-1.45 0.95v-0.95z" class="c1"/>
<path d="M375.79 70.79h1.05v6.2h-1.05v-4.7l-1.45 0.95v-0.95z" class="c1"/>
<path d="M402.48 70.79h1.05v6.2h-1.05v-4.7l-1.45 0.95v-0.95z" class="c1"/>
<path d="M562.62 70.79h1.05v6.2h-1.05v-4.7l-1.45 0.95v-0.95z" class="c1"/>
<path d="M575.96 70.79h1.05v6.2h-1.05v-4.7l-1.45 0.95v-0.95z" class="c1"/>
<path d="M629.34 70.79h1.05v6.2h-1.05v-4.7l-1.45 0.95v-0.95z" class="c1"/>
<path d="M749.45 70.79h1.05v6.2h-1.05v-4.7l-1.45 0.95v-0.95z" class="c1"/>
<text x="775.94" y="76.9" class="ct">2</text>
<path d="M789.48 70.79h1.05v6.2h-1.05v-4.7l-1.45 0.95v-0.95z" class="c1"/>
<text x="2.1" y="90.6" class="lt">4</text>
<path d="M55.51 84.56h1.05v6.2h-1.05v-4.7l-1.45 0.95v-0.95z" class="c1"/>
<path d="M135.58 84.56h1.05v6.2h-1.05v-4.7l-1.45 0.95v-0.95z" class="c1"/>
<path d="M148.92 84.56h1.05v6.2h-1.05v-4.7l-1.45 0.95v-0.95z" class="c1"/>
<path d="M175.61 84.56h1.05v6.2h-1.05v-4.7l-1.45 0.95v-0.95z" class="c1"/>
<path d="M188.96 84.56h1.05v6.2h-1.05v-4.7l-1.45 0.95v-0.95z" class="c1"/>
<path d="M202.3 84.56h1.05v6.2h-1.05v-4.7l-1.45 0.95v-0.95z" class="c1"/>
<path d="M215.65 84.56h1.05v6.2h-1.05v-4.7l-1.45 0.95v-0.95z" class="c1"/>
<path d="M282.37 84.56h1.05v6.2h-1.05v-4.7l-1.45 0.95v-0.95z" class="c1"/>
<path d="M335.75 84.56h1.05v6.2h-1.05v-4.7l-1.45 0.95v-0.95z" class="c1"/>
<text x="348.9" y="90.67" class="ct">2</text>
<path d="M455.86 84.56h1.05v6.2h-1.05v-4.7l-1.45 0.95v-0.95z" class="c1"/>
<path d="M562.62 84.56h1.05v6.2h-1.05v-4.7l-1.45 0.95v-0.95z" class="c1"/>
<path d="M616 84.56h1.05v6.2h-1.05v-4.7l-1.45 0.95v-0.95z" class="c1"/>
<text x="655.83" y="90.67" class="ct">2</text>
<text x="2.1" y="104.6" class="lt">3</text>
<path d="M15.47 98.33h1.05v6.2h-1.05v-4.7l-1.45 0.95v-0.95z" class="c1"/>
<path d="M55.51 98.33h1.05v6.2h-1.05v-4.7l-1.45 0.95v-0.95z" class="c1"/>
<path d="M108.89 98.33h1.05v6.2h-1.05v-4.7l-1.45 0.95v-0.95z" class="c1"/>
<path d="M122.23 98.33h1.05v6.2h-1.05v-4.7l-1.45 0.95v-0.95z" class="c1"/>
<path d="M162.27 98.33h1.05v6.2h-1.05v-4.7l-1.45 0.95v-0.95z" class="c1"/>
<path d="M175.61 98.33h1.05v6.2h-1.05v-4.7l-1.45 0.95v-0.95z" class="c1"/>
<path d="M188.96 98.33h1.05v6.2h-1.05v-4.7l-1.45 0.95v-0.95z" class="c1"/>
<path d="M242.34 98.33h1.05v6.2h-1.05v-4.7l-1.45 0.95v-0.95z" class="c1"/>
<path d="M255.68 98.33h1.05v6.2h-1.05v-4.7l-1.45 0.95v-0.95z" class="c1"/>
<path d="M375.79 98.33h1.05v6.2h-1.05v-4.7l-1.45 0.95v-0.95z" class="c1"/>
<path d="M495.89 98.33h1.05v6.2h-1.05v-4.7l-1.45 0.95v-0.95z" class="c1"/>
<path d="M509.24 98.33h1.05v6.2h-1.05v-4.7l-1.45 0.95v-0.95z" class="c1"/>
<path d="M522.58 98.33h1.05v6.2h-1.05v-4.7l-1.45 0.95v-0.95z" class="c1"/>
<path d="M656.03 98.33h1.05v6.2h-1.05v-4.7l-1.45 0.95v-0.95z" class="c1"/>
<path d="M789.48 98.33h1.05v6.2h-1.05v-4.7l-1.45 0.95v-0.95z" class="c1"/>
<text x="2.1" y="118.6" class="lt">2</text>
<path d="M15.47 112.09h1.05v6.2h-1.05v-4.7l-1.45 0.95v-0.95z" class="c1"/>
<text x="28.62" y="118.21" class="ct">2</text>
<path d="M175.61 112.09h1.05v6.2h-1.05v-4.7l-1.45 0.95v-0.95z" class="c1"/>
<path d="M188.96 112.09h1.05v6.2h-1.05v-4.7l-1.45 0.95v-0.95z" class="c1"/>
<text x="268.83" y="118.21" class="ct">2</text>
<path d="M402.48 112.09h1.05v6.2h-1.05v-4.7l-1.45 0.95v-0.95z" class="c1"/>
<path d="M415.82 112.09h1.05v6.2h-1.05v-4.7l-1.45 0.95v-0.95z" class="c1"/>
<path d="M535.93 112.09h1.05v6.2h-1.05v-4.7l-1.45 0.95v-0.95z" class="c1"/>
<path d="M549.27 112.09h1.05v6.2h-1.05v-4.7l-1.45 0.95v-0.95z" class="c1"/>
<path d="M562.62 112.09h1.05v6.2h-1.05v-4.7l-1.45 0.95v-0.95z" class="c1"/>
<path d="M616 112.09h1.05v6.2h-1.05v-4.7l-1.45 0.95v-0.95z" class="c1"/>
<path d="M669.38 112.09h1.05v6.2h-1.05v-4.7l-1.45 0.95v-0.95z" class="c1"/>
<path d="M749.45 112.09h1.05v6.2h-1.05v-4.7l-1.45 0.95v-0.95z" class="c1"/>
<text x="802.63" y="118.21" class="ct">2</text>
<text x="2.1" y="131.6" class="lt">1</text>
<path d="M42.16 125.87h1.05v6.2h-1.05v-4.7l-1.45 0.95v-0.95z" class="c1"/>
<path d="M68.85 125.87h1.05v6.2h-1.05v-4.7l-1.45 0.95v-0.95z" class="c1"/>
<path d="M135.58 125.87h1.05v6.2h-1.05v-4.7l-1.45 0.95v-0.95z" class="c1"/>
<path d="M148.92 125.87h1.05v6.2h-1.05v-4.7l-1.45 0.95v-0.95z" class="c1"/>
<path d="M215.65 125.87h1.05v6.2h-1.05v-4.7l-1.45 0.95v-0.95z" class="c1"/>
<path d="M242.34 125.87h1.05v6.2h-1.05v-4.7l-1.45 0.95v-0.95z" class="c1"/>
<path d="M335.75 125.87h1.05v6.2h-1.05v-4.7l-1.45 0.95v-0.95z" class="c1"/>
<path d="M375.79 125.87h1.05v6.2h-1.05v-4.7l-1.45 0.95v-0.95z" class="c1"/>
<path d="M389.13 125.87h1.05v6.2h-1.05v-4.7l-1.45 0.95v-0.95z" class="c1"/>
<path d="M455.86 125.87h1.05v6.2h-1.05v-4.7l-1.45 0.95v-0.95z" class="c1"/>
<path d="M482.55 125.87h1.05v6.2h-1.05v-4.7l-1.45 0.95v-0.95z" class="c1"/>
<path d="M509.24 125.87h1.05v6.2h-1.05v-4.7l-1.45 0.95v-0.95z" class="c1"/>
<path d="M535.93 125.87h1.05v6.2h-1.05v-4.7l-1.45 0.95v-0.95z" class="c1"/>
<path d="M602.65 125.87h1.05v6.2h-1.05v-4.7l-1.45 0.95v-0.95z" class="c1"/>
<path d="M669.38 125.87h1.05v6.2h-1.05v-4.7l-1.45 0.95v-0.95z" class="c1"/>
<text x="2.1" y="145.6" class="lt">0</text>
<path d="M122.23 139.63h1.05v6.2h-1.05v-4.7l-1.45 0.95v-0.95z" class="c1"/>
<text x="175.41" y="145.75" class="ct">2</text>
<path d="M228.99 139.63h1.05v6.2h-1.05v-4.7l-1.45 0.95v-0.95z" class="c1"/>
<path d="M349.1 139.63h1.05v6.2h-1.05v-4.7l-1.45 0.95v-0.95z" class="c1"/>
<path d="M362.44 139.63h1.05v6.2h-1.05v-4.7l-1.45 0.95v-0.95z" class="c1"/>
<path d="M389.13 139.63h1.05v6.2h-1.05v-4.7l-1.45 0.95v-0.95z" class="c1"/>
<path d="M402.48 139.63h1.05v6.2h-1.05v-4.7l-1.45 0.95v-0.95z" class="c1"/>
<path d="M415.82 139.63h1.05v6.2h-1.05v-4.7l-1.45 0.95v-0.95z" class="c1"/>
<path d="M429.17 139.63h1.05v6.2h-1.05v-4.7l-1.45 0.95v-0.95z" class="c1"/>
<text x="442.31" y="145.75" class="ct">2</text>
<path d="M522.58 139.63h1.05v6.2h-1.05v-4.7l-1.45 0.95v-0.95z" class="c1"/>
<path d="M589.31 139.63h1.05v6.2h-1.05v-4.7l-1.45 0.95v-0.95z" class="c1"/>
<path d="M602.65 139.63h1.05v6.2h-1.05v-4.7l-1.45 0.95v-0.95z" class="c1"/>
<path d="M656.03 139.63h1.05v6.2h-1.05v-4.7l-1.45 0.95v-0.95z" class="c1"/>
<text x="709.21" y="145.75" class="ct">2</text>
<text x="2.1" y="159.6" class="lt">9</text>
<path d="M15.47 153.41h1.05v6.2h-1.05v-4.7l-1.45 0.95v-0.95z" class="c1"/>
<path d="M55.51 153.41h1.05v6.2h-1.05v-4.7l-1.45 0.95v-0.95z" class="c1"/>
<path d="M108.89 153.41h1.05v6.2h-1.05v-4.7l-1.45 0.95v-0.95z" class="c1"/>
<path d="M135.58 153.41h1.05v6.2h-1.05v-4.7l-1.45 0.95v-0.95z" class="c1"/>
<path d="M148.92 153.41h1.05v6.2h-1.05v-4.7l-1.45 0.95v-0.95z" class="c1"/>
<text x="202.1" y="159.52" class="ct">2</text>
<path d="M282.37 153.41h1.05v6.2h-1.05v-4.7l-1.45 0.95v-0.95z" class="c1"/>
<path d="M309.06 153.41h1.05v6.2h-1.05v-4.7l-1.45 0.95v-0.95z" class="c1"/>
<path d="M375.79 153.41h1.05v6.2h-1.05v-4.7l-1.45 0.95v-0.95z" class="c1"/>
<path d="M415.82 153.41h1.05v6.2h-1.05v-4.7l-1.45 0.95v-0.95z" class="c1"/>
<path d="M429.17 153.41h1.05v6.2h-1.05v-4.7l-1.45 0.95v-0.95z" class="c1"/>
<path d="M535.93 153.41h1.05v6.2h-1.05v-4.7l-1.45 0.95v-0.95z" class="c1"/>
<path d="M575.96 153.41h1.05v6.2h-1.05v-4.7l-1.45 0.95v-0.95z" class="c1"/>
<path d="M589.31 153.41h1.05v6.2h-1.05v-4.7l-1.45 0.95v-0.95z" class="c1"/>
<path d="M669.38 153.41h1.05v6.2h-1.05v-4.7l-1.45 0.95v-0.95z" class="c1"/>
<path d="M682.72 153.41h1.05v6.2h-1.05v-4.7l-1.45 0.95v-0.95z" class="c1"/>
<path d="M709.41 153.41h1.05v6.2h-1.05v-4.7l-1.45 0.95v-0.95z" class="c1"/>
<path d="M736.1 153.41h1.05v6.2h-1.05v-4.7l-1.45 0.95v-0.95z" class="c1"/>
<text x="2.1" y="173.6" class="lt">8</text>
<path d="M55.51 167.18h1.05v6.2h-1.05v-4.7l-1.45 0.95v-0.95z" class="c1"/>
<path d="M162.27 167.18h1.05v6.2h-1.05v-4.7l-1.45 0.95v-0.95z" class="c1"/>
<path d="M175.61 167.18h1.05v6.2h-1.05v-4.7l-1.45 0.95v-0.95z" class="c1"/>
<path d="M202.3 167.18h1.05v6.2h-1.05v-4.7l-1.45 0.95v-0.95z" class="c1"/>
<path d="M349.1 167.18h1.05v6.2h-1.05v-4.7l-1.45 0.95v-0.95z" class="c1"/>
<path d="M402.48 167.18h1.05v6.2h-1.05v-4.7l-1.45 0.95v-0.95z" class="c1"/>
<path d="M415.82 167.18h1.05v6.2h-1.05v-4.7l-1.45 0.95v-0.95z" class="c1"/>
<text x="442.31" y="173.29" class="ct">2</text>
<path d="M482.55 167.18h1.05v6.2h-1.05v-4.7l-1.45 0.95v-0.95z" class="c1"/>
<path d="M509.24 167.18h1.05v6.2h-1.05v-4.7l-1.45 0.95v-0.95z" class="c1"/>
<path d="M562.62 167.18h1.05v6.2h-1.05v-4.7l-1.45 0.95v-0.95z" class="c1"/>
<path d="M589.31 167.18h1.05v6.2h-1.05v-4.7l-1.45 0.95v-0.95z" class="c1"/>
<path d="M722.76 167.18h1.05v6.2h-1.05v-4.7l-1.45 0.95v-0.95z" class="c1"/>
<path d="M749.45 167.18h1.05v6.2h-1.05v-4.7l-1.45 0.95v-0.95z" class="c1"/>
<text x="775.94" y="173.29" class="ct">2</text>
<text x="2.1" y="187.6" class="lt">7</text>
<path d="M15.47 180.94h1.05v6.2h-1.05v-4.7l-1.45 0.95v-0.95z" class="c1"/>
<path d="M108.89 180.94h1.05v6.2h-1.05v-4.7l-1.45 0.95v-0.95z" class="c1"/>
<path d="M122.23 180.94h1.05v6.2h-1.05v-4.7l-1.45 0.95v-0.95z" class="c1"/>
<path d="M175.61 180.94h1.05v6.2h-1.05v-4.7l-1.45 0.95v-0.95z" class="c1"/>
<path d="M269.03 180.94h1.05v6.2h-1.05v-4.7l-1.45 0.95v-0.95z" class="c1"/>
<path d="M282.37 180.94h1.05v6.2h-1.05v-4.7l-1.45 0.95v-0.95z" class="c1"/>
<text x="295.52" y="187.06" class="ct">2</text>
<path d="M309.06 180.94h1.05v6.2h-1.05v-4.7l-1.45 0.95v-0.95z" class="c1"/>
<path d="M442.51 180.94h1.05v6.2h-1.05v-4.7l-1.45 0.95v-0.95z" class="c1"/>
<path d="M549.27 180.94h1.05v6.2h-1.05v-4.7l-1.45 0.95v-0.95z" class="c1"/>
<path d="M562.62 180.94h1.05v6.2h-1.05v-4.7l-1.45 0.95v-0.95z" class="c1"/>
<path d="M629.34 180.94h1.05v6.2h-1.05v-4.7l-1.45 0.95v-0.95z" class="c1"/>
<path d="M669.38 180.94h1.05v6.2h-1.05v-4.7l-1.45 0.95v-0.95z" class="c1"/>
<path d="M709.41 180.94h1.05v6.2h-1.05v-4.7l-1.45 0.95v-0.95z" class="c1"/>
<path d="M762.79 180.94h1.05v6.2h-1.05v-4.7l-1.45 0.95v-0.95z" class="c1"/>
<path d="M802.83 180.94h1.05v6.2h-1.05v-4.7l-1.45 0.95v-0.95z" class="c1"/>
<text x="2.1" y="200.6" class="lt">6</text>
<text x="122.03" y="200.83" class="ct">2</text>
<path d="M175.61 194.72h1.05v6.2h-1.05v-4.7l-1.45 0.95v-0.95z" class="c1"/>
<text x="215.45" y="200.83" class="ct">2</text>
<path d="M455.86 194.72h1.05v6.2h-1.05v-4.7l-1.45 0.95v-0.95z" class="c1"/>
<path d="M469.2 194.72h1.05v6.2h-1.05v-4.7l-1.45 0.95v-0.95z" class="c1"/>
<path d="M549.27 194.72h1.05v6.2h-1.05v-4.7l-1.45 0.95v-0.95z" class="c1"/>
<text x="709.21" y="200.83" class="ct">2</text>
<path d="M802.83 194.72h1.05v6.2h-1.05v-4.7l-1.45 0.95v-0.95z" class="c1"/>
<text x="2.1" y="214.6" class="lt">5</text>
<path d="M148.92 208.49h1.05v6.2h-1.05v-4.7l-1.45 0.95v-0.95z" class="c1"/>
<text x="175.41" y="214.6" class="ct">2</text>
<path d="M215.65 208.49h1.05v6.2h-1.05v-4.7l-1.45 0.95v-0.95z" class="c1"/>
<path d="M269.03 208.49h1.05v6.2h-1.05v-4.7l-1.45 0.95v-0.95z" class="c1"/>
<text x="322.21" y="214.6" class="ct">2</text>
<path d="M402.48 208.49h1.05v6.2h-1.05v-4.7l-1.45 0.95v-0.95z" class="c1"/>
<path d="M442.51 208.49h1.05v6.2h-1.05v-4.7l-1.45 0.95v-0.95z" class="c1"/>
<path d="M575.96 208.49h1.05v6.2h-1.05v-4.7l-1.45 0.95v-0.95z" class="c1"/>
<text x="589.11" y="214.6" class="ct">2</text>
<path d="M642.69 208.49h1.05v6.2h-1.05v-4.7l-1.45 0.95v-0.95z" class="c1"/>
<path d="M656.03 208.49h1.05v6.2h-1.05v-4.7l-1.45 0.95v-0.95z" class="c1"/>
<path d="M682.72 208.49h1.05v6.2h-1.05v-4.7l-1.45 0.95v-0.95z" class="c1"/>
<path d="M749.45 208.49h1.05v6.2h-1.05v-4.7l-1.45 0.95v-0.95z" class="c1"/>
<path d="M776.14 208.49h1.05v6.2h-1.05v-4.7l-1.45 0.95v-0.95z" class="c1"/>
<text x="2.1" y="228.6" class="lt">4</text>
<path d="M42.16 222.25h1.05v6.2h-1.05v-4.7l-1.45 0.95v-0.95z" class="c1"/>
<path d="M55.51 222.25h1.05v6.2h-1.05v-4.7l-1.45 0.95v-0.95z" class="c1"/>
<path d="M68.85 222.25h1.05v6.2h-1.05v-4.7l-1.45 0.95v-0.95z" class="c1"/>
<path d="M135.58 222.25h1.05v6.2h-1.05v-4.7l-1.45 0.95v-0.95z" class="c1"/>
<text x="148.72" y="228.37" class="ct">2</text>
<path d="M162.27 222.25h1.05v6.2h-1.05v-4.7l-1.45 0.95v-0.95z" class="c1"/>
<path d="M175.61 222.25h1.05v6.2h-1.05v-4.7l-1.45 0.95v-0.95z" class="c1"/>
<path d="M202.3 222.25h1.05v6.2h-1.05v-4.7l-1.45 0.95v-0.95z" class="c1"/>
<path d="M269.03 222.25h1.05v6.2h-1.05v-4.7l-1.45 0.95v-0.95z" class="c1"/>
<path d="M295.72 222.25h1.05v6.2h-1.05v-4.7l-1.45 0.95v-0.95z" class="c1"/>
<path d="M309.06 222.25h1.05v6.2h-1.05v-4.7l-1.45 0.95v-0.95z" class="c1"/>
<path d="M415.82 222.25h1.05v6.2h-1.05v-4.7l-1.45 0.95v-0.95z" class="c1"/>
<path d="M629.34 222.25h1.05v6.2h-1.05v-4.7l-1.45 0.95v-0.95z" class="c1"/>
<text x="2.1" y="242.6" class="lt">3</text>
<path d="M28.82 236.03h1.05v6.2h-1.05v-4.7l-1.45 0.95v-0.95z" class="c1"/>
<path d="M68.85 236.03h1.05v6.2h-1.05v-4.7l-1.45 0.95v-0.95z" class="c1"/>
<path d="M82.2 236.03h1.05v6.2h-1.05v-4.7l-1.45 0.95v-0.95z" class="c1"/>
<path d="M108.89 236.03h1.05v6.2h-1.05v-4.7l-1.45 0.95v-0.95z" class="c1"/>
<path d="M148.92 236.03h1.05v6.2h-1.05v-4.7l-1.45 0.95v-0.95z" class="c1"/>
<path d="M442.51 236.03h1.05v6.2h-1.05v-4.7l-1.45 0.95v-0.95z" class="c1"/>
<path d="M509.24 236.03h1.05v6.2h-1.05v-4.7l-1.45 0.95v-0.95z" class="c1"/>
<path d="M562.62 236.03h1.05v6.2h-1.05v-4.7l-1.45 0.95v-0.95z" class="c1"/>
<path d="M629.34 236.03h1.05v6.2h-1.05v-4.7l-1.45 0.95v-0.95z" class="c1"/>
<path d="M642.69 236.03h1.05v6.2h-1.05v-4.7l-1.45 0.95v-0.95z" class="c1"/>
<path d="M696.07 236.03h1.05v6.2h-1.05v-4.7l-1.45 0.95v-0.95z" class="c1"/>
<path d="M749.45 236.03h1.05v6.2h-1.05v-4.7l-1.45 0.95v-0.95z" class="c1"/>
<path d="M762.79 236.03h1.05v6.2h-1.05v-4.7l-1.45 0.95v-0.95z" class="c1"/>
<text x="2.1" y="255.6" class="lt">2</text>
<path d="M95.54 249.79h1.05v6.2h-1.05v-4.7l-1.45 0.95v-0.95z" class="c1"/>
<text x="122.03" y="255.91" class="ct">2</text>
<path d="M175.61 249.79h1.05v6.2h-1.05v-4.7l-1.45 0.95v-0.95z" class="c1"/>
<path d="M242.34 249.79h1.05v6.2h-1.05v-4.7l-1.45 0.95v-0.95z" class="c1"/>
<path d="M309.06 249.79h1.05v6.2h-1.05v-4.7l-1.45 0.95v-0.95z" class="c1"/>
<text x="362.24" y="255.91" class="ct">2</text>
<path d="M415.82 249.79h1.05v6.2h-1.05v-4.7l-1.45 0.95v-0.95z" class="c1"/>
<path d="M495.89 249.79h1.05v6.2h-1.05v-4.7l-1.45 0.95v-0.95z" class="c1"/>
<path d="M549.27 249.79h1.05v6.2h-1.05v-4.7l-1.45 0.95v-0.95z" class="c1"/>
<path d="M589.31 249.79h1.05v6.2h-1.05v-4.7l-1.45 0.95v-0.95z" class="c1"/>
<path d="M602.65 249.79h1.05v6.2h-1.05v-4.7l-1.45 0.95v-0.95z" class="c1"/>
<path d="M616 249.79h1.05v6.2h-1.05v-4.7l-1.45 0.95v-0.95z" class="c1"/>
<path d="M749.45 249.79h1.05v6.2h-1.05v-4.7l-1.45 0.95v-0.95z" class="c1"/>
<text x="2.1" y="269.6" class="lt">1</text>
<path d="M15.47 263.56h1.05v6.2h-1.05v-4.7l-1.45 0.95v-0.95z" class="c1"/>
<path d="M28.82 263.56h1.05v6.2h-1.05v-4.7l-1.45 0.95v-0.95z" class="c1"/>
<path d="M42.16 263.56h1.05v6.2h-1.05v-4.7l-1.45 0.95v-0.95z" class="c1"/>
<path d="M95.54 263.56h1.05v6.2h-1.05v-4.7l-1.45 0.95v-0.95z" class="c1"/>
<text x="135.38" y="269.68" class="ct">2</text>
<path d="M255.68 263.56h1.05v6.2h-1.05v-4.7l-1.45 0.95v-0.95z" class="c1"/>
<path d="M389.13 263.56h1.05v6.2h-1.05v-4.7l-1.45 0.95v-0.95z" class="c1"/>
<text x="442.31" y="269.68" class="ct">2</text>
<path d="M509.24 263.56h1.05v6.2h-1.05v-4.7l-1.45 0.95v-0.95z" class="c1"/>
<path d="M535.93 263.56h1.05v6.2h-1.05v-4.7l-1.45 0.95v-0.95z" class="c1"/>
<path d="M616 263.56h1.05v6.2h-1.05v-4.7l-1.45 0.95v-0.95z" class="c1"/>
<path d="M642.69 263.56h1.05v6.2h-1.05v-4.7l-1.45 0.95v-0.95z" class="c1"/>
<path d="M682.72 263.56h1.05v6.2h-1.05v-4.7l-1.45 0.95v-0.95z" class="c1"/>
<path d="M789.48 263.56h1.05v6.2h-1.05v-4.7l-1.45 0.95v-0.95z" class="c1"/>
<text x="2.1" y="283.6" class="lt">0</text>
<path d="M122.23 277.34h1.05v6.2h-1.05v-4.7l-1.45 0.95v-0.95z" class="c1"/>
<path d="M148.92 277.34h1.05v6.2h-1.05v-4.7l-1.45 0.95v-0.95z" class="c1"/>
<path d="M282.37 277.34h1.05v6.2h-1.05v-4.7l-1.45 0.95v-0.95z" class="c1"/>
<text x="308.86" y="283.45" class="ct">2</text>
<path d="M335.75 277.34h1.05v6.2h-1.05v-4.7l-1.45 0.95v-0.95z" class="c1"/>
<path d="M349.1 277.34h1.05v6.2h-1.05v-4.7l-1.45 0.95v-0.95z" class="c1"/>
<path d="M616 277.34h1.05v6.2h-1.05v-4.7l-1.45 0.95v-0.95z" class="c1"/>
<path d="M669.38 277.34h1.05v6.2h-1.05v-4.7l-1.45 0.95v-0.95z" class="c1"/>
<path d="M682.72 277.34h1.05v6.2h-1.05v-4.7l-1.45 0.95v-0.95z" class="c1"/>
<text x="709.21" y="283.45" class="ct">3</text>
<path d="M722.76 277.34h1.05v6.2h-1.05v-4.7l-1.45 0.95v-0.95z" class="c1"/>
<text x="2.1" y="297.6" class="lt">9</text>
<path d="M42.16 291.11h1.05v6.2h-1.05v-4.7l-1.45 0.95v-0.95z" class="c1"/>
<path d="M82.2 291.11h1.05v6.2h-1.05v-4.7l-1.45 0.95v-0.95z" class="c1"/>
<path d="M148.92 291.11h1.05v6.2h-1.05v-4.7l-1.45 0.95v-0.95z" class="c1"/>
<path d="M335.75 291.11h1.05v6.2h-1.05v-4.7l-1.45 0.95v-0.95z" class="c1"/>
<path d="M349.1 291.11h1.05v6.2h-1.05v-4.7l-1.45 0.95v-0.95z" class="c1"/>
<path d="M455.86 291.11h1.05v6.2h-1.05v-4.7l-1.45 0.95v-0.95z" class="c1"/>
<path d="M482.55 291.11h1.05v6.2h-1.05v-4.7l-1.45 0.95v-0.95z" class="c1"/>
<text x="535.73" y="297.22" class="ct">2</text>
<path d="M589.31 291.11h1.05v6.2h-1.05v-4.7l-1.45 0.95v-0.95z" class="c1"/>
<path d="M656.03 291.11h1.05v6.2h-1.05v-4.7l-1.45 0.95v-0.95z" class="c1"/>
<text x="2.1" y="310.6" class="lt">8</text>
<text x="68.65" y="310.99" class="ct">2</text>
<path d="M82.2 304.88h1.05v6.2h-1.05v-4.7l-1.45 0.95v-0.95z" class="c1"/>
<path d="M108.89 304.88h1.05v6.2h-1.05v-4.7l-1.45 0.95v-0.95z" class="c1"/>
<path d="M135.58 304.88h1.05v6.2h-1.05v-4.7l-1.45 0.95v-0.95z" class="c1"/>
<path d="M242.34 304.88h1.05v6.2h-1.05v-4.7l-1.45 0.95v-0.95z" class="c1"/>
<path d="M255.68 304.88h1.05v6.2h-1.05v-4.7l-1.45 0.95v-0.95z" class="c1"/>
<path d="M269.03 304.88h1.05v6.2h-1.05v-4.7l-1.45 0.95v-0.95z" class="c1"/>
<text x="308.86" y="310.99" class="ct">4</text>
<path d="M349.1 304.88h1.05v6.2h-1.05v-4.7l-1.45 0.95v-0.95z" class="c1"/>
<path d="M469.2 304.88h1.05v6.2h-1.05v-4.7l-1.45 0.95v-0.95z" class="c1"/>
<path d="M535.93 304.88h1.05v6.2h-1.05v-4.7l-1.45 0.95v-0.95z" class="c1"/>
<path d="M642.69 304.88h1.05v6.2h-1.05v-4.7l-1.45 0.95v-0.95z" class="c1"/>
<path d="M722.76 304.88h1.05v6.2h-1.05v-4.7l-1.45 0.95v-0.95z" class="c1"/>
<text x="2.1" y="324.6" class="lt">7</text>
<path d="M148.92 318.64h1.05v6.2h-1.05v-4.7l-1.45 0.95v-0.95z" class="c1"/>
<text x="162.07" y="324.76" class="ct">2</text>
<path d="M322.41 318.64h1.05v6.2h-1.05v-4.7l-1.45 0.95v-0.95z" class="c1"/>
<path d="M429.17 318.64h1.05v6.2h-1.05v-4.7l-1.45 0.95v-0.95z" class="c1"/>
<path d="M442.51 318.64h1.05v6.2h-1.05v-4.7l-1.45 0.95v-0.95z" class="c1"/>
<path d="M522.58 318.64h1.05v6.2h-1.05v-4.7l-1.45 0.95v-0.95z" class="c1"/>
<path d="M549.27 318.64h1.05v6.2h-1.05v-4.7l-1.45 0.95v-0.95z" class="c1"/>
<path d="M562.62 318.64h1.05v6.2h-1.05v-4.7l-1.45 0.95v-0.95z" class="c1"/>
<text x="615.8" y="324.76" class="ct">2</text>
<path d="M669.38 318.64h1.05v6.2h-1.05v-4.7l-1.45 0.95v-0.95z" class="c1"/>
<text x="735.9" y="324.76" class="ct">2</text>
<text x="2.1" y="338.6" class="lt">6</text>
<path d="M15.47 332.41h1.05v6.2h-1.05v-4.7l-1.45 0.95v-0.95z" class="c1"/>
<text x="95.34" y="338.53" class="ct">2</text>
<path d="M135.58 332.41h1.05v6.2h-1.05v-4.7l-1.45 0.95v-0.95z" class="c1"/>
<path d="M335.75 332.41h1.05v6.2h-1.05v-4.7l-1.45 0.95v-0.95z" class="c1"/>
<text x="348.9" y="338.53" class="ct">2</text>
<path d="M415.82 332.41h1.05v6.2h-1.05v-4.7l-1.45 0.95v-0.95z" class="c1"/>
<path d="M469.2 332.41h1.05v6.2h-1.05v-4.7l-1.45 0.95v-0.95z" class="c1"/>
<path d="M522.58 332.41h1.05v6.2h-1.05v-4.7l-1.45 0.95v-0.95z" class="c1"/>
<path d="M575.96 332.41h1.05v6.2h-1.05v-4.7l-1.45 0.95v-0.95z" class="c1"/>
<text x="602.45" y="338.53" class="ct">2</text>
<path d="M656.03 332.41h1.05v6.2h-1.05v-4.7l-1.45 0.95v-0.95z" class="c1"/>
<path d="M696.07 332.41h1.05v6.2h-1.05v-4.7l-1.45 0.95v-0.95z" class="c1"/>
<path d="M709.41 332.41h1.05v6.2h-1.05v-4.7l-1.45 0.95v-0.95z" class="c1"/>
<text x="2.1" y="352.6" class="lt">5</text>
<path d="M135.58 346.18h1.05v6.2h-1.05v-4.7l-1.45 0.95v-0.95z" class="c1"/>
<path d="M148.92 346.18h1.05v6.2h-1.05v-4.7l-1.45 0.95v-0.95z" class="c1"/>
<text x="175.41" y="352.3" class="ct">2</text>
<path d="M228.99 346.18h1.05v6.2h-1.05v-4.7l-1.45 0.95v-0.95z" class="c1"/>
<path d="M242.34 346.18h1.05v6.2h-1.05v-4.7l-1.45 0.95v-0.95z" class="c1"/>
<path d="M295.72 346.18h1.05v6.2h-1.05v-4.7l-1.45 0.95v-0.95z" class="c1"/>
<path d="M349.1 346.18h1.05v6.2h-1.05v-4.7l-1.45 0.95v-0.95z" class="c1"/>
<path d="M362.44 346.18h1.05v6.2h-1.05v-4.7l-1.45 0.95v-0.95z" class="c1"/>
<path d="M402.48 346.18h1.05v6.2h-1.05v-4.7l-1.45 0.95v-0.95z" class="c1"/>
<path d="M415.82 346.18h1.05v6.2h-1.05v-4.7l-1.45 0.95v-0.95z" class="c1"/>
<path d="M429.17 346.18h1.05v6.2h-1.05v-4.7l-1.45 0.95v-0.95z" class="c1"/>
<path d="M455.86 346.18h1.05v6.2h-1.05v-4.7l-1.45 0.95v-0.95z" class="c1"/>
<path d="M495.89 346.18h1.05v6.2h-1.05v-4.7l-1.45 0.95v-0.95z" class="c1"/>
<path d="M549.27 346.18h1.05v6.2h-1.05v-4.7l-1.45 0.95v-0.95z" class="c1"/>
<text x="709.21" y="352.3" class="ct">2</text>
<path d="M722.76 346.18h1.05v6.2h-1.05v-4.7l-1.45 0.95v-0.95z" class="c1"/>
<text x="2.1" y="366.6" class="lt">4</text>
<path d="M55.51 359.96h1.05v6.2h-1.05v-4.7l-1.45 0.95v-0.95z" class="c1"/>
<path d="M148.92 359.96h1.05v6.2h-1.05v-4.7l-1.45 0.95v-0.95z" class="c1"/>
<path d="M188.96 359.96h1.05v6.2h-1.05v-4.7l-1.45 0.95v-0.95z" class="c1"/>
<path d="M202.3 359.96h1.05v6.2h-1.05v-4.7l-1.45 0.95v-0.95z" class="c1"/>
<path d="M228.99 359.96h1.05v6.2h-1.05v-4.7l-1.45 0.95v-0.95z" class="c1"/>
<path d="M255.68 359.96h1.05v6.2h-1.05v-4.7l-1.45 0.95v-0.95z" class="c1"/>
<path d="M349.1 359.96h1.05v6.2h-1.05v-4.7l-1.45 0.95v-0.95z" class="c1"/>
<path d="M362.44 359.96h1.05v6.2h-1.05v-4.7l-1.45 0.95v-0.95z" class="c1"/>
<path d="M389.13 359.96h1.05v6.2h-1.05v-4.7l-1.45 0.95v-0.95z" class="c1"/>
<path d="M429.17 359.96h1.05v6.2h-1.05v-4.7l-1.45 0.95v-0.95z" class="c1"/>
<path d="M469.2 359.96h1.05v6.2h-1.05v-4.7l-1.45 0.95v-0.95z" class="c1"/>
<path d="M522.58 359.96h1.05v6.2h-1.05v-4.7l-1.45 0.95v-0.95z" class="c1"/>
<text x="615.8" y="366.07" class="ct">2</text>
<text x="655.83" y="366.07" class="ct">2</text>
<path d="M789.48 359.96h1.05v6.2h-1.05v-4.7l-1.45 0.95v-0.95z" class="c1"/>
<text x="2.1" y="379.6" class="lt">3</text>
<path d="M15.47 373.73h1.05v6.2h-1.05v-4.7l-1.45 0.95v-0.95z" class="c1"/>
<path d="M42.16 373.73h1.05v6.2h-1.05v-4.7l-1.45 0.95v-0.95z" class="c1"/>
<path d="M95.54 373.73h1.05v6.2h-1.05v-4.7l-1.45 0.95v-0.95z" class="c1"/>
<path d="M108.89 373.73h1.05v6.2h-1.05v-4.7l-1.45 0.95v-0.95z" class="c1"/>
<path d="M188.96 373.73h1.05v6.2h-1.05v-4.7l-1.45 0.95v-0.95z" class="c1"/>
<path d="M269.03 373.73h1.05v6.2h-1.05v-4.7l-1.45 0.95v-0.95z" class="c1"/>
<path d="M282.37 373.73h1.05v6.2h-1.05v-4.7l-1.45 0.95v-0.95z" class="c1"/>
<path d="M362.44 373.73h1.05v6.2h-1.05v-4.7l-1.45 0.95v-0.95z" class="c1"/>
<path d="M375.79 373.73h1.05v6.2h-1.05v-4.7l-1.45 0.95v-0.95z" class="c1"/>
<path d="M482.55 373.73h1.05v6.2h-1.05v-4.7l-1.45 0.95v-0.95z" class="c1"/>
<path d="M509.24 373.73h1.05v6.2h-1.05v-4.7l-1.45 0.95v-0.95z" class="c1"/>
<path d="M549.27 373.73h1.05v6.2h-1.05v-4.7l-1.45 0.95v-0.95z" class="c1"/>
<path d="M602.65 373.73h1.05v6.2h-1.05v-4.7l-1.45 0.95v-0.95z" class="c1"/>
<path d="M669.38 373.73h1.05v6.2h-1.05v-4.7l-1.45 0.95v-0.95z" class="c1"/>
<text x="2.1" y="393.6" class="lt">2</text>
<path d="M82.2 387.5h1.05v6.2h-1.05v-4.7l-1.45 0.95v-0.95z" class="c1"/>
<path d="M95.54 387.5h1.05v6.2h-1.05v-4.7l-1.45 0.95v-0.95z" class="c1"/>
<path d="M122.23 387.5h1.05v6.2h-1.05v-4.7l-1.45 0.95v-0.95z" class="c1"/>
<path d="M269.03 387.5h1.05v6.2h-1.05v-4.7l-1.45 0.95v-0.95z" class="c1"/>
<path d="M282.37 387.5h1.05v6.2h-1.05v-4.7l-1.45 0.95v-0.95z" class="c1"/>
<path d="M295.72 387.5h1.05v6.2h-1.05v-4.7l-1.45 0.95v-0.95z" class="c1"/>
<path d="M415.82 387.5h1.05v6.2h-1.05v-4.7l-1.45 0.95v-0.95z" class="c1"/>
<path d="M455.86 387.5h1.05v6.2h-1.05v-4.7l-1.45 0.95v-0.95z" class="c1"/>
<path d="M522.58 387.5h1.05v6.2h-1.05v-4.7l-1.45 0.95v-0.95z" class="c1"/>
<path d="M549.27 387.5h1.05v6.2h-1.05v-4.7l-1.45 0.95v-0.95z" class="c1"/>
<path d="M642.69 387.5h1.05v6.2h-1.05v-4.7l-1.45 0.95v-0.95z" class="c1"/>
<path d="M696.07 387.5h1.05v6.2h-1.05v-4.7l-1.45 0.95v-0.95z" class="c1"/>
<path d="M709.41 387.5h1.05v6.2h-1.05v-4.7l-1.45 0.95v-0.95z" class="c1"/>
<path d="M776.14 387.5h1.05v6.2h-1.05v-4.7l-1.45 0.95v-0.95z" class="c1"/>
<text x="2.1" y="407.6" class="lt">1</text>
<text x="15.27" y="407.38" class="ct">2</text>
<text x="41.96" y="407.38" class="ct">2</text>
<path d="M95.54 401.26h1.05v6.2h-1.05v-4.7l-1.45 0.95v-0.95z" class="c1"/>
<path d="M295.72 401.26h1.05v6.2h-1.05v-4.7l-1.45 0.95v-0.95z" class="c1"/>
<path d="M362.44 401.26h1.05v6.2h-1.05v-4.7l-1.45 0.95v-0.95z" class="c1"/>
<path d="M415.82 401.26h1.05v6.2h-1.05v-4.7l-1.45 0.95v-0.95z" class="c1"/>
<path d="M442.51 401.26h1.05v6.2h-1.05v-4.7l-1.45 0.95v-0.95z" class="c1"/>
<path d="M616 401.26h1.05v6.2h-1.05v-4.7l-1.45 0.95v-0.95z" class="c1"/>
<path d="M642.69 401.26h1.05v6.2h-1.05v-4.7l-1.45 0.95v-0.95z" class="c1"/>
<path d="M669.38 401.26h1.05v6.2h-1.05v-4.7l-1.45 0.95v-0.95z" class="c1"/>
<path d="M709.41 401.26h1.05v6.2h-1.05v-4.7l-1.45 0.95v-0.95z" class="c1"/>
<path d="M749.45 401.26h1.05v6.2h-1.05v-4.7l-1.45 0.95v-0.95z" class="c1"/>
<text x="660" y="383.4" class="aw">Activate Windows</text>
<text x="660" y="397" class="aw2">Go to Settings to activate Windows.</text>
</svg></body></html>
